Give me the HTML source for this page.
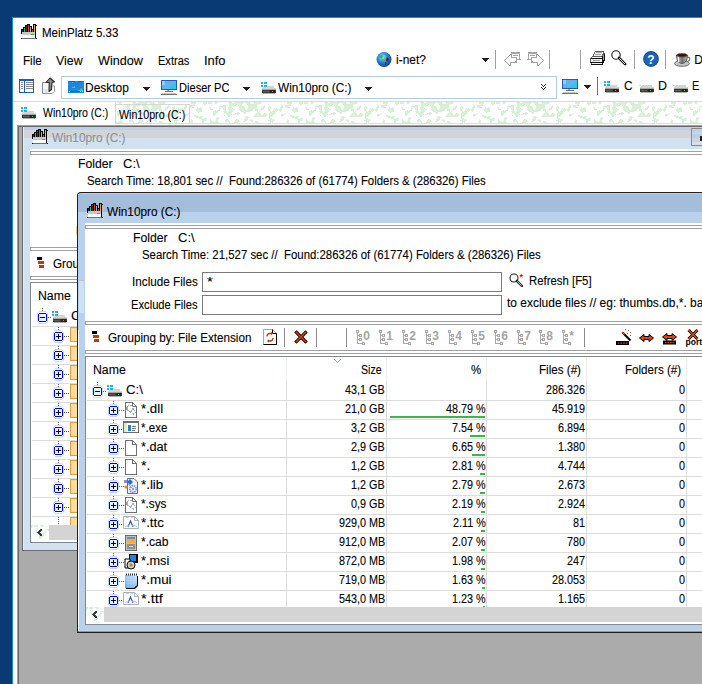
<!DOCTYPE html>
<html><head><meta charset="utf-8"><style>
html,body{margin:0;padding:0;}
body{width:702px;height:684px;overflow:hidden;position:relative;background:#0a3a74;font-family:"Liberation Sans",sans-serif;}
body div{position:absolute;box-sizing:border-box;}
.t{white-space:pre;line-height:1;-webkit-text-stroke:0.1px currentColor;}
svg{position:absolute;overflow:visible;}
</style></head><body>
<svg width="0" height="0" style="position:absolute"><defs><pattern id="nz" width="96" height="24" patternUnits="userSpaceOnUse"><rect width="96" height="24" fill="#fff"/><path d="M0 0h1v1h-1zM1 0h1v1h-1zM3 0h1v1h-1zM4 0h1v1h-1zM5 0h1v1h-1zM6 0h1v1h-1zM9 0h1v1h-1zM10 0h1v1h-1zM11 0h1v1h-1zM12 0h1v1h-1zM23 0h1v1h-1zM24 0h1v1h-1zM25 0h1v1h-1zM26 0h1v1h-1zM29 0h1v1h-1zM30 0h1v1h-1zM31 0h1v1h-1zM32 0h1v1h-1zM33 0h1v1h-1zM34 0h1v1h-1zM35 0h1v1h-1zM36 0h1v1h-1zM37 0h1v1h-1zM38 0h1v1h-1zM39 0h1v1h-1zM40 0h1v1h-1zM41 0h1v1h-1zM42 0h1v1h-1zM43 0h1v1h-1zM44 0h1v1h-1zM49 0h1v1h-1zM50 0h1v1h-1zM51 0h1v1h-1zM52 0h1v1h-1zM53 0h1v1h-1zM54 0h1v1h-1zM55 0h1v1h-1zM56 0h1v1h-1zM82 0h1v1h-1zM83 0h1v1h-1zM84 0h1v1h-1zM85 0h1v1h-1zM86 0h1v1h-1zM94 0h1v1h-1zM95 0h1v1h-1zM0 1h1v1h-1zM1 1h1v1h-1zM3 1h1v1h-1zM4 1h1v1h-1zM5 1h1v1h-1zM6 1h1v1h-1zM10 1h1v1h-1zM11 1h1v1h-1zM24 1h1v1h-1zM25 1h1v1h-1zM26 1h1v1h-1zM27 1h1v1h-1zM28 1h1v1h-1zM29 1h1v1h-1zM30 1h1v1h-1zM31 1h1v1h-1zM32 1h1v1h-1zM33 1h1v1h-1zM34 1h1v1h-1zM35 1h1v1h-1zM36 1h1v1h-1zM37 1h1v1h-1zM41 1h1v1h-1zM42 1h1v1h-1zM43 1h1v1h-1zM44 1h1v1h-1zM45 1h1v1h-1zM49 1h1v1h-1zM50 1h1v1h-1zM51 1h1v1h-1zM52 1h1v1h-1zM53 1h1v1h-1zM54 1h1v1h-1zM55 1h1v1h-1zM82 1h1v1h-1zM83 1h1v1h-1zM84 1h1v1h-1zM85 1h1v1h-1zM86 1h1v1h-1zM94 1h1v1h-1zM95 1h1v1h-1zM0 2h1v1h-1zM24 2h1v1h-1zM25 2h1v1h-1zM26 2h1v1h-1zM27 2h1v1h-1zM28 2h1v1h-1zM29 2h1v1h-1zM30 2h1v1h-1zM31 2h1v1h-1zM32 2h1v1h-1zM33 2h1v1h-1zM34 2h1v1h-1zM35 2h1v1h-1zM36 2h1v1h-1zM42 2h1v1h-1zM43 2h1v1h-1zM44 2h1v1h-1zM45 2h1v1h-1zM46 2h1v1h-1zM47 2h1v1h-1zM48 2h1v1h-1zM49 2h1v1h-1zM50 2h1v1h-1zM51 2h1v1h-1zM52 2h1v1h-1zM84 2h1v1h-1zM85 2h1v1h-1zM95 2h1v1h-1zM4 3h1v1h-1zM6 3h1v1h-1zM18 3h1v1h-1zM19 3h1v1h-1zM20 3h1v1h-1zM24 3h1v1h-1zM25 3h1v1h-1zM26 3h1v1h-1zM27 3h1v1h-1zM28 3h1v1h-1zM29 3h1v1h-1zM30 3h1v1h-1zM33 3h1v1h-1zM34 3h1v1h-1zM35 3h1v1h-1zM36 3h1v1h-1zM43 3h1v1h-1zM44 3h1v1h-1zM45 3h1v1h-1zM46 3h1v1h-1zM47 3h1v1h-1zM48 3h1v1h-1zM49 3h1v1h-1zM50 3h1v1h-1zM51 3h1v1h-1zM59 3h1v1h-1zM76 3h1v1h-1zM77 3h1v1h-1zM80 3h1v1h-1zM81 3h1v1h-1zM82 3h1v1h-1zM83 3h1v1h-1zM84 3h1v1h-1zM85 3h1v1h-1zM14 4h1v1h-1zM15 4h1v1h-1zM16 4h1v1h-1zM17 4h1v1h-1zM18 4h1v1h-1zM19 4h1v1h-1zM20 4h1v1h-1zM24 4h1v1h-1zM25 4h1v1h-1zM26 4h1v1h-1zM28 4h1v1h-1zM34 4h1v1h-1zM35 4h1v1h-1zM36 4h1v1h-1zM37 4h1v1h-1zM38 4h1v1h-1zM43 4h1v1h-1zM44 4h1v1h-1zM45 4h1v1h-1zM46 4h1v1h-1zM47 4h1v1h-1zM48 4h1v1h-1zM49 4h1v1h-1zM50 4h1v1h-1zM51 4h1v1h-1zM58 4h1v1h-1zM59 4h1v1h-1zM64 4h1v1h-1zM65 4h1v1h-1zM76 4h1v1h-1zM77 4h1v1h-1zM80 4h1v1h-1zM81 4h1v1h-1zM82 4h1v1h-1zM83 4h1v1h-1zM4 5h1v1h-1zM5 5h1v1h-1zM17 5h1v1h-1zM18 5h1v1h-1zM19 5h1v1h-1zM20 5h1v1h-1zM23 5h1v1h-1zM24 5h1v1h-1zM25 5h1v1h-1zM26 5h1v1h-1zM34 5h1v1h-1zM35 5h1v1h-1zM36 5h1v1h-1zM37 5h1v1h-1zM38 5h1v1h-1zM39 5h1v1h-1zM43 5h1v1h-1zM44 5h1v1h-1zM45 5h1v1h-1zM46 5h1v1h-1zM47 5h1v1h-1zM48 5h1v1h-1zM49 5h1v1h-1zM50 5h1v1h-1zM51 5h1v1h-1zM57 5h1v1h-1zM58 5h1v1h-1zM59 5h1v1h-1zM63 5h1v1h-1zM64 5h1v1h-1zM65 5h1v1h-1zM75 5h1v1h-1zM76 5h1v1h-1zM77 5h1v1h-1zM81 5h1v1h-1zM82 5h1v1h-1zM83 5h1v1h-1zM84 5h1v1h-1zM88 5h1v1h-1zM91 5h1v1h-1zM5 6h1v1h-1zM14 6h1v1h-1zM15 6h1v1h-1zM18 6h1v1h-1zM19 6h1v1h-1zM20 6h1v1h-1zM23 6h1v1h-1zM24 6h1v1h-1zM25 6h1v1h-1zM26 6h1v1h-1zM27 6h1v1h-1zM34 6h1v1h-1zM35 6h1v1h-1zM36 6h1v1h-1zM37 6h1v1h-1zM38 6h1v1h-1zM39 6h1v1h-1zM43 6h1v1h-1zM44 6h1v1h-1zM45 6h1v1h-1zM46 6h1v1h-1zM47 6h1v1h-1zM48 6h1v1h-1zM49 6h1v1h-1zM50 6h1v1h-1zM51 6h1v1h-1zM56 6h1v1h-1zM57 6h1v1h-1zM58 6h1v1h-1zM63 6h1v1h-1zM64 6h1v1h-1zM65 6h1v1h-1zM69 6h1v1h-1zM70 6h1v1h-1zM71 6h1v1h-1zM75 6h1v1h-1zM76 6h1v1h-1zM88 6h1v1h-1zM89 6h1v1h-1zM90 6h1v1h-1zM91 6h1v1h-1zM92 6h1v1h-1zM5 7h1v1h-1zM6 7h1v1h-1zM7 7h1v1h-1zM14 7h1v1h-1zM18 7h1v1h-1zM19 7h1v1h-1zM20 7h1v1h-1zM23 7h1v1h-1zM24 7h1v1h-1zM25 7h1v1h-1zM26 7h1v1h-1zM27 7h1v1h-1zM28 7h1v1h-1zM29 7h1v1h-1zM34 7h1v1h-1zM35 7h1v1h-1zM36 7h1v1h-1zM37 7h1v1h-1zM38 7h1v1h-1zM39 7h1v1h-1zM40 7h1v1h-1zM42 7h1v1h-1zM43 7h1v1h-1zM44 7h1v1h-1zM45 7h1v1h-1zM46 7h1v1h-1zM47 7h1v1h-1zM50 7h1v1h-1zM51 7h1v1h-1zM52 7h1v1h-1zM55 7h1v1h-1zM56 7h1v1h-1zM57 7h1v1h-1zM63 7h1v1h-1zM64 7h1v1h-1zM69 7h1v1h-1zM70 7h1v1h-1zM71 7h1v1h-1zM72 7h1v1h-1zM73 7h1v1h-1zM74 7h1v1h-1zM75 7h1v1h-1zM76 7h1v1h-1zM87 7h1v1h-1zM88 7h1v1h-1zM89 7h1v1h-1zM90 7h1v1h-1zM91 7h1v1h-1zM92 7h1v1h-1zM10 8h1v1h-1zM12 8h1v1h-1zM13 8h1v1h-1zM14 8h1v1h-1zM19 8h1v1h-1zM20 8h1v1h-1zM24 8h1v1h-1zM25 8h1v1h-1zM26 8h1v1h-1zM27 8h1v1h-1zM28 8h1v1h-1zM35 8h1v1h-1zM36 8h1v1h-1zM37 8h1v1h-1zM38 8h1v1h-1zM39 8h1v1h-1zM40 8h1v1h-1zM41 8h1v1h-1zM42 8h1v1h-1zM43 8h1v1h-1zM44 8h1v1h-1zM45 8h1v1h-1zM46 8h1v1h-1zM50 8h1v1h-1zM51 8h1v1h-1zM52 8h1v1h-1zM56 8h1v1h-1zM63 8h1v1h-1zM64 8h1v1h-1zM68 8h1v1h-1zM69 8h1v1h-1zM70 8h1v1h-1zM71 8h1v1h-1zM72 8h1v1h-1zM74 8h1v1h-1zM75 8h1v1h-1zM76 8h1v1h-1zM87 8h1v1h-1zM88 8h1v1h-1zM89 8h1v1h-1zM90 8h1v1h-1zM91 8h1v1h-1zM92 8h1v1h-1zM8 9h1v1h-1zM9 9h1v1h-1zM10 9h1v1h-1zM11 9h1v1h-1zM12 9h1v1h-1zM18 9h1v1h-1zM19 9h1v1h-1zM20 9h1v1h-1zM21 9h1v1h-1zM23 9h1v1h-1zM24 9h1v1h-1zM25 9h1v1h-1zM26 9h1v1h-1zM27 9h1v1h-1zM36 9h1v1h-1zM37 9h1v1h-1zM38 9h1v1h-1zM39 9h1v1h-1zM40 9h1v1h-1zM41 9h1v1h-1zM42 9h1v1h-1zM43 9h1v1h-1zM44 9h1v1h-1zM52 9h1v1h-1zM54 9h1v1h-1zM65 9h1v1h-1zM67 9h1v1h-1zM68 9h1v1h-1zM69 9h1v1h-1zM70 9h1v1h-1zM71 9h1v1h-1zM75 9h1v1h-1zM88 9h1v1h-1zM89 9h1v1h-1zM90 9h1v1h-1zM91 9h1v1h-1zM92 9h1v1h-1zM8 10h1v1h-1zM9 10h1v1h-1zM10 10h1v1h-1zM11 10h1v1h-1zM12 10h1v1h-1zM19 10h1v1h-1zM20 10h1v1h-1zM21 10h1v1h-1zM22 10h1v1h-1zM23 10h1v1h-1zM24 10h1v1h-1zM25 10h1v1h-1zM26 10h1v1h-1zM32 10h1v1h-1zM33 10h1v1h-1zM38 10h1v1h-1zM39 10h1v1h-1zM40 10h1v1h-1zM52 10h1v1h-1zM53 10h1v1h-1zM54 10h1v1h-1zM65 10h1v1h-1zM66 10h1v1h-1zM67 10h1v1h-1zM68 10h1v1h-1zM69 10h1v1h-1zM70 10h1v1h-1zM89 10h1v1h-1zM8 11h1v1h-1zM9 11h1v1h-1zM10 11h1v1h-1zM11 11h1v1h-1zM19 11h1v1h-1zM21 11h1v1h-1zM22 11h1v1h-1zM23 11h1v1h-1zM24 11h1v1h-1zM25 11h1v1h-1zM26 11h1v1h-1zM30 11h1v1h-1zM31 11h1v1h-1zM32 11h1v1h-1zM33 11h1v1h-1zM34 11h1v1h-1zM39 11h1v1h-1zM40 11h1v1h-1zM51 11h1v1h-1zM52 11h1v1h-1zM53 11h1v1h-1zM54 11h1v1h-1zM55 11h1v1h-1zM59 11h1v1h-1zM60 11h1v1h-1zM64 11h1v1h-1zM65 11h1v1h-1zM66 11h1v1h-1zM67 11h1v1h-1zM68 11h1v1h-1zM69 11h1v1h-1zM79 11h1v1h-1zM8 12h1v1h-1zM9 12h1v1h-1zM10 12h1v1h-1zM22 12h1v1h-1zM23 12h1v1h-1zM24 12h1v1h-1zM25 12h1v1h-1zM26 12h1v1h-1zM28 12h1v1h-1zM30 12h1v1h-1zM32 12h1v1h-1zM33 12h1v1h-1zM50 12h1v1h-1zM51 12h1v1h-1zM52 12h1v1h-1zM53 12h1v1h-1zM54 12h1v1h-1zM55 12h1v1h-1zM58 12h1v1h-1zM59 12h1v1h-1zM60 12h1v1h-1zM61 12h1v1h-1zM64 12h1v1h-1zM65 12h1v1h-1zM66 12h1v1h-1zM67 12h1v1h-1zM68 12h1v1h-1zM76 12h1v1h-1zM77 12h1v1h-1zM78 12h1v1h-1zM8 13h1v1h-1zM9 13h1v1h-1zM19 13h1v1h-1zM22 13h1v1h-1zM23 13h1v1h-1zM24 13h1v1h-1zM25 13h1v1h-1zM49 13h1v1h-1zM50 13h1v1h-1zM51 13h1v1h-1zM52 13h1v1h-1zM53 13h1v1h-1zM54 13h1v1h-1zM55 13h1v1h-1zM56 13h1v1h-1zM57 13h1v1h-1zM58 13h1v1h-1zM59 13h1v1h-1zM60 13h1v1h-1zM61 13h1v1h-1zM64 13h1v1h-1zM65 13h1v1h-1zM66 13h1v1h-1zM67 13h1v1h-1zM76 13h1v1h-1zM77 13h1v1h-1zM78 13h1v1h-1zM85 13h1v1h-1zM86 13h1v1h-1zM87 13h1v1h-1zM88 13h1v1h-1zM23 14h1v1h-1zM24 14h1v1h-1zM41 14h1v1h-1zM42 14h1v1h-1zM48 14h1v1h-1zM49 14h1v1h-1zM50 14h1v1h-1zM51 14h1v1h-1zM52 14h1v1h-1zM53 14h1v1h-1zM54 14h1v1h-1zM55 14h1v1h-1zM56 14h1v1h-1zM57 14h1v1h-1zM58 14h1v1h-1zM59 14h1v1h-1zM60 14h1v1h-1zM64 14h1v1h-1zM65 14h1v1h-1zM66 14h1v1h-1zM76 14h1v1h-1zM85 14h1v1h-1zM86 14h1v1h-1zM87 14h1v1h-1zM88 14h1v1h-1zM89 14h1v1h-1zM91 14h1v1h-1zM92 14h1v1h-1zM93 14h1v1h-1zM12 15h1v1h-1zM13 15h1v1h-1zM40 15h1v1h-1zM41 15h1v1h-1zM42 15h1v1h-1zM43 15h1v1h-1zM64 15h1v1h-1zM87 15h1v1h-1zM88 15h1v1h-1zM89 15h1v1h-1zM90 15h1v1h-1zM91 15h1v1h-1zM92 15h1v1h-1zM0 16h1v1h-1zM1 16h1v1h-1zM11 16h1v1h-1zM12 16h1v1h-1zM13 16h1v1h-1zM40 16h1v1h-1zM41 16h1v1h-1zM42 16h1v1h-1zM64 16h1v1h-1zM65 16h1v1h-1zM66 16h1v1h-1zM90 16h1v1h-1zM91 16h1v1h-1zM92 16h1v1h-1zM93 16h1v1h-1zM95 16h1v1h-1zM0 17h1v1h-1zM1 17h1v1h-1zM5 17h1v1h-1zM11 17h1v1h-1zM12 17h1v1h-1zM21 17h1v1h-1zM22 17h1v1h-1zM31 17h1v1h-1zM32 17h1v1h-1zM39 17h1v1h-1zM40 17h1v1h-1zM41 17h1v1h-1zM42 17h1v1h-1zM46 17h1v1h-1zM65 17h1v1h-1zM66 17h1v1h-1zM67 17h1v1h-1zM68 17h1v1h-1zM82 17h1v1h-1zM92 17h1v1h-1zM93 17h1v1h-1zM94 17h1v1h-1zM95 17h1v1h-1zM0 18h1v1h-1zM5 18h1v1h-1zM6 18h1v1h-1zM11 18h1v1h-1zM12 18h1v1h-1zM20 18h1v1h-1zM21 18h1v1h-1zM22 18h1v1h-1zM23 18h1v1h-1zM30 18h1v1h-1zM31 18h1v1h-1zM32 18h1v1h-1zM33 18h1v1h-1zM39 18h1v1h-1zM40 18h1v1h-1zM41 18h1v1h-1zM45 18h1v1h-1zM46 18h1v1h-1zM47 18h1v1h-1zM63 18h1v1h-1zM64 18h1v1h-1zM65 18h1v1h-1zM66 18h1v1h-1zM67 18h1v1h-1zM68 18h1v1h-1zM69 18h1v1h-1zM82 18h1v1h-1zM83 18h1v1h-1zM93 18h1v1h-1zM94 18h1v1h-1zM95 18h1v1h-1zM5 19h1v1h-1zM6 19h1v1h-1zM7 19h1v1h-1zM10 19h1v1h-1zM11 19h1v1h-1zM12 19h1v1h-1zM20 19h1v1h-1zM21 19h1v1h-1zM22 19h1v1h-1zM23 19h1v1h-1zM24 19h1v1h-1zM30 19h1v1h-1zM31 19h1v1h-1zM32 19h1v1h-1zM33 19h1v1h-1zM38 19h1v1h-1zM39 19h1v1h-1zM46 19h1v1h-1zM47 19h1v1h-1zM50 19h1v1h-1zM51 19h1v1h-1zM52 19h1v1h-1zM65 19h1v1h-1zM66 19h1v1h-1zM67 19h1v1h-1zM81 19h1v1h-1zM82 19h1v1h-1zM83 19h1v1h-1zM93 19h1v1h-1zM94 19h1v1h-1zM5 20h1v1h-1zM6 20h1v1h-1zM7 20h1v1h-1zM8 20h1v1h-1zM9 20h1v1h-1zM10 20h1v1h-1zM11 20h1v1h-1zM12 20h1v1h-1zM13 20h1v1h-1zM24 20h1v1h-1zM29 20h1v1h-1zM30 20h1v1h-1zM31 20h1v1h-1zM32 20h1v1h-1zM50 20h1v1h-1zM51 20h1v1h-1zM52 20h1v1h-1zM53 20h1v1h-1zM65 20h1v1h-1zM67 20h1v1h-1zM82 20h1v1h-1zM83 20h1v1h-1zM93 20h1v1h-1zM94 20h1v1h-1zM5 21h1v1h-1zM6 21h1v1h-1zM7 21h1v1h-1zM8 21h1v1h-1zM9 21h1v1h-1zM10 21h1v1h-1zM11 21h1v1h-1zM12 21h1v1h-1zM24 21h1v1h-1zM26 21h1v1h-1zM28 21h1v1h-1zM29 21h1v1h-1zM30 21h1v1h-1zM31 21h1v1h-1zM32 21h1v1h-1zM49 21h1v1h-1zM52 21h1v1h-1zM53 21h1v1h-1zM54 21h1v1h-1zM83 21h1v1h-1zM84 21h1v1h-1zM85 21h1v1h-1zM86 21h1v1h-1zM87 21h1v1h-1zM93 21h1v1h-1zM94 21h1v1h-1zM5 22h1v1h-1zM6 22h1v1h-1zM7 22h1v1h-1zM8 22h1v1h-1zM9 22h1v1h-1zM10 22h1v1h-1zM11 22h1v1h-1zM12 22h1v1h-1zM24 22h1v1h-1zM29 22h1v1h-1zM30 22h1v1h-1zM31 22h1v1h-1zM39 22h1v1h-1zM40 22h1v1h-1zM41 22h1v1h-1zM42 22h1v1h-1zM43 22h1v1h-1zM52 22h1v1h-1zM53 22h1v1h-1zM54 22h1v1h-1zM55 22h1v1h-1zM69 22h1v1h-1zM70 22h1v1h-1zM83 22h1v1h-1zM84 22h1v1h-1zM85 22h1v1h-1zM86 22h1v1h-1zM87 22h1v1h-1zM88 22h1v1h-1zM93 22h1v1h-1zM94 22h1v1h-1zM95 22h1v1h-1zM1 23h1v1h-1zM3 23h1v1h-1zM4 23h1v1h-1zM5 23h1v1h-1zM6 23h1v1h-1zM7 23h1v1h-1zM8 23h1v1h-1zM9 23h1v1h-1zM10 23h1v1h-1zM11 23h1v1h-1zM12 23h1v1h-1zM24 23h1v1h-1zM25 23h1v1h-1zM29 23h1v1h-1zM30 23h1v1h-1zM31 23h1v1h-1zM38 23h1v1h-1zM39 23h1v1h-1zM40 23h1v1h-1zM41 23h1v1h-1zM42 23h1v1h-1zM43 23h1v1h-1zM49 23h1v1h-1zM51 23h1v1h-1zM52 23h1v1h-1zM53 23h1v1h-1zM54 23h1v1h-1zM55 23h1v1h-1zM56 23h1v1h-1zM70 23h1v1h-1zM82 23h1v1h-1zM83 23h1v1h-1zM84 23h1v1h-1zM85 23h1v1h-1zM86 23h1v1h-1zM87 23h1v1h-1zM93 23h1v1h-1zM94 23h1v1h-1zM95 23h1v1h-1z" fill="#d8f0d8"/></pattern></defs></svg>
<div style="left:12px;top:17px;width:690px;height:667px;background:#ffffff;"></div>
<div style="left:12px;top:17px;width:691px;height:1px;background:#1e88e5;"></div>
<div style="left:12px;top:17px;width:1px;height:668px;background:#1e88e5;"></div>
<svg style="left:21px;top:24px;" width="16" height="16" viewBox="0 0 16 16" shape-rendering="crispEdges"><rect x="6" y="0" width="3" height="1" fill="#000"/><rect x="12" y="0" width="3" height="1" fill="#000"/><rect x="4" y="1" width="3" height="1" fill="#000"/><rect x="7" y="1" width="1" height="1" fill="#c84818"/><rect x="8" y="1" width="1" height="1" fill="#000"/><rect x="12" y="1" width="1" height="1" fill="#000"/><rect x="13" y="1" width="1" height="1" fill="#f0a848"/><rect x="14" y="1" width="2" height="1" fill="#000"/><rect x="4" y="2" width="1" height="1" fill="#000"/><rect x="5" y="2" width="1" height="1" fill="#503030"/><rect x="6" y="2" width="1" height="1" fill="#000"/><rect x="7" y="2" width="1" height="1" fill="#c84818"/><rect x="8" y="2" width="3" height="1" fill="#000"/><rect x="12" y="2" width="1" height="1" fill="#000"/><rect x="13" y="2" width="1" height="1" fill="#f0a848"/><rect x="14" y="2" width="1" height="1" fill="#000"/><rect x="2" y="3" width="3" height="1" fill="#000"/><rect x="5" y="3" width="1" height="1" fill="#503030"/><rect x="6" y="3" width="1" height="1" fill="#000"/><rect x="7" y="3" width="1" height="1" fill="#c84818"/><rect x="8" y="3" width="1" height="1" fill="#000"/><rect x="9" y="3" width="1" height="1" fill="#a0a8f0"/><rect x="10" y="3" width="1" height="1" fill="#000"/><rect x="12" y="3" width="1" height="1" fill="#000"/><rect x="13" y="3" width="1" height="1" fill="#f0a848"/><rect x="14" y="3" width="1" height="1" fill="#000"/><rect x="2" y="4" width="1" height="1" fill="#000"/><rect x="3" y="4" width="1" height="1" fill="#30c040"/><rect x="4" y="4" width="1" height="1" fill="#000"/><rect x="5" y="4" width="1" height="1" fill="#503030"/><rect x="6" y="4" width="1" height="1" fill="#000"/><rect x="7" y="4" width="1" height="1" fill="#c84818"/><rect x="8" y="4" width="1" height="1" fill="#000"/><rect x="9" y="4" width="1" height="1" fill="#a0a8f0"/><rect x="10" y="4" width="1" height="1" fill="#000"/><rect x="12" y="4" width="1" height="1" fill="#000"/><rect x="13" y="4" width="1" height="1" fill="#f0a848"/><rect x="14" y="4" width="1" height="1" fill="#000"/><rect x="0" y="5" width="3" height="1" fill="#000"/><rect x="3" y="5" width="1" height="1" fill="#30c040"/><rect x="4" y="5" width="1" height="1" fill="#000"/><rect x="5" y="5" width="1" height="1" fill="#503030"/><rect x="6" y="5" width="1" height="1" fill="#000"/><rect x="7" y="5" width="1" height="1" fill="#c84818"/><rect x="8" y="5" width="1" height="1" fill="#000"/><rect x="9" y="5" width="1" height="1" fill="#a0a8f0"/><rect x="10" y="5" width="3" height="1" fill="#000"/><rect x="13" y="5" width="1" height="1" fill="#f0a848"/><rect x="14" y="5" width="1" height="1" fill="#000"/><rect x="0" y="6" width="1" height="1" fill="#000"/><rect x="1" y="6" width="1" height="1" fill="#1010ff"/><rect x="2" y="6" width="1" height="1" fill="#000"/><rect x="3" y="6" width="1" height="1" fill="#30c040"/><rect x="4" y="6" width="1" height="1" fill="#000"/><rect x="5" y="6" width="1" height="1" fill="#503030"/><rect x="6" y="6" width="1" height="1" fill="#000"/><rect x="7" y="6" width="1" height="1" fill="#c84818"/><rect x="8" y="6" width="1" height="1" fill="#000"/><rect x="9" y="6" width="1" height="1" fill="#a0a8f0"/><rect x="10" y="6" width="1" height="1" fill="#000"/><rect x="11" y="6" width="1" height="1" fill="#c84818"/><rect x="12" y="6" width="1" height="1" fill="#000"/><rect x="13" y="6" width="1" height="1" fill="#f0a848"/><rect x="14" y="6" width="1" height="1" fill="#000"/><rect x="0" y="7" width="1" height="1" fill="#000"/><rect x="1" y="7" width="1" height="1" fill="#1010ff"/><rect x="2" y="7" width="1" height="1" fill="#000"/><rect x="3" y="7" width="1" height="1" fill="#30c040"/><rect x="4" y="7" width="1" height="1" fill="#000"/><rect x="5" y="7" width="1" height="1" fill="#503030"/><rect x="6" y="7" width="1" height="1" fill="#000"/><rect x="7" y="7" width="1" height="1" fill="#c84818"/><rect x="8" y="7" width="1" height="1" fill="#000"/><rect x="9" y="7" width="1" height="1" fill="#a0a8f0"/><rect x="10" y="7" width="1" height="1" fill="#000"/><rect x="11" y="7" width="1" height="1" fill="#c84818"/><rect x="12" y="7" width="1" height="1" fill="#000"/><rect x="13" y="7" width="1" height="1" fill="#f0a848"/><rect x="14" y="7" width="1" height="1" fill="#000"/><rect x="0" y="8" width="1" height="1" fill="#000"/><rect x="1" y="8" width="13" height="1" fill="#c8ccc0"/><rect x="14" y="8" width="1" height="1" fill="#000"/><rect x="0" y="9" width="1" height="1" fill="#000"/><rect x="1" y="9" width="13" height="1" fill="#c8ccc0"/><rect x="14" y="9" width="1" height="1" fill="#000"/><rect x="1" y="10" width="9" height="1" fill="#c8ccc0"/><rect x="10" y="10" width="3" height="1" fill="#30c040"/><rect x="13" y="10" width="1" height="1" fill="#c8ccc0"/><rect x="14" y="10" width="1" height="1" fill="#000"/><rect x="1" y="11" width="13" height="1" fill="#ffffff"/><rect x="14" y="11" width="1" height="1" fill="#000"/><rect x="1" y="12" width="13" height="1" fill="#ffffff"/><rect x="14" y="12" width="1" height="1" fill="#000"/><rect x="1" y="13" width="13" height="1" fill="#ffffff"/><rect x="14" y="13" width="1" height="1" fill="#000"/><rect x="0" y="14" width="1" height="1" fill="#000"/><rect x="1" y="14" width="14" height="1" fill="#707070"/><rect x="15" y="14" width="1" height="1" fill="#000"/></svg>
<div class="t" style="left:41.71px;top:27.00px;font-size:12px;color:#000;font-weight:normal;transform:scaleX(0.9621);transform-origin:0 0;">MeinPlatz 5.33</div>
<div class="t" style="left:22.90px;top:55.00px;font-size:12px;color:#000;font-weight:normal;transform:scaleX(0.9719);transform-origin:0 0;">File</div>
<div class="t" style="left:56.06px;top:55.00px;font-size:12px;color:#000;font-weight:normal;transform:scaleX(1.0346);transform-origin:0 0;">View</div>
<div class="t" style="left:97.54px;top:55.00px;font-size:12px;color:#000;font-weight:normal;transform:scaleX(1.0498);transform-origin:0 0;">Window</div>
<div class="t" style="left:157.54px;top:55.00px;font-size:12px;color:#000;font-weight:normal;transform:scaleX(0.9209);transform-origin:0 0;">Extras</div>
<div class="t" style="left:203.62px;top:55.00px;font-size:12px;color:#000;font-weight:normal;transform:scaleX(1.0767);transform-origin:0 0;">Info</div>
<div class="t" style="left:396.08px;top:54.00px;font-size:12px;color:#000;font-weight:normal;transform:scaleX(0.9968);transform-origin:0 0;">i-net?</div>
<div class="t" style="left:694.28px;top:54.00px;font-size:12px;color:#000;font-weight:normal;transform:scaleX(1.0000);transform-origin:0 0;">D</div>
<svg style="left:376px;top:51px;shape-rendering:auto" width="16" height="16" viewBox="0 0 16 16" shape-rendering="crispEdges"><defs><radialGradient id="gl" cx="0.4" cy="0.35" r="0.7"><stop offset="0" stop-color="#9fe0ff"/><stop offset="0.5" stop-color="#2a7fd8"/><stop offset="1" stop-color="#103a8a"/></radialGradient></defs>
<circle cx="8" cy="8.5" r="7.5" fill="url(#gl)"/>
<path d="M3 5 l3 -1 l1 2 l-2 2z M5 9 l2 -1 l1 2z M10 5 l2 1 l0 3 l-2 -1z M8 10 l2 0 l-1 3z" fill="#28c040"/>
<path d="M11 6 l2 2 l-2 3 l-1 -2z M9 11 l1 0 l0 3 l-1 0z" fill="#5a1c1c"/></svg>
<svg style="left:482px;top:58px;" width="7" height="4" viewBox="0 0 7 4" shape-rendering="crispEdges"><rect x="0" y="0" width="7" height="1" fill="#2a1a1a"/><rect x="1" y="1" width="5" height="1" fill="#2a1a1a"/><rect x="2" y="2" width="3" height="1" fill="#2a1a1a"/><rect x="3" y="3" width="1" height="1" fill="#2a1a1a"/></svg>
<div style="left:495px;top:50px;width:1px;height:19px;background:#a0a0a0;"></div>
<div style="left:549px;top:50px;width:1px;height:19px;background:#a0a0a0;"></div>
<div style="left:580px;top:50px;width:1px;height:19px;background:#a0a0a0;"></div>
<div style="left:634px;top:50px;width:1px;height:19px;background:#a0a0a0;"></div>
<div style="left:665px;top:50px;width:1px;height:19px;background:#a0a0a0;"></div>
<svg style="left:503px;top:52px;" width="18" height="14" viewBox="0 0 18 14" shape-rendering="crispEdges"><rect x="8" y="0" width="9" height="1" fill="#a4a4a4"/><rect x="8" y="1" width="9" height="1" fill="#a4a4a4"/><rect x="7" y="2" width="2" height="1" fill="#a4a4a4"/><rect x="16" y="2" width="1" height="1" fill="#a4a4a4"/><rect x="6" y="3" width="1" height="1" fill="#a4a4a4"/><rect x="8" y="3" width="1" height="1" fill="#a4a4a4"/><rect x="10" y="3" width="5" height="1" fill="#a4a4a4"/><rect x="16" y="3" width="1" height="1" fill="#a4a4a4"/><rect x="5" y="4" width="1" height="1" fill="#a4a4a4"/><rect x="8" y="4" width="1" height="1" fill="#a4a4a4"/><rect x="16" y="4" width="1" height="1" fill="#a4a4a4"/><rect x="4" y="5" width="1" height="1" fill="#a4a4a4"/><rect x="8" y="5" width="6" height="1" fill="#a4a4a4"/><rect x="16" y="5" width="1" height="1" fill="#a4a4a4"/><rect x="3" y="6" width="1" height="1" fill="#a4a4a4"/><rect x="13" y="6" width="1" height="1" fill="#a4a4a4"/><rect x="16" y="6" width="1" height="1" fill="#a4a4a4"/><rect x="2" y="7" width="1" height="1" fill="#a4a4a4"/><rect x="13" y="7" width="5" height="1" fill="#a4a4a4"/><rect x="1" y="8" width="1" height="1" fill="#a4a4a4"/><rect x="13" y="8" width="1" height="1" fill="#a4a4a4"/><rect x="2" y="9" width="1" height="1" fill="#a4a4a4"/><rect x="12" y="9" width="2" height="1" fill="#a4a4a4"/><rect x="3" y="10" width="1" height="1" fill="#a4a4a4"/><rect x="7" y="10" width="7" height="1" fill="#a4a4a4"/><rect x="4" y="11" width="1" height="1" fill="#a4a4a4"/><rect x="7" y="11" width="1" height="1" fill="#a4a4a4"/><rect x="5" y="12" width="1" height="1" fill="#a4a4a4"/><rect x="7" y="12" width="1" height="1" fill="#a4a4a4"/><rect x="6" y="13" width="2" height="1" fill="#a4a4a4"/></svg>
<svg style="left:527px;top:52px;" width="18" height="14" viewBox="0 0 18 14" shape-rendering="crispEdges"><rect x="1" y="0" width="9" height="1" fill="#a4a4a4"/><rect x="1" y="1" width="9" height="1" fill="#a4a4a4"/><rect x="1" y="2" width="1" height="1" fill="#a4a4a4"/><rect x="9" y="2" width="2" height="1" fill="#a4a4a4"/><rect x="1" y="3" width="1" height="1" fill="#a4a4a4"/><rect x="3" y="3" width="5" height="1" fill="#a4a4a4"/><rect x="9" y="3" width="1" height="1" fill="#a4a4a4"/><rect x="11" y="3" width="1" height="1" fill="#a4a4a4"/><rect x="1" y="4" width="1" height="1" fill="#a4a4a4"/><rect x="9" y="4" width="1" height="1" fill="#a4a4a4"/><rect x="12" y="4" width="1" height="1" fill="#a4a4a4"/><rect x="1" y="5" width="1" height="1" fill="#a4a4a4"/><rect x="4" y="5" width="6" height="1" fill="#a4a4a4"/><rect x="13" y="5" width="1" height="1" fill="#a4a4a4"/><rect x="1" y="6" width="1" height="1" fill="#a4a4a4"/><rect x="4" y="6" width="1" height="1" fill="#a4a4a4"/><rect x="14" y="6" width="1" height="1" fill="#a4a4a4"/><rect x="0" y="7" width="5" height="1" fill="#a4a4a4"/><rect x="15" y="7" width="1" height="1" fill="#a4a4a4"/><rect x="4" y="8" width="1" height="1" fill="#a4a4a4"/><rect x="16" y="8" width="1" height="1" fill="#a4a4a4"/><rect x="4" y="9" width="2" height="1" fill="#a4a4a4"/><rect x="15" y="9" width="1" height="1" fill="#a4a4a4"/><rect x="4" y="10" width="7" height="1" fill="#a4a4a4"/><rect x="14" y="10" width="1" height="1" fill="#a4a4a4"/><rect x="10" y="11" width="1" height="1" fill="#a4a4a4"/><rect x="13" y="11" width="1" height="1" fill="#a4a4a4"/><rect x="10" y="12" width="1" height="1" fill="#a4a4a4"/><rect x="12" y="12" width="1" height="1" fill="#a4a4a4"/><rect x="10" y="13" width="2" height="1" fill="#a4a4a4"/></svg>
<svg style="left:589px;top:51px;" width="16" height="14" viewBox="0 0 16 14" shape-rendering="crispEdges"><rect x="6" y="0" width="9" height="1" fill="#606060"/><rect x="5" y="1" width="1" height="1" fill="#606060"/><rect x="6" y="1" width="1" height="1" fill="#f0f0f0"/><rect x="7" y="1" width="6" height="1" fill="#a0a0a0"/><rect x="13" y="1" width="1" height="1" fill="#f0f0f0"/><rect x="14" y="1" width="1" height="1" fill="#606060"/><rect x="5" y="2" width="1" height="1" fill="#606060"/><rect x="6" y="2" width="8" height="1" fill="#f0f0f0"/><rect x="14" y="2" width="2" height="1" fill="#606060"/><rect x="4" y="3" width="1" height="1" fill="#606060"/><rect x="5" y="3" width="1" height="1" fill="#f0f0f0"/><rect x="6" y="3" width="6" height="1" fill="#a0a0a0"/><rect x="12" y="3" width="1" height="1" fill="#f0f0f0"/><rect x="13" y="3" width="2" height="1" fill="#606060"/><rect x="15" y="3" width="1" height="1" fill="#101010"/><rect x="4" y="4" width="1" height="1" fill="#606060"/><rect x="5" y="4" width="8" height="1" fill="#f0f0f0"/><rect x="13" y="4" width="1" height="1" fill="#606060"/><rect x="14" y="4" width="1" height="1" fill="#a0a0a0"/><rect x="15" y="4" width="1" height="1" fill="#101010"/><rect x="3" y="5" width="10" height="1" fill="#606060"/><rect x="13" y="5" width="1" height="1" fill="#101010"/><rect x="14" y="5" width="1" height="1" fill="#a0a0a0"/><rect x="15" y="5" width="1" height="1" fill="#101010"/><rect x="2" y="6" width="1" height="1" fill="#606060"/><rect x="3" y="6" width="10" height="1" fill="#f0f0f0"/><rect x="13" y="6" width="1" height="1" fill="#101010"/><rect x="14" y="6" width="1" height="1" fill="#a0a0a0"/><rect x="15" y="6" width="1" height="1" fill="#101010"/><rect x="1" y="7" width="1" height="1" fill="#606060"/><rect x="2" y="7" width="12" height="1" fill="#101010"/><rect x="14" y="7" width="1" height="1" fill="#a0a0a0"/><rect x="15" y="7" width="1" height="1" fill="#101010"/><rect x="1" y="8" width="1" height="1" fill="#606060"/><rect x="2" y="8" width="11" height="1" fill="#f0f0f0"/><rect x="13" y="8" width="1" height="1" fill="#101010"/><rect x="14" y="8" width="1" height="1" fill="#a0a0a0"/><rect x="15" y="8" width="1" height="1" fill="#101010"/><rect x="1" y="9" width="1" height="1" fill="#606060"/><rect x="2" y="9" width="2" height="1" fill="#f0f0f0"/><rect x="4" y="9" width="7" height="1" fill="#a0a0a0"/><rect x="11" y="9" width="2" height="1" fill="#f0f0f0"/><rect x="13" y="9" width="3" height="1" fill="#101010"/><rect x="1" y="10" width="1" height="1" fill="#606060"/><rect x="2" y="10" width="11" height="1" fill="#f0f0f0"/><rect x="13" y="10" width="2" height="1" fill="#101010"/><rect x="1" y="11" width="14" height="1" fill="#101010"/><rect x="2" y="12" width="1" height="1" fill="#606060"/><rect x="3" y="12" width="10" height="1" fill="#f0f0f0"/><rect x="13" y="12" width="1" height="1" fill="#101010"/><rect x="2" y="13" width="12" height="1" fill="#101010"/></svg>
<svg style="left:611px;top:50px;shape-rendering:auto" width="16" height="16" viewBox="0 0 16 16" shape-rendering="crispEdges"><circle cx="5" cy="5" r="4.2" fill="#fff" stroke="#111" stroke-width="1.1"/><path d="M8 8 L14.2 14.2" stroke="#111" stroke-width="2.6" stroke-linecap="round"/><path d="M8.5 8.5 L13.8 13.8" stroke="#e8e8e8" stroke-width="1" stroke-linecap="round"/></svg>
<svg style="left:643px;top:51px;shape-rendering:auto" width="16" height="16" viewBox="0 0 16 16" shape-rendering="crispEdges"><circle cx="8" cy="8" r="7.9" fill="#164e98"/><circle cx="8" cy="8" r="6.8" fill="#1c62b8"/><text x="8" y="12.6" text-anchor="middle" font-family="Liberation Sans" font-weight="bold" font-size="12" fill="#fff">?</text></svg>
<svg style="left:674px;top:51px;shape-rendering:auto" width="17" height="16" viewBox="0 0 17 16" shape-rendering="crispEdges"><defs><linearGradient id="cup" x1="0" x2="1"><stop offset="0" stop-color="#e8e8e8"/><stop offset="0.5" stop-color="#707070"/><stop offset="1" stop-color="#c0c0c0"/></linearGradient></defs><ellipse cx="8" cy="12.5" rx="7.5" ry="2.8" fill="#c8c8c8" stroke="#5a5a5a" stroke-width="0.9"/><path d="M2.5 4 Q2.5 12 8 12.5 Q13.5 12 13.5 4 Z" fill="url(#cup)" stroke="#4a4a4a" stroke-width="0.9"/><path d="M13 6 q3.5 0 2.5 3 q-1 1.5 -3 1.5" fill="none" stroke="#6a6a6a" stroke-width="1.2"/><ellipse cx="8" cy="4.2" rx="5.3" ry="2" fill="#3a140c" stroke="#888" stroke-width="0.6"/><path d="M4.5 6 v5" stroke="#fff" stroke-width="1"/></svg>
<svg style="left:19px;top:79px;" width="15" height="14" viewBox="0 0 15 14" shape-rendering="crispEdges"><rect x="0" y="0" width="15" height="1" fill="#1c5cc4"/><rect x="0" y="1" width="15" height="1" fill="#1c5cc4"/><rect x="0" y="2" width="1" height="1" fill="#1c5cc4"/><rect x="1" y="2" width="4" height="1" fill="#ffffff"/><rect x="5" y="2" width="1" height="1" fill="#1c5cc4"/><rect x="6" y="2" width="8" height="1" fill="#ffffff"/><rect x="14" y="2" width="1" height="1" fill="#1c5cc4"/><rect x="0" y="3" width="1" height="1" fill="#1c5cc4"/><rect x="1" y="3" width="1" height="1" fill="#ffffff"/><rect x="2" y="3" width="2" height="1" fill="#8a8a8a"/><rect x="4" y="3" width="1" height="1" fill="#ffffff"/><rect x="5" y="3" width="1" height="1" fill="#1c5cc4"/><rect x="6" y="3" width="1" height="1" fill="#ffffff"/><rect x="7" y="3" width="7" height="1" fill="#8a8a8a"/><rect x="14" y="3" width="1" height="1" fill="#1c5cc4"/><rect x="0" y="4" width="1" height="1" fill="#1c5cc4"/><rect x="1" y="4" width="4" height="1" fill="#ffffff"/><rect x="5" y="4" width="1" height="1" fill="#1c5cc4"/><rect x="6" y="4" width="8" height="1" fill="#ffffff"/><rect x="14" y="4" width="1" height="1" fill="#1c5cc4"/><rect x="0" y="5" width="1" height="1" fill="#1c5cc4"/><rect x="1" y="5" width="1" height="1" fill="#ffffff"/><rect x="2" y="5" width="2" height="1" fill="#8a8a8a"/><rect x="4" y="5" width="1" height="1" fill="#ffffff"/><rect x="5" y="5" width="1" height="1" fill="#1c5cc4"/><rect x="6" y="5" width="1" height="1" fill="#ffffff"/><rect x="7" y="5" width="7" height="1" fill="#8a8a8a"/><rect x="14" y="5" width="1" height="1" fill="#1c5cc4"/><rect x="0" y="6" width="1" height="1" fill="#1c5cc4"/><rect x="1" y="6" width="4" height="1" fill="#ffffff"/><rect x="5" y="6" width="1" height="1" fill="#1c5cc4"/><rect x="6" y="6" width="8" height="1" fill="#ffffff"/><rect x="14" y="6" width="1" height="1" fill="#1c5cc4"/><rect x="0" y="7" width="1" height="1" fill="#1c5cc4"/><rect x="1" y="7" width="1" height="1" fill="#ffffff"/><rect x="2" y="7" width="2" height="1" fill="#8a8a8a"/><rect x="4" y="7" width="1" height="1" fill="#ffffff"/><rect x="5" y="7" width="1" height="1" fill="#1c5cc4"/><rect x="6" y="7" width="1" height="1" fill="#ffffff"/><rect x="7" y="7" width="7" height="1" fill="#8a8a8a"/><rect x="14" y="7" width="1" height="1" fill="#1c5cc4"/><rect x="0" y="8" width="1" height="1" fill="#1c5cc4"/><rect x="1" y="8" width="4" height="1" fill="#ffffff"/><rect x="5" y="8" width="1" height="1" fill="#1c5cc4"/><rect x="6" y="8" width="8" height="1" fill="#ffffff"/><rect x="14" y="8" width="1" height="1" fill="#1c5cc4"/><rect x="0" y="9" width="1" height="1" fill="#1c5cc4"/><rect x="1" y="9" width="1" height="1" fill="#ffffff"/><rect x="2" y="9" width="2" height="1" fill="#8a8a8a"/><rect x="4" y="9" width="1" height="1" fill="#ffffff"/><rect x="5" y="9" width="1" height="1" fill="#1c5cc4"/><rect x="6" y="9" width="1" height="1" fill="#ffffff"/><rect x="7" y="9" width="7" height="1" fill="#8a8a8a"/><rect x="14" y="9" width="1" height="1" fill="#1c5cc4"/><rect x="0" y="10" width="1" height="1" fill="#1c5cc4"/><rect x="1" y="10" width="4" height="1" fill="#ffffff"/><rect x="5" y="10" width="1" height="1" fill="#1c5cc4"/><rect x="6" y="10" width="8" height="1" fill="#ffffff"/><rect x="14" y="10" width="1" height="1" fill="#1c5cc4"/><rect x="0" y="11" width="1" height="1" fill="#1c5cc4"/><rect x="1" y="11" width="4" height="1" fill="#ffffff"/><rect x="5" y="11" width="1" height="1" fill="#1c5cc4"/><rect x="6" y="11" width="8" height="1" fill="#ffffff"/><rect x="14" y="11" width="1" height="1" fill="#1c5cc4"/><rect x="0" y="12" width="1" height="1" fill="#1c5cc4"/><rect x="1" y="12" width="4" height="1" fill="#ffffff"/><rect x="5" y="12" width="1" height="1" fill="#1c5cc4"/><rect x="6" y="12" width="8" height="1" fill="#ffffff"/><rect x="14" y="12" width="1" height="1" fill="#1c5cc4"/><rect x="0" y="13" width="15" height="1" fill="#1c5cc4"/></svg>
<svg style="left:42px;top:77px;shape-rendering:auto" width="14" height="18" viewBox="0 0 14 18" shape-rendering="crispEdges"><path d="M0.5 5.5 H5 M0.5 5.5 V16.5 H3" fill="none" stroke="#8a8a8a"/><path d="M1 6 H6 V16 H1Z" fill="#f4f8fc"/><path d="M1.5 12 H6 V16 H1.5Z" fill="#d8e8f4"/><path d="M10.5 9 H12.5 V14.5 L10 16.5 H3" fill="none" stroke="#9a9a9a"/><path d="M4 5.5 L8 1 L12.5 5 L10 5.5 L9.5 12.5 L7 14.5 L7.2 5.5 Z" fill="#8a8a8a" stroke="#2a2a2a" stroke-width="1.1" stroke-linejoin="round"/></svg>
<div style="left:61px;top:76px;width:496px;height:23px;background:#ffffff;border:1px solid #b4cbe6;"></div>
<div class="t" style="left:85.28px;top:82.00px;font-size:12px;color:#000;font-weight:normal;transform:scaleX(0.9955);transform-origin:0 0;">Desktop</div>
<svg style="left:68px;top:81px;" width="16" height="12" viewBox="0 0 16 12" shape-rendering="crispEdges"><rect x="0" y="0" width="1" height="1" fill="#1f86de"/><rect x="1" y="0" width="6" height="1" fill="#1560c0"/><rect x="7" y="0" width="3" height="1" fill="#1f86de"/><rect x="10" y="0" width="4" height="1" fill="#1560c0"/><rect x="14" y="0" width="2" height="1" fill="#1f86de"/><rect x="0" y="1" width="4" height="1" fill="#1f86de"/><rect x="4" y="1" width="1" height="1" fill="#31c8e0"/><rect x="5" y="1" width="11" height="1" fill="#1f86de"/><rect x="0" y="2" width="16" height="1" fill="#1f86de"/><rect x="0" y="3" width="16" height="1" fill="#1f86de"/><rect x="0" y="4" width="16" height="1" fill="#1f86de"/><rect x="0" y="5" width="6" height="1" fill="#1f86de"/><rect x="6" y="5" width="1" height="1" fill="#31c8e0"/><rect x="7" y="5" width="9" height="1" fill="#1f86de"/><rect x="0" y="6" width="4" height="1" fill="#1f86de"/><rect x="4" y="6" width="3" height="1" fill="#31c8e0"/><rect x="7" y="6" width="9" height="1" fill="#1f86de"/><rect x="0" y="7" width="13" height="1" fill="#1f86de"/><rect x="13" y="7" width="1" height="1" fill="#31c8e0"/><rect x="14" y="7" width="2" height="1" fill="#1f86de"/><rect x="0" y="8" width="12" height="1" fill="#1f86de"/><rect x="12" y="8" width="2" height="1" fill="#31c8e0"/><rect x="14" y="8" width="2" height="1" fill="#1f86de"/><rect x="0" y="9" width="10" height="1" fill="#1f86de"/><rect x="10" y="9" width="5" height="1" fill="#31c8e0"/><rect x="15" y="9" width="1" height="1" fill="#1f86de"/><rect x="0" y="10" width="1" height="1" fill="#1f86de"/><rect x="1" y="10" width="1" height="1" fill="#e8f4ff"/><rect x="2" y="10" width="10" height="1" fill="#1560c0"/><rect x="12" y="10" width="1" height="1" fill="#e8f4ff"/><rect x="13" y="10" width="1" height="1" fill="#1f86de"/><rect x="14" y="10" width="1" height="1" fill="#e8f4ff"/><rect x="15" y="10" width="1" height="1" fill="#1f86de"/><rect x="0" y="11" width="16" height="1" fill="#1f86de"/></svg>
<svg style="left:143px;top:87px;" width="7" height="4" viewBox="0 0 7 4" shape-rendering="crispEdges"><rect x="0" y="0" width="7" height="1" fill="#2a1a1a"/><rect x="1" y="1" width="5" height="1" fill="#2a1a1a"/><rect x="2" y="2" width="3" height="1" fill="#2a1a1a"/><rect x="3" y="3" width="1" height="1" fill="#2a1a1a"/></svg>
<svg style="left:161px;top:80px;" width="16" height="15" viewBox="0 0 16 15" shape-rendering="crispEdges"><rect x="0" y="0" width="16" height="1" fill="#1a5cc0"/><rect x="0" y="1" width="1" height="1" fill="#1a5cc0"/><rect x="1" y="1" width="3" height="1" fill="#90d0f8"/><rect x="4" y="1" width="11" height="1" fill="#64b0f2"/><rect x="15" y="1" width="1" height="1" fill="#1a5cc0"/><rect x="0" y="2" width="1" height="1" fill="#1a5cc0"/><rect x="1" y="2" width="3" height="1" fill="#90d0f8"/><rect x="4" y="2" width="11" height="1" fill="#64b0f2"/><rect x="15" y="2" width="1" height="1" fill="#1a5cc0"/><rect x="0" y="3" width="1" height="1" fill="#1a5cc0"/><rect x="1" y="3" width="3" height="1" fill="#90d0f8"/><rect x="4" y="3" width="9" height="1" fill="#64b0f2"/><rect x="13" y="3" width="2" height="1" fill="#30c8e0"/><rect x="15" y="3" width="1" height="1" fill="#1a5cc0"/><rect x="0" y="4" width="1" height="1" fill="#1a5cc0"/><rect x="1" y="4" width="3" height="1" fill="#90d0f8"/><rect x="4" y="4" width="8" height="1" fill="#64b0f2"/><rect x="12" y="4" width="3" height="1" fill="#30c8e0"/><rect x="15" y="4" width="1" height="1" fill="#1a5cc0"/><rect x="0" y="5" width="1" height="1" fill="#1a5cc0"/><rect x="1" y="5" width="9" height="1" fill="#64b0f2"/><rect x="10" y="5" width="5" height="1" fill="#30c8e0"/><rect x="15" y="5" width="1" height="1" fill="#1a5cc0"/><rect x="0" y="6" width="1" height="1" fill="#1a5cc0"/><rect x="1" y="6" width="8" height="1" fill="#64b0f2"/><rect x="9" y="6" width="6" height="1" fill="#30c8e0"/><rect x="15" y="6" width="1" height="1" fill="#1a5cc0"/><rect x="0" y="7" width="1" height="1" fill="#1a5cc0"/><rect x="1" y="7" width="6" height="1" fill="#64b0f2"/><rect x="7" y="7" width="8" height="1" fill="#30c8e0"/><rect x="15" y="7" width="1" height="1" fill="#1a5cc0"/><rect x="0" y="8" width="1" height="1" fill="#1a5cc0"/><rect x="1" y="8" width="5" height="1" fill="#64b0f2"/><rect x="6" y="8" width="9" height="1" fill="#30c8e0"/><rect x="15" y="8" width="1" height="1" fill="#1a5cc0"/><rect x="0" y="9" width="16" height="1" fill="#1a5cc0"/><rect x="6" y="10" width="2" height="1" fill="#a0a0a0"/><rect x="4" y="11" width="8" height="1" fill="#707070"/><rect x="1" y="13" width="14" height="1" fill="#c8c8c8"/><rect x="0" y="14" width="16" height="1" fill="#707070"/></svg>
<svg style="left:243px;top:87px;" width="7" height="4" viewBox="0 0 7 4" shape-rendering="crispEdges"><rect x="0" y="0" width="7" height="1" fill="#2a1a1a"/><rect x="1" y="1" width="5" height="1" fill="#2a1a1a"/><rect x="2" y="2" width="3" height="1" fill="#2a1a1a"/><rect x="3" y="3" width="1" height="1" fill="#2a1a1a"/></svg>
<svg style="left:261px;top:81px;" width="15" height="13" viewBox="0 0 15 13" shape-rendering="crispEdges"><rect x="0" y="1" width="2" height="1" fill="#22b4dc"/><rect x="3" y="1" width="3" height="1" fill="#22b4dc"/><rect x="0" y="2" width="2" height="1" fill="#22b4dc"/><rect x="3" y="2" width="3" height="1" fill="#22b4dc"/><rect x="0" y="4" width="2" height="1" fill="#22b4dc"/><rect x="3" y="4" width="3" height="1" fill="#22b4dc"/><rect x="0" y="5" width="2" height="1" fill="#22b4dc"/><rect x="3" y="5" width="3" height="1" fill="#22b4dc"/><rect x="6" y="5" width="7" height="1" fill="#d4d4d4"/><rect x="2" y="6" width="11" height="1" fill="#d4d4d4"/><rect x="1" y="7" width="14" height="1" fill="#d4d4d4"/><rect x="1" y="8" width="14" height="1" fill="#a8a8a8"/><rect x="1" y="9" width="8" height="1" fill="#3c3c3c"/><rect x="9" y="9" width="5" height="1" fill="#3a1c1c"/><rect x="14" y="9" width="1" height="1" fill="#3c3c3c"/><rect x="1" y="10" width="1" height="1" fill="#3c3c3c"/><rect x="2" y="10" width="6" height="1" fill="#5a5a5a"/><rect x="8" y="10" width="1" height="1" fill="#3c3c3c"/><rect x="9" y="10" width="2" height="1" fill="#3a1c1c"/><rect x="11" y="10" width="1" height="1" fill="#30d040"/><rect x="12" y="10" width="2" height="1" fill="#3a1c1c"/><rect x="14" y="10" width="1" height="1" fill="#3c3c3c"/><rect x="1" y="11" width="8" height="1" fill="#3c3c3c"/><rect x="9" y="11" width="5" height="1" fill="#3a1c1c"/><rect x="14" y="11" width="1" height="1" fill="#3c3c3c"/><rect x="2" y="12" width="12" height="1" fill="#b0b0b0"/></svg>
<svg style="left:365px;top:87px;" width="7" height="4" viewBox="0 0 7 4" shape-rendering="crispEdges"><rect x="0" y="0" width="7" height="1" fill="#2a1a1a"/><rect x="1" y="1" width="5" height="1" fill="#2a1a1a"/><rect x="2" y="2" width="3" height="1" fill="#2a1a1a"/><rect x="3" y="3" width="1" height="1" fill="#2a1a1a"/></svg>
<svg style="left:541px;top:84px;" width="5" height="6" viewBox="0 0 5 6" shape-rendering="crispEdges"><rect x="0" y="0" width="1" height="1" fill="#222"/><rect x="4" y="0" width="1" height="1" fill="#222"/><rect x="1" y="1" width="1" height="1" fill="#222"/><rect x="3" y="1" width="1" height="1" fill="#222"/><rect x="2" y="2" width="1" height="1" fill="#222"/><rect x="0" y="3" width="1" height="1" fill="#222"/><rect x="4" y="3" width="1" height="1" fill="#222"/><rect x="1" y="4" width="1" height="1" fill="#222"/><rect x="3" y="4" width="1" height="1" fill="#222"/><rect x="2" y="5" width="1" height="1" fill="#222"/></svg>
<svg style="left:562px;top:79px;" width="16" height="15" viewBox="0 0 16 15" shape-rendering="crispEdges"><rect x="0" y="0" width="16" height="1" fill="#1a5cc0"/><rect x="0" y="1" width="1" height="1" fill="#1a5cc0"/><rect x="1" y="1" width="3" height="1" fill="#90d0f8"/><rect x="4" y="1" width="11" height="1" fill="#64b0f2"/><rect x="15" y="1" width="1" height="1" fill="#1a5cc0"/><rect x="0" y="2" width="1" height="1" fill="#1a5cc0"/><rect x="1" y="2" width="3" height="1" fill="#90d0f8"/><rect x="4" y="2" width="11" height="1" fill="#64b0f2"/><rect x="15" y="2" width="1" height="1" fill="#1a5cc0"/><rect x="0" y="3" width="1" height="1" fill="#1a5cc0"/><rect x="1" y="3" width="3" height="1" fill="#90d0f8"/><rect x="4" y="3" width="9" height="1" fill="#64b0f2"/><rect x="13" y="3" width="2" height="1" fill="#30c8e0"/><rect x="15" y="3" width="1" height="1" fill="#1a5cc0"/><rect x="0" y="4" width="1" height="1" fill="#1a5cc0"/><rect x="1" y="4" width="3" height="1" fill="#90d0f8"/><rect x="4" y="4" width="8" height="1" fill="#64b0f2"/><rect x="12" y="4" width="3" height="1" fill="#30c8e0"/><rect x="15" y="4" width="1" height="1" fill="#1a5cc0"/><rect x="0" y="5" width="1" height="1" fill="#1a5cc0"/><rect x="1" y="5" width="9" height="1" fill="#64b0f2"/><rect x="10" y="5" width="5" height="1" fill="#30c8e0"/><rect x="15" y="5" width="1" height="1" fill="#1a5cc0"/><rect x="0" y="6" width="1" height="1" fill="#1a5cc0"/><rect x="1" y="6" width="8" height="1" fill="#64b0f2"/><rect x="9" y="6" width="6" height="1" fill="#30c8e0"/><rect x="15" y="6" width="1" height="1" fill="#1a5cc0"/><rect x="0" y="7" width="1" height="1" fill="#1a5cc0"/><rect x="1" y="7" width="6" height="1" fill="#64b0f2"/><rect x="7" y="7" width="8" height="1" fill="#30c8e0"/><rect x="15" y="7" width="1" height="1" fill="#1a5cc0"/><rect x="0" y="8" width="1" height="1" fill="#1a5cc0"/><rect x="1" y="8" width="5" height="1" fill="#64b0f2"/><rect x="6" y="8" width="9" height="1" fill="#30c8e0"/><rect x="15" y="8" width="1" height="1" fill="#1a5cc0"/><rect x="0" y="9" width="16" height="1" fill="#1a5cc0"/><rect x="6" y="10" width="2" height="1" fill="#a0a0a0"/><rect x="4" y="11" width="8" height="1" fill="#707070"/><rect x="1" y="13" width="14" height="1" fill="#c8c8c8"/><rect x="0" y="14" width="16" height="1" fill="#707070"/></svg>
<svg style="left:584px;top:85px;" width="7" height="4" viewBox="0 0 7 4" shape-rendering="crispEdges"><rect x="0" y="0" width="7" height="1" fill="#2a1a1a"/><rect x="1" y="1" width="5" height="1" fill="#2a1a1a"/><rect x="2" y="2" width="3" height="1" fill="#2a1a1a"/><rect x="3" y="3" width="1" height="1" fill="#2a1a1a"/></svg>
<div style="left:597px;top:77px;width:1px;height:18px;background:#707070;"></div>
<svg style="left:604px;top:80px;" width="15" height="13" viewBox="0 0 15 13" shape-rendering="crispEdges"><rect x="0" y="1" width="2" height="1" fill="#22b4dc"/><rect x="3" y="1" width="3" height="1" fill="#22b4dc"/><rect x="0" y="2" width="2" height="1" fill="#22b4dc"/><rect x="3" y="2" width="3" height="1" fill="#22b4dc"/><rect x="0" y="4" width="2" height="1" fill="#22b4dc"/><rect x="3" y="4" width="3" height="1" fill="#22b4dc"/><rect x="0" y="5" width="2" height="1" fill="#22b4dc"/><rect x="3" y="5" width="3" height="1" fill="#22b4dc"/><rect x="6" y="5" width="7" height="1" fill="#d4d4d4"/><rect x="2" y="6" width="11" height="1" fill="#d4d4d4"/><rect x="1" y="7" width="14" height="1" fill="#d4d4d4"/><rect x="1" y="8" width="14" height="1" fill="#a8a8a8"/><rect x="1" y="9" width="8" height="1" fill="#3c3c3c"/><rect x="9" y="9" width="5" height="1" fill="#3a1c1c"/><rect x="14" y="9" width="1" height="1" fill="#3c3c3c"/><rect x="1" y="10" width="1" height="1" fill="#3c3c3c"/><rect x="2" y="10" width="6" height="1" fill="#5a5a5a"/><rect x="8" y="10" width="1" height="1" fill="#3c3c3c"/><rect x="9" y="10" width="2" height="1" fill="#3a1c1c"/><rect x="11" y="10" width="1" height="1" fill="#30d040"/><rect x="12" y="10" width="2" height="1" fill="#3a1c1c"/><rect x="14" y="10" width="1" height="1" fill="#3c3c3c"/><rect x="1" y="11" width="8" height="1" fill="#3c3c3c"/><rect x="9" y="11" width="5" height="1" fill="#3a1c1c"/><rect x="14" y="11" width="1" height="1" fill="#3c3c3c"/><rect x="2" y="12" width="12" height="1" fill="#b0b0b0"/></svg>
<svg style="left:639px;top:80px;" width="15" height="13" viewBox="0 0 15 13" shape-rendering="crispEdges"><rect x="0" y="5" width="2" height="1" fill="#d4d4d4"/><rect x="3" y="5" width="10" height="1" fill="#d4d4d4"/><rect x="2" y="6" width="11" height="1" fill="#d4d4d4"/><rect x="1" y="7" width="14" height="1" fill="#d4d4d4"/><rect x="1" y="8" width="14" height="1" fill="#a8a8a8"/><rect x="1" y="9" width="8" height="1" fill="#3c3c3c"/><rect x="9" y="9" width="5" height="1" fill="#3a1c1c"/><rect x="14" y="9" width="1" height="1" fill="#3c3c3c"/><rect x="1" y="10" width="1" height="1" fill="#3c3c3c"/><rect x="2" y="10" width="6" height="1" fill="#5a5a5a"/><rect x="8" y="10" width="1" height="1" fill="#3c3c3c"/><rect x="9" y="10" width="2" height="1" fill="#3a1c1c"/><rect x="11" y="10" width="1" height="1" fill="#30d040"/><rect x="12" y="10" width="2" height="1" fill="#3a1c1c"/><rect x="14" y="10" width="1" height="1" fill="#3c3c3c"/><rect x="1" y="11" width="8" height="1" fill="#3c3c3c"/><rect x="9" y="11" width="5" height="1" fill="#3a1c1c"/><rect x="14" y="11" width="1" height="1" fill="#3c3c3c"/><rect x="2" y="12" width="12" height="1" fill="#b0b0b0"/></svg>
<svg style="left:673px;top:80px;" width="15" height="13" viewBox="0 0 15 13" shape-rendering="crispEdges"><rect x="0" y="5" width="2" height="1" fill="#d4d4d4"/><rect x="3" y="5" width="10" height="1" fill="#d4d4d4"/><rect x="2" y="6" width="11" height="1" fill="#d4d4d4"/><rect x="1" y="7" width="14" height="1" fill="#d4d4d4"/><rect x="1" y="8" width="14" height="1" fill="#a8a8a8"/><rect x="1" y="9" width="8" height="1" fill="#3c3c3c"/><rect x="9" y="9" width="5" height="1" fill="#3a1c1c"/><rect x="14" y="9" width="1" height="1" fill="#3c3c3c"/><rect x="1" y="10" width="1" height="1" fill="#3c3c3c"/><rect x="2" y="10" width="6" height="1" fill="#5a5a5a"/><rect x="8" y="10" width="1" height="1" fill="#3c3c3c"/><rect x="9" y="10" width="2" height="1" fill="#3a1c1c"/><rect x="11" y="10" width="1" height="1" fill="#30d040"/><rect x="12" y="10" width="2" height="1" fill="#3a1c1c"/><rect x="14" y="10" width="1" height="1" fill="#3c3c3c"/><rect x="1" y="11" width="8" height="1" fill="#3c3c3c"/><rect x="9" y="11" width="5" height="1" fill="#3a1c1c"/><rect x="14" y="11" width="1" height="1" fill="#3c3c3c"/><rect x="2" y="12" width="12" height="1" fill="#b0b0b0"/></svg>
<div class="t" style="left:178.93px;top:82.00px;font-size:12px;color:#000;font-weight:normal;transform:scaleX(0.9240);transform-origin:0 0;">Dieser PC</div>
<div class="t" style="left:278.29px;top:82.00px;font-size:12px;color:#000;font-weight:normal;transform:scaleX(0.9830);transform-origin:0 0;">Win10pro (C:)</div>
<div class="t" style="left:624.08px;top:80.00px;font-size:12px;color:#000;font-weight:normal;transform:scaleX(0.9956);transform-origin:0 0;">C</div>
<div class="t" style="left:658.25px;top:80.00px;font-size:12px;color:#000;font-weight:normal;transform:scaleX(1.0371);transform-origin:0 0;">D</div>
<div class="t" style="left:692.34px;top:80.00px;font-size:12px;color:#000;font-weight:normal;transform:scaleX(0.9125);transform-origin:0 0;">E</div>
<div style="left:13px;top:101px;width:690px;height:1px;background:#dadada;"></div>
<svg style="left:13px;top:102px;" width="689" height="21" viewBox="0 0 689 21" shape-rendering="crispEdges"><rect width="689" height="21" fill="url(#nz)"/></svg>
<div style="left:13px;top:102px;width:102px;height:23px;background:#ffffff;"></div>
<div style="left:115px;top:104px;width:75px;height:20px;border:1px solid #d6d6d6;border-bottom:none;"></div>
<div style="left:115px;top:123px;width:588px;height:1px;background:#dcdcdc;"></div>
<div class="t" style="left:42.67px;top:107.00px;font-size:12px;color:#000;font-weight:normal;transform:scaleX(0.8751);transform-origin:0 0;">Win10pro (C:)</div>
<svg style="left:21px;top:106px;" width="15" height="13" viewBox="0 0 15 13" shape-rendering="crispEdges"><rect x="0" y="1" width="2" height="1" fill="#22b4dc"/><rect x="3" y="1" width="3" height="1" fill="#22b4dc"/><rect x="0" y="2" width="2" height="1" fill="#22b4dc"/><rect x="3" y="2" width="3" height="1" fill="#22b4dc"/><rect x="0" y="4" width="2" height="1" fill="#22b4dc"/><rect x="3" y="4" width="3" height="1" fill="#22b4dc"/><rect x="0" y="5" width="2" height="1" fill="#22b4dc"/><rect x="3" y="5" width="3" height="1" fill="#22b4dc"/><rect x="6" y="5" width="7" height="1" fill="#d4d4d4"/><rect x="2" y="6" width="11" height="1" fill="#d4d4d4"/><rect x="1" y="7" width="14" height="1" fill="#d4d4d4"/><rect x="1" y="8" width="14" height="1" fill="#a8a8a8"/><rect x="1" y="9" width="8" height="1" fill="#3c3c3c"/><rect x="9" y="9" width="5" height="1" fill="#3a1c1c"/><rect x="14" y="9" width="1" height="1" fill="#3c3c3c"/><rect x="1" y="10" width="1" height="1" fill="#3c3c3c"/><rect x="2" y="10" width="6" height="1" fill="#5a5a5a"/><rect x="8" y="10" width="1" height="1" fill="#3c3c3c"/><rect x="9" y="10" width="2" height="1" fill="#3a1c1c"/><rect x="11" y="10" width="1" height="1" fill="#30d040"/><rect x="12" y="10" width="2" height="1" fill="#3a1c1c"/><rect x="14" y="10" width="1" height="1" fill="#3c3c3c"/><rect x="1" y="11" width="8" height="1" fill="#3c3c3c"/><rect x="9" y="11" width="5" height="1" fill="#3a1c1c"/><rect x="14" y="11" width="1" height="1" fill="#3c3c3c"/><rect x="2" y="12" width="12" height="1" fill="#b0b0b0"/></svg>
<div class="t" style="left:119.36px;top:109.00px;font-size:12px;color:#000;font-weight:normal;transform:scaleX(0.8874);transform-origin:0 0;">Win10pro (C:)</div>
<div style="left:13px;top:124px;width:690px;height:1px;background:#ffffff;"></div>
<div style="left:19px;top:127px;width:683px;height:557px;background:#ababab;"></div>
<div style="left:17px;top:125px;width:686px;height:1px;background:#a0a0a0;"></div>
<div style="left:18px;top:126px;width:685px;height:1px;background:#696969;"></div>
<div style="left:17px;top:125px;width:1px;height:560px;background:#a0a0a0;"></div>
<div style="left:18px;top:126px;width:1px;height:559px;background:#696969;"></div>
<div style="left:22px;top:127px;width:680px;height:424px;background:#d1e1f0;"></div>
<div style="left:22px;top:127px;width:1px;height:424px;background:#6d6d6d;"></div>
<div style="left:22px;top:550px;width:681px;height:1px;background:#6d6d6d;"></div>
<div style="left:23px;top:127px;width:679px;height:3px;background:#b9d1ea;"></div>
<div style="left:24px;top:130px;width:678px;height:8px;background:#d3d4d6;"></div>
<div style="left:23px;top:127px;width:1px;height:423px;background:#e6eef8;"></div>
<div style="left:30px;top:149px;width:672px;height:394px;background:#ffffff;"></div>
<div class="t" style="left:51.59px;top:132.00px;font-size:12px;color:#8c9096;font-weight:normal;transform:scaleX(0.9830);transform-origin:0 0;">Win10pro (C:)</div>
<svg style="left:32px;top:129px;" width="16" height="16" viewBox="0 0 16 16" shape-rendering="crispEdges"><rect x="6" y="0" width="3" height="1" fill="#000"/><rect x="12" y="0" width="3" height="1" fill="#000"/><rect x="4" y="1" width="3" height="1" fill="#000"/><rect x="7" y="1" width="1" height="1" fill="#c84818"/><rect x="8" y="1" width="1" height="1" fill="#000"/><rect x="12" y="1" width="1" height="1" fill="#000"/><rect x="13" y="1" width="1" height="1" fill="#f0a848"/><rect x="14" y="1" width="2" height="1" fill="#000"/><rect x="4" y="2" width="1" height="1" fill="#000"/><rect x="5" y="2" width="1" height="1" fill="#503030"/><rect x="6" y="2" width="1" height="1" fill="#000"/><rect x="7" y="2" width="1" height="1" fill="#c84818"/><rect x="8" y="2" width="3" height="1" fill="#000"/><rect x="12" y="2" width="1" height="1" fill="#000"/><rect x="13" y="2" width="1" height="1" fill="#f0a848"/><rect x="14" y="2" width="1" height="1" fill="#000"/><rect x="2" y="3" width="3" height="1" fill="#000"/><rect x="5" y="3" width="1" height="1" fill="#503030"/><rect x="6" y="3" width="1" height="1" fill="#000"/><rect x="7" y="3" width="1" height="1" fill="#c84818"/><rect x="8" y="3" width="1" height="1" fill="#000"/><rect x="9" y="3" width="1" height="1" fill="#a0a8f0"/><rect x="10" y="3" width="1" height="1" fill="#000"/><rect x="12" y="3" width="1" height="1" fill="#000"/><rect x="13" y="3" width="1" height="1" fill="#f0a848"/><rect x="14" y="3" width="1" height="1" fill="#000"/><rect x="2" y="4" width="1" height="1" fill="#000"/><rect x="3" y="4" width="1" height="1" fill="#30c040"/><rect x="4" y="4" width="1" height="1" fill="#000"/><rect x="5" y="4" width="1" height="1" fill="#503030"/><rect x="6" y="4" width="1" height="1" fill="#000"/><rect x="7" y="4" width="1" height="1" fill="#c84818"/><rect x="8" y="4" width="1" height="1" fill="#000"/><rect x="9" y="4" width="1" height="1" fill="#a0a8f0"/><rect x="10" y="4" width="1" height="1" fill="#000"/><rect x="12" y="4" width="1" height="1" fill="#000"/><rect x="13" y="4" width="1" height="1" fill="#f0a848"/><rect x="14" y="4" width="1" height="1" fill="#000"/><rect x="0" y="5" width="3" height="1" fill="#000"/><rect x="3" y="5" width="1" height="1" fill="#30c040"/><rect x="4" y="5" width="1" height="1" fill="#000"/><rect x="5" y="5" width="1" height="1" fill="#503030"/><rect x="6" y="5" width="1" height="1" fill="#000"/><rect x="7" y="5" width="1" height="1" fill="#c84818"/><rect x="8" y="5" width="1" height="1" fill="#000"/><rect x="9" y="5" width="1" height="1" fill="#a0a8f0"/><rect x="10" y="5" width="3" height="1" fill="#000"/><rect x="13" y="5" width="1" height="1" fill="#f0a848"/><rect x="14" y="5" width="1" height="1" fill="#000"/><rect x="0" y="6" width="1" height="1" fill="#000"/><rect x="1" y="6" width="1" height="1" fill="#1010ff"/><rect x="2" y="6" width="1" height="1" fill="#000"/><rect x="3" y="6" width="1" height="1" fill="#30c040"/><rect x="4" y="6" width="1" height="1" fill="#000"/><rect x="5" y="6" width="1" height="1" fill="#503030"/><rect x="6" y="6" width="1" height="1" fill="#000"/><rect x="7" y="6" width="1" height="1" fill="#c84818"/><rect x="8" y="6" width="1" height="1" fill="#000"/><rect x="9" y="6" width="1" height="1" fill="#a0a8f0"/><rect x="10" y="6" width="1" height="1" fill="#000"/><rect x="11" y="6" width="1" height="1" fill="#c84818"/><rect x="12" y="6" width="1" height="1" fill="#000"/><rect x="13" y="6" width="1" height="1" fill="#f0a848"/><rect x="14" y="6" width="1" height="1" fill="#000"/><rect x="0" y="7" width="1" height="1" fill="#000"/><rect x="1" y="7" width="1" height="1" fill="#1010ff"/><rect x="2" y="7" width="1" height="1" fill="#000"/><rect x="3" y="7" width="1" height="1" fill="#30c040"/><rect x="4" y="7" width="1" height="1" fill="#000"/><rect x="5" y="7" width="1" height="1" fill="#503030"/><rect x="6" y="7" width="1" height="1" fill="#000"/><rect x="7" y="7" width="1" height="1" fill="#c84818"/><rect x="8" y="7" width="1" height="1" fill="#000"/><rect x="9" y="7" width="1" height="1" fill="#a0a8f0"/><rect x="10" y="7" width="1" height="1" fill="#000"/><rect x="11" y="7" width="1" height="1" fill="#c84818"/><rect x="12" y="7" width="1" height="1" fill="#000"/><rect x="13" y="7" width="1" height="1" fill="#f0a848"/><rect x="14" y="7" width="1" height="1" fill="#000"/><rect x="0" y="8" width="1" height="1" fill="#000"/><rect x="1" y="8" width="13" height="1" fill="#c8ccc0"/><rect x="14" y="8" width="1" height="1" fill="#000"/><rect x="0" y="9" width="1" height="1" fill="#000"/><rect x="1" y="9" width="13" height="1" fill="#c8ccc0"/><rect x="14" y="9" width="1" height="1" fill="#000"/><rect x="1" y="10" width="9" height="1" fill="#c8ccc0"/><rect x="10" y="10" width="3" height="1" fill="#30c040"/><rect x="13" y="10" width="1" height="1" fill="#c8ccc0"/><rect x="14" y="10" width="1" height="1" fill="#000"/><rect x="1" y="11" width="13" height="1" fill="#ffffff"/><rect x="14" y="11" width="1" height="1" fill="#000"/><rect x="1" y="12" width="13" height="1" fill="#ffffff"/><rect x="14" y="12" width="1" height="1" fill="#000"/><rect x="1" y="13" width="13" height="1" fill="#ffffff"/><rect x="14" y="13" width="1" height="1" fill="#000"/><rect x="0" y="14" width="1" height="1" fill="#000"/><rect x="1" y="14" width="14" height="1" fill="#707070"/><rect x="15" y="14" width="1" height="1" fill="#000"/></svg>
<div style="left:691px;top:128px;width:11px;height:18px;background:#d3d4d6;border:1px solid #8a8a8a;border-right:none;"></div>
<div style="left:692px;top:129px;width:10px;height:3px;background:#b9d1ea;"></div>
<div style="left:692px;top:134px;width:10px;height:4px;background:#b9d1ea;"></div>
<div style="left:692px;top:142px;width:10px;height:3px;background:#d1e1f0;"></div>
<div style="left:700px;top:136px;width:2px;height:5px;background:#222;"></div>
<div style="left:30px;top:149px;width:672px;height:394px;overflow:hidden;">
<div style="left:0px;top:2px;width:672px;height:4px;background:#ffffff;border:1px solid #a0a0a0;border-right:none;"></div>
<div class="t" style="left:47.97px;top:9.00px;font-size:12px;color:#000;font-weight:normal;transform:scaleX(1.0192);transform-origin:0 0;">Folder</div>
<div class="t" style="left:92.92px;top:9.00px;font-size:12px;color:#000;font-weight:normal;transform:scaleX(1.0860);transform-origin:0 0;">C:\</div>
<div class="t" style="left:56.92px;top:26.00px;font-size:12px;color:#000;font-weight:normal;transform:scaleX(0.9504);transform-origin:0 0;">Search Time: 18,801 sec //  Found:286326 of (61774) Folders &amp; (286326) Files</div>
<div class="t" style="left:46.60px;top:53.00px;font-size:12px;color:#000;font-weight:normal;transform:scaleX(0.9767);transform-origin:0 0;">Include Files</div>
<div class="t" style="left:45.83px;top:76.00px;font-size:12px;color:#000;font-weight:normal;transform:scaleX(0.9323);transform-origin:0 0;">Exclude Files</div>
<div style="left:117px;top:49px;width:300px;height:20px;background:#fff;border:1px solid #7a7a7a;"></div>
<div style="left:117px;top:72px;width:300px;height:20px;background:#fff;border:1px solid #7a7a7a;"></div>
<div class="t" style="left:122.11px;top:53.00px;font-size:12px;color:#000;font-weight:normal;transform:scaleX(1.2377);transform-origin:0 0;">*</div>
<div class="t" style="left:443.72px;top:52.00px;font-size:12px;color:#000;font-weight:normal;transform:scaleX(0.9475);transform-origin:0 0;">Refresh [F5]</div>
<div class="t" style="left:422.28px;top:74.00px;font-size:12px;color:#000;font-weight:normal;transform:scaleX(0.9983);transform-origin:0 0;">to exclude files // eg: thumbs.db,*. ba</div>
<div style="left:0px;top:98px;width:672px;height:4px;background:#ffffff;border:1px solid #a0a0a0;border-right:none;"></div>
<div class="t" style="left:22.60px;top:109.00px;font-size:12px;color:#000;font-weight:normal;transform:scaleX(0.9727);transform-origin:0 0;">Grouping by: File Extension</div>
<svg style="left:7px;top:108px;" width="7" height="11" viewBox="0 0 7 11" shape-rendering="crispEdges"><rect x="0" y="0" width="5" height="1" fill="#000"/><rect x="0" y="1" width="5" height="1" fill="#000"/><rect x="0" y="2" width="5" height="1" fill="#000"/><rect x="1" y="4" width="6" height="1" fill="#b83c12"/><rect x="1" y="5" width="6" height="1" fill="#b83c12"/><rect x="1" y="6" width="6" height="1" fill="#b83c12"/><rect x="2" y="8" width="5" height="1" fill="#b83c12"/><rect x="2" y="9" width="5" height="1" fill="#b83c12"/><rect x="2" y="10" width="5" height="1" fill="#b83c12"/></svg>
<svg style="left:178px;top:106px;shape-rendering:auto" width="14" height="16" viewBox="0 0 14 16" shape-rendering="crispEdges"><path d="M0.5 15.5 V0.5 H9.5 L13.5 4.5 V15.5" fill="#fff" stroke="#a8a8a8"/><path d="M13.5 4.5 V15.5 H0.5" fill="none" stroke="#000"/><path d="M9.5 0.5 V4.5 H13.5" fill="none" stroke="#000"/><path d="M4 7.5 Q4 4.5 7 4.5 L8.5 4.5" fill="none" stroke="#b83c12" stroke-width="1.3"/><path d="M8 2.8 L10 4.5 L8 6.2z" fill="#b83c12"/><path d="M10 9 Q10 12 7 12 L5.5 12" fill="none" stroke="#b83c12" stroke-width="1.3"/><path d="M6 10.3 L4 12 L6 13.7z" fill="#b83c12"/></svg>
<div style="left:199px;top:105px;width:1px;height:19px;background:#8a8a8a;"></div>
<svg style="left:210px;top:108px;shape-rendering:auto" width="12" height="12" viewBox="0 0 12 12" shape-rendering="crispEdges"><path d="M1.5 1.5 L10.5 10.5 M10.5 1.5 L1.5 10.5" stroke="#000" stroke-width="3.2" stroke-linecap="square"/><path d="M1.5 1.5 L10.5 10.5 M10.5 1.5 L1.5 10.5" stroke="#c8440e" stroke-width="1.6" stroke-linecap="square"/></svg>
<div style="left:231px;top:105px;width:1px;height:19px;background:#8a8a8a;"></div>
<div style="left:261px;top:105px;width:1px;height:19px;background:#8a8a8a;"></div>
<svg style="left:271px;top:107px;" width="9" height="15" viewBox="0 0 9 15" shape-rendering="crispEdges"><rect x="0" y="0" width="3" height="1" fill="#a8a8a8"/><rect x="0" y="1" width="1" height="1" fill="#a8a8a8"/><rect x="1" y="1" width="1" height="1" fill="#ffffff"/><rect x="2" y="1" width="1" height="1" fill="#a8a8a8"/><rect x="0" y="2" width="3" height="1" fill="#a8a8a8"/><rect x="1" y="3" width="1" height="1" fill="#a8a8a8"/><rect x="1" y="4" width="1" height="1" fill="#a8a8a8"/><rect x="3" y="4" width="3" height="1" fill="#a8a8a8"/><rect x="1" y="5" width="3" height="1" fill="#a8a8a8"/><rect x="4" y="5" width="1" height="1" fill="#ffffff"/><rect x="5" y="5" width="1" height="1" fill="#a8a8a8"/><rect x="1" y="6" width="1" height="1" fill="#a8a8a8"/><rect x="3" y="6" width="3" height="1" fill="#a8a8a8"/><rect x="1" y="7" width="1" height="1" fill="#a8a8a8"/><rect x="1" y="8" width="1" height="1" fill="#a8a8a8"/><rect x="3" y="8" width="3" height="1" fill="#a8a8a8"/><rect x="1" y="9" width="3" height="1" fill="#a8a8a8"/><rect x="4" y="9" width="1" height="1" fill="#ffffff"/><rect x="5" y="9" width="1" height="1" fill="#a8a8a8"/><rect x="1" y="10" width="1" height="1" fill="#a8a8a8"/><rect x="3" y="10" width="3" height="1" fill="#a8a8a8"/><rect x="1" y="11" width="1" height="1" fill="#a8a8a8"/><rect x="1" y="12" width="1" height="1" fill="#a8a8a8"/><rect x="6" y="12" width="3" height="1" fill="#a8a8a8"/><rect x="1" y="13" width="6" height="1" fill="#a8a8a8"/><rect x="7" y="13" width="1" height="1" fill="#ffffff"/><rect x="8" y="13" width="1" height="1" fill="#a8a8a8"/><rect x="6" y="14" width="3" height="1" fill="#a8a8a8"/></svg>
<svg style="left:278px;top:107px;shape-rendering:auto" width="9" height="12" viewBox="0 0 9 12" shape-rendering="crispEdges"><text x="0.3" y="10" font-family="Liberation Sans" font-weight="bold" font-size="12" fill="#a4a4a4">0</text></svg>
<svg style="left:294px;top:107px;" width="9" height="15" viewBox="0 0 9 15" shape-rendering="crispEdges"><rect x="0" y="0" width="3" height="1" fill="#a8a8a8"/><rect x="0" y="1" width="1" height="1" fill="#a8a8a8"/><rect x="1" y="1" width="1" height="1" fill="#ffffff"/><rect x="2" y="1" width="1" height="1" fill="#a8a8a8"/><rect x="0" y="2" width="3" height="1" fill="#a8a8a8"/><rect x="1" y="3" width="1" height="1" fill="#a8a8a8"/><rect x="1" y="4" width="1" height="1" fill="#a8a8a8"/><rect x="3" y="4" width="3" height="1" fill="#a8a8a8"/><rect x="1" y="5" width="3" height="1" fill="#a8a8a8"/><rect x="4" y="5" width="1" height="1" fill="#ffffff"/><rect x="5" y="5" width="1" height="1" fill="#a8a8a8"/><rect x="1" y="6" width="1" height="1" fill="#a8a8a8"/><rect x="3" y="6" width="3" height="1" fill="#a8a8a8"/><rect x="1" y="7" width="1" height="1" fill="#a8a8a8"/><rect x="1" y="8" width="1" height="1" fill="#a8a8a8"/><rect x="3" y="8" width="3" height="1" fill="#a8a8a8"/><rect x="1" y="9" width="3" height="1" fill="#a8a8a8"/><rect x="4" y="9" width="1" height="1" fill="#ffffff"/><rect x="5" y="9" width="1" height="1" fill="#a8a8a8"/><rect x="1" y="10" width="1" height="1" fill="#a8a8a8"/><rect x="3" y="10" width="3" height="1" fill="#a8a8a8"/><rect x="1" y="11" width="1" height="1" fill="#a8a8a8"/><rect x="1" y="12" width="1" height="1" fill="#a8a8a8"/><rect x="6" y="12" width="3" height="1" fill="#a8a8a8"/><rect x="1" y="13" width="6" height="1" fill="#a8a8a8"/><rect x="7" y="13" width="1" height="1" fill="#ffffff"/><rect x="8" y="13" width="1" height="1" fill="#a8a8a8"/><rect x="6" y="14" width="3" height="1" fill="#a8a8a8"/></svg>
<svg style="left:301px;top:107px;shape-rendering:auto" width="9" height="12" viewBox="0 0 9 12" shape-rendering="crispEdges"><text x="0.3" y="10" font-family="Liberation Sans" font-weight="bold" font-size="12" fill="#a4a4a4">1</text></svg>
<svg style="left:317px;top:107px;" width="9" height="15" viewBox="0 0 9 15" shape-rendering="crispEdges"><rect x="0" y="0" width="3" height="1" fill="#a8a8a8"/><rect x="0" y="1" width="1" height="1" fill="#a8a8a8"/><rect x="1" y="1" width="1" height="1" fill="#ffffff"/><rect x="2" y="1" width="1" height="1" fill="#a8a8a8"/><rect x="0" y="2" width="3" height="1" fill="#a8a8a8"/><rect x="1" y="3" width="1" height="1" fill="#a8a8a8"/><rect x="1" y="4" width="1" height="1" fill="#a8a8a8"/><rect x="3" y="4" width="3" height="1" fill="#a8a8a8"/><rect x="1" y="5" width="3" height="1" fill="#a8a8a8"/><rect x="4" y="5" width="1" height="1" fill="#ffffff"/><rect x="5" y="5" width="1" height="1" fill="#a8a8a8"/><rect x="1" y="6" width="1" height="1" fill="#a8a8a8"/><rect x="3" y="6" width="3" height="1" fill="#a8a8a8"/><rect x="1" y="7" width="1" height="1" fill="#a8a8a8"/><rect x="1" y="8" width="1" height="1" fill="#a8a8a8"/><rect x="3" y="8" width="3" height="1" fill="#a8a8a8"/><rect x="1" y="9" width="3" height="1" fill="#a8a8a8"/><rect x="4" y="9" width="1" height="1" fill="#ffffff"/><rect x="5" y="9" width="1" height="1" fill="#a8a8a8"/><rect x="1" y="10" width="1" height="1" fill="#a8a8a8"/><rect x="3" y="10" width="3" height="1" fill="#a8a8a8"/><rect x="1" y="11" width="1" height="1" fill="#a8a8a8"/><rect x="1" y="12" width="1" height="1" fill="#a8a8a8"/><rect x="6" y="12" width="3" height="1" fill="#a8a8a8"/><rect x="1" y="13" width="6" height="1" fill="#a8a8a8"/><rect x="7" y="13" width="1" height="1" fill="#ffffff"/><rect x="8" y="13" width="1" height="1" fill="#a8a8a8"/><rect x="6" y="14" width="3" height="1" fill="#a8a8a8"/></svg>
<svg style="left:324px;top:107px;shape-rendering:auto" width="9" height="12" viewBox="0 0 9 12" shape-rendering="crispEdges"><text x="0.3" y="10" font-family="Liberation Sans" font-weight="bold" font-size="12" fill="#a4a4a4">2</text></svg>
<svg style="left:340px;top:107px;" width="9" height="15" viewBox="0 0 9 15" shape-rendering="crispEdges"><rect x="0" y="0" width="3" height="1" fill="#a8a8a8"/><rect x="0" y="1" width="1" height="1" fill="#a8a8a8"/><rect x="1" y="1" width="1" height="1" fill="#ffffff"/><rect x="2" y="1" width="1" height="1" fill="#a8a8a8"/><rect x="0" y="2" width="3" height="1" fill="#a8a8a8"/><rect x="1" y="3" width="1" height="1" fill="#a8a8a8"/><rect x="1" y="4" width="1" height="1" fill="#a8a8a8"/><rect x="3" y="4" width="3" height="1" fill="#a8a8a8"/><rect x="1" y="5" width="3" height="1" fill="#a8a8a8"/><rect x="4" y="5" width="1" height="1" fill="#ffffff"/><rect x="5" y="5" width="1" height="1" fill="#a8a8a8"/><rect x="1" y="6" width="1" height="1" fill="#a8a8a8"/><rect x="3" y="6" width="3" height="1" fill="#a8a8a8"/><rect x="1" y="7" width="1" height="1" fill="#a8a8a8"/><rect x="1" y="8" width="1" height="1" fill="#a8a8a8"/><rect x="3" y="8" width="3" height="1" fill="#a8a8a8"/><rect x="1" y="9" width="3" height="1" fill="#a8a8a8"/><rect x="4" y="9" width="1" height="1" fill="#ffffff"/><rect x="5" y="9" width="1" height="1" fill="#a8a8a8"/><rect x="1" y="10" width="1" height="1" fill="#a8a8a8"/><rect x="3" y="10" width="3" height="1" fill="#a8a8a8"/><rect x="1" y="11" width="1" height="1" fill="#a8a8a8"/><rect x="1" y="12" width="1" height="1" fill="#a8a8a8"/><rect x="6" y="12" width="3" height="1" fill="#a8a8a8"/><rect x="1" y="13" width="6" height="1" fill="#a8a8a8"/><rect x="7" y="13" width="1" height="1" fill="#ffffff"/><rect x="8" y="13" width="1" height="1" fill="#a8a8a8"/><rect x="6" y="14" width="3" height="1" fill="#a8a8a8"/></svg>
<svg style="left:347px;top:107px;shape-rendering:auto" width="9" height="12" viewBox="0 0 9 12" shape-rendering="crispEdges"><text x="0.3" y="10" font-family="Liberation Sans" font-weight="bold" font-size="12" fill="#a4a4a4">3</text></svg>
<svg style="left:363px;top:107px;" width="9" height="15" viewBox="0 0 9 15" shape-rendering="crispEdges"><rect x="0" y="0" width="3" height="1" fill="#a8a8a8"/><rect x="0" y="1" width="1" height="1" fill="#a8a8a8"/><rect x="1" y="1" width="1" height="1" fill="#ffffff"/><rect x="2" y="1" width="1" height="1" fill="#a8a8a8"/><rect x="0" y="2" width="3" height="1" fill="#a8a8a8"/><rect x="1" y="3" width="1" height="1" fill="#a8a8a8"/><rect x="1" y="4" width="1" height="1" fill="#a8a8a8"/><rect x="3" y="4" width="3" height="1" fill="#a8a8a8"/><rect x="1" y="5" width="3" height="1" fill="#a8a8a8"/><rect x="4" y="5" width="1" height="1" fill="#ffffff"/><rect x="5" y="5" width="1" height="1" fill="#a8a8a8"/><rect x="1" y="6" width="1" height="1" fill="#a8a8a8"/><rect x="3" y="6" width="3" height="1" fill="#a8a8a8"/><rect x="1" y="7" width="1" height="1" fill="#a8a8a8"/><rect x="1" y="8" width="1" height="1" fill="#a8a8a8"/><rect x="3" y="8" width="3" height="1" fill="#a8a8a8"/><rect x="1" y="9" width="3" height="1" fill="#a8a8a8"/><rect x="4" y="9" width="1" height="1" fill="#ffffff"/><rect x="5" y="9" width="1" height="1" fill="#a8a8a8"/><rect x="1" y="10" width="1" height="1" fill="#a8a8a8"/><rect x="3" y="10" width="3" height="1" fill="#a8a8a8"/><rect x="1" y="11" width="1" height="1" fill="#a8a8a8"/><rect x="1" y="12" width="1" height="1" fill="#a8a8a8"/><rect x="6" y="12" width="3" height="1" fill="#a8a8a8"/><rect x="1" y="13" width="6" height="1" fill="#a8a8a8"/><rect x="7" y="13" width="1" height="1" fill="#ffffff"/><rect x="8" y="13" width="1" height="1" fill="#a8a8a8"/><rect x="6" y="14" width="3" height="1" fill="#a8a8a8"/></svg>
<svg style="left:370px;top:107px;shape-rendering:auto" width="9" height="12" viewBox="0 0 9 12" shape-rendering="crispEdges"><text x="0.3" y="10" font-family="Liberation Sans" font-weight="bold" font-size="12" fill="#a4a4a4">4</text></svg>
<svg style="left:386px;top:107px;" width="9" height="15" viewBox="0 0 9 15" shape-rendering="crispEdges"><rect x="0" y="0" width="3" height="1" fill="#a8a8a8"/><rect x="0" y="1" width="1" height="1" fill="#a8a8a8"/><rect x="1" y="1" width="1" height="1" fill="#ffffff"/><rect x="2" y="1" width="1" height="1" fill="#a8a8a8"/><rect x="0" y="2" width="3" height="1" fill="#a8a8a8"/><rect x="1" y="3" width="1" height="1" fill="#a8a8a8"/><rect x="1" y="4" width="1" height="1" fill="#a8a8a8"/><rect x="3" y="4" width="3" height="1" fill="#a8a8a8"/><rect x="1" y="5" width="3" height="1" fill="#a8a8a8"/><rect x="4" y="5" width="1" height="1" fill="#ffffff"/><rect x="5" y="5" width="1" height="1" fill="#a8a8a8"/><rect x="1" y="6" width="1" height="1" fill="#a8a8a8"/><rect x="3" y="6" width="3" height="1" fill="#a8a8a8"/><rect x="1" y="7" width="1" height="1" fill="#a8a8a8"/><rect x="1" y="8" width="1" height="1" fill="#a8a8a8"/><rect x="3" y="8" width="3" height="1" fill="#a8a8a8"/><rect x="1" y="9" width="3" height="1" fill="#a8a8a8"/><rect x="4" y="9" width="1" height="1" fill="#ffffff"/><rect x="5" y="9" width="1" height="1" fill="#a8a8a8"/><rect x="1" y="10" width="1" height="1" fill="#a8a8a8"/><rect x="3" y="10" width="3" height="1" fill="#a8a8a8"/><rect x="1" y="11" width="1" height="1" fill="#a8a8a8"/><rect x="1" y="12" width="1" height="1" fill="#a8a8a8"/><rect x="6" y="12" width="3" height="1" fill="#a8a8a8"/><rect x="1" y="13" width="6" height="1" fill="#a8a8a8"/><rect x="7" y="13" width="1" height="1" fill="#ffffff"/><rect x="8" y="13" width="1" height="1" fill="#a8a8a8"/><rect x="6" y="14" width="3" height="1" fill="#a8a8a8"/></svg>
<svg style="left:393px;top:107px;shape-rendering:auto" width="9" height="12" viewBox="0 0 9 12" shape-rendering="crispEdges"><text x="0.3" y="10" font-family="Liberation Sans" font-weight="bold" font-size="12" fill="#a4a4a4">5</text></svg>
<svg style="left:409px;top:107px;" width="9" height="15" viewBox="0 0 9 15" shape-rendering="crispEdges"><rect x="0" y="0" width="3" height="1" fill="#a8a8a8"/><rect x="0" y="1" width="1" height="1" fill="#a8a8a8"/><rect x="1" y="1" width="1" height="1" fill="#ffffff"/><rect x="2" y="1" width="1" height="1" fill="#a8a8a8"/><rect x="0" y="2" width="3" height="1" fill="#a8a8a8"/><rect x="1" y="3" width="1" height="1" fill="#a8a8a8"/><rect x="1" y="4" width="1" height="1" fill="#a8a8a8"/><rect x="3" y="4" width="3" height="1" fill="#a8a8a8"/><rect x="1" y="5" width="3" height="1" fill="#a8a8a8"/><rect x="4" y="5" width="1" height="1" fill="#ffffff"/><rect x="5" y="5" width="1" height="1" fill="#a8a8a8"/><rect x="1" y="6" width="1" height="1" fill="#a8a8a8"/><rect x="3" y="6" width="3" height="1" fill="#a8a8a8"/><rect x="1" y="7" width="1" height="1" fill="#a8a8a8"/><rect x="1" y="8" width="1" height="1" fill="#a8a8a8"/><rect x="3" y="8" width="3" height="1" fill="#a8a8a8"/><rect x="1" y="9" width="3" height="1" fill="#a8a8a8"/><rect x="4" y="9" width="1" height="1" fill="#ffffff"/><rect x="5" y="9" width="1" height="1" fill="#a8a8a8"/><rect x="1" y="10" width="1" height="1" fill="#a8a8a8"/><rect x="3" y="10" width="3" height="1" fill="#a8a8a8"/><rect x="1" y="11" width="1" height="1" fill="#a8a8a8"/><rect x="1" y="12" width="1" height="1" fill="#a8a8a8"/><rect x="6" y="12" width="3" height="1" fill="#a8a8a8"/><rect x="1" y="13" width="6" height="1" fill="#a8a8a8"/><rect x="7" y="13" width="1" height="1" fill="#ffffff"/><rect x="8" y="13" width="1" height="1" fill="#a8a8a8"/><rect x="6" y="14" width="3" height="1" fill="#a8a8a8"/></svg>
<svg style="left:416px;top:107px;shape-rendering:auto" width="9" height="12" viewBox="0 0 9 12" shape-rendering="crispEdges"><text x="0.3" y="10" font-family="Liberation Sans" font-weight="bold" font-size="12" fill="#a4a4a4">6</text></svg>
<svg style="left:432px;top:107px;" width="9" height="15" viewBox="0 0 9 15" shape-rendering="crispEdges"><rect x="0" y="0" width="3" height="1" fill="#a8a8a8"/><rect x="0" y="1" width="1" height="1" fill="#a8a8a8"/><rect x="1" y="1" width="1" height="1" fill="#ffffff"/><rect x="2" y="1" width="1" height="1" fill="#a8a8a8"/><rect x="0" y="2" width="3" height="1" fill="#a8a8a8"/><rect x="1" y="3" width="1" height="1" fill="#a8a8a8"/><rect x="1" y="4" width="1" height="1" fill="#a8a8a8"/><rect x="3" y="4" width="3" height="1" fill="#a8a8a8"/><rect x="1" y="5" width="3" height="1" fill="#a8a8a8"/><rect x="4" y="5" width="1" height="1" fill="#ffffff"/><rect x="5" y="5" width="1" height="1" fill="#a8a8a8"/><rect x="1" y="6" width="1" height="1" fill="#a8a8a8"/><rect x="3" y="6" width="3" height="1" fill="#a8a8a8"/><rect x="1" y="7" width="1" height="1" fill="#a8a8a8"/><rect x="1" y="8" width="1" height="1" fill="#a8a8a8"/><rect x="3" y="8" width="3" height="1" fill="#a8a8a8"/><rect x="1" y="9" width="3" height="1" fill="#a8a8a8"/><rect x="4" y="9" width="1" height="1" fill="#ffffff"/><rect x="5" y="9" width="1" height="1" fill="#a8a8a8"/><rect x="1" y="10" width="1" height="1" fill="#a8a8a8"/><rect x="3" y="10" width="3" height="1" fill="#a8a8a8"/><rect x="1" y="11" width="1" height="1" fill="#a8a8a8"/><rect x="1" y="12" width="1" height="1" fill="#a8a8a8"/><rect x="6" y="12" width="3" height="1" fill="#a8a8a8"/><rect x="1" y="13" width="6" height="1" fill="#a8a8a8"/><rect x="7" y="13" width="1" height="1" fill="#ffffff"/><rect x="8" y="13" width="1" height="1" fill="#a8a8a8"/><rect x="6" y="14" width="3" height="1" fill="#a8a8a8"/></svg>
<svg style="left:439px;top:107px;shape-rendering:auto" width="9" height="12" viewBox="0 0 9 12" shape-rendering="crispEdges"><text x="0.3" y="10" font-family="Liberation Sans" font-weight="bold" font-size="12" fill="#a4a4a4">7</text></svg>
<svg style="left:454px;top:107px;" width="9" height="15" viewBox="0 0 9 15" shape-rendering="crispEdges"><rect x="0" y="0" width="3" height="1" fill="#a8a8a8"/><rect x="0" y="1" width="1" height="1" fill="#a8a8a8"/><rect x="1" y="1" width="1" height="1" fill="#ffffff"/><rect x="2" y="1" width="1" height="1" fill="#a8a8a8"/><rect x="0" y="2" width="3" height="1" fill="#a8a8a8"/><rect x="1" y="3" width="1" height="1" fill="#a8a8a8"/><rect x="1" y="4" width="1" height="1" fill="#a8a8a8"/><rect x="3" y="4" width="3" height="1" fill="#a8a8a8"/><rect x="1" y="5" width="3" height="1" fill="#a8a8a8"/><rect x="4" y="5" width="1" height="1" fill="#ffffff"/><rect x="5" y="5" width="1" height="1" fill="#a8a8a8"/><rect x="1" y="6" width="1" height="1" fill="#a8a8a8"/><rect x="3" y="6" width="3" height="1" fill="#a8a8a8"/><rect x="1" y="7" width="1" height="1" fill="#a8a8a8"/><rect x="1" y="8" width="1" height="1" fill="#a8a8a8"/><rect x="3" y="8" width="3" height="1" fill="#a8a8a8"/><rect x="1" y="9" width="3" height="1" fill="#a8a8a8"/><rect x="4" y="9" width="1" height="1" fill="#ffffff"/><rect x="5" y="9" width="1" height="1" fill="#a8a8a8"/><rect x="1" y="10" width="1" height="1" fill="#a8a8a8"/><rect x="3" y="10" width="3" height="1" fill="#a8a8a8"/><rect x="1" y="11" width="1" height="1" fill="#a8a8a8"/><rect x="1" y="12" width="1" height="1" fill="#a8a8a8"/><rect x="6" y="12" width="3" height="1" fill="#a8a8a8"/><rect x="1" y="13" width="6" height="1" fill="#a8a8a8"/><rect x="7" y="13" width="1" height="1" fill="#ffffff"/><rect x="8" y="13" width="1" height="1" fill="#a8a8a8"/><rect x="6" y="14" width="3" height="1" fill="#a8a8a8"/></svg>
<svg style="left:461px;top:107px;shape-rendering:auto" width="9" height="12" viewBox="0 0 9 12" shape-rendering="crispEdges"><text x="0.3" y="10" font-family="Liberation Sans" font-weight="bold" font-size="12" fill="#a4a4a4">8</text></svg>
<svg style="left:477px;top:107px;" width="9" height="15" viewBox="0 0 9 15" shape-rendering="crispEdges"><rect x="0" y="0" width="3" height="1" fill="#a8a8a8"/><rect x="0" y="1" width="1" height="1" fill="#a8a8a8"/><rect x="1" y="1" width="1" height="1" fill="#ffffff"/><rect x="2" y="1" width="1" height="1" fill="#a8a8a8"/><rect x="0" y="2" width="3" height="1" fill="#a8a8a8"/><rect x="1" y="3" width="1" height="1" fill="#a8a8a8"/><rect x="1" y="4" width="1" height="1" fill="#a8a8a8"/><rect x="3" y="4" width="3" height="1" fill="#a8a8a8"/><rect x="1" y="5" width="3" height="1" fill="#a8a8a8"/><rect x="4" y="5" width="1" height="1" fill="#ffffff"/><rect x="5" y="5" width="1" height="1" fill="#a8a8a8"/><rect x="1" y="6" width="1" height="1" fill="#a8a8a8"/><rect x="3" y="6" width="3" height="1" fill="#a8a8a8"/><rect x="1" y="7" width="1" height="1" fill="#a8a8a8"/><rect x="1" y="8" width="1" height="1" fill="#a8a8a8"/><rect x="3" y="8" width="3" height="1" fill="#a8a8a8"/><rect x="1" y="9" width="3" height="1" fill="#a8a8a8"/><rect x="4" y="9" width="1" height="1" fill="#ffffff"/><rect x="5" y="9" width="1" height="1" fill="#a8a8a8"/><rect x="1" y="10" width="1" height="1" fill="#a8a8a8"/><rect x="3" y="10" width="3" height="1" fill="#a8a8a8"/><rect x="1" y="11" width="1" height="1" fill="#a8a8a8"/><rect x="1" y="12" width="1" height="1" fill="#a8a8a8"/><rect x="6" y="12" width="3" height="1" fill="#a8a8a8"/><rect x="1" y="13" width="6" height="1" fill="#a8a8a8"/><rect x="7" y="13" width="1" height="1" fill="#ffffff"/><rect x="8" y="13" width="1" height="1" fill="#a8a8a8"/><rect x="6" y="14" width="3" height="1" fill="#a8a8a8"/></svg>
<svg style="left:484px;top:107px;shape-rendering:auto" width="9" height="12" viewBox="0 0 9 12" shape-rendering="crispEdges"><text x="0.3" y="10" font-family="Liberation Sans" font-weight="bold" font-size="12" fill="#a4a4a4">*</text></svg>
<div style="left:499px;top:105px;width:1px;height:19px;background:#8a8a8a;"></div>
<svg style="left:530px;top:106px;shape-rendering:auto" width="17" height="16" viewBox="0 0 17 16" shape-rendering="crispEdges"><rect x="1" y="12" width="13" height="4" fill="#000"/><rect x="3.0" y="13.5" width="1.5" height="1.2" fill="#e05010"/><rect x="5.6" y="13.5" width="1.5" height="1.2" fill="#e05010"/><rect x="8.2" y="13.5" width="1.5" height="1.2" fill="#e05010"/><rect x="10.8" y="13.5" width="1.5" height="1.2" fill="#e05010"/><path d="M7.5 3.5 L15.5 11.5" stroke="#000" stroke-width="2.2"/><path d="M7 3 L9.5 5.5" stroke="#e05010" stroke-width="1.6"/><rect x="10" y="0" width="1" height="1" fill="#a05040"/><rect x="13" y="1" width="1" height="1" fill="#a05040"/><rect x="12" y="4" width="1" height="1" fill="#a05040"/><rect x="15" y="3" width="1" height="1" fill="#a05040"/><rect x="15" y="6" width="1" height="1" fill="#a05040"/></svg>
<svg style="left:554px;top:111px;shape-rendering:auto" width="15" height="12" viewBox="0 0 15 12" shape-rendering="crispEdges"><path d="M0.5 4 L5 0.5 V2.5 H10 V0.5 L14.5 4 L10 7.5 V5.5 H5 V7.5 Z" fill="#d04a10" stroke="#000" stroke-width="1"/></svg>
<svg style="left:577px;top:110px;shape-rendering:auto" width="15" height="12" viewBox="0 0 15 12" shape-rendering="crispEdges"><path d="M0.5 4 L5 0.5 V2.5 H10 V0.5 L14.5 4 L10 7.5 V5.5 H5 V7.5 Z" fill="#d04a10" stroke="#000" stroke-width="1"/><rect x="1" y="7.5" width="13" height="4" fill="#000"/><rect x="3.0" y="9.0" width="1.5" height="1.2" fill="#e05010"/><rect x="5.6" y="9.0" width="1.5" height="1.2" fill="#e05010"/><rect x="8.2" y="9.0" width="1.5" height="1.2" fill="#e05010"/><rect x="10.8" y="9.0" width="1.5" height="1.2" fill="#e05010"/></svg>
<svg style="left:601px;top:106px;shape-rendering:auto" width="17" height="16" viewBox="0 0 17 16" shape-rendering="crispEdges"><path d="M2.5 1 L11.5 10 M11.5 1 L2.5 10" stroke="#000" stroke-width="3"/><path d="M2.5 1 L11.5 10 M11.5 1 L2.5 10" stroke="#d04a10" stroke-width="1.6"/><text x="-0.5" y="15.5" font-family="Liberation Sans" font-weight="bold" font-size="8.5" fill="#000">port</text></svg>
<svg style="left:424px;top:50px;shape-rendering:auto" width="16" height="15" viewBox="0 0 16 15" shape-rendering="crispEdges"><circle cx="5" cy="5" r="4" fill="#fff" stroke="#222" stroke-width="1.1"/><path d="M7.8 7.8 L13 13" stroke="#222" stroke-width="2.4" stroke-linecap="round"/><path d="M8.3 8.3 L12.6 12.6" stroke="#ddd" stroke-width="0.8"/><text x="10.5" y="7" font-family="Liberation Sans" font-weight="bold" font-size="9" fill="#d01818">*</text></svg>
<div style="left:0px;top:127px;width:672px;height:4px;background:#ffffff;border:1px solid #a0a0a0;border-right:none;"></div>
<div style="left:0px;top:133px;width:672px;height:261px;background:#fff;border:1px solid #828790;border-right:none;"></div>
<div class="t" style="left:7.96px;top:141.00px;font-size:12px;color:#000;font-weight:normal;transform:scaleX(1.0237);transform-origin:0 0;">Name</div>
<div class="t" style="left:275.96px;top:141.00px;font-size:12px;color:#000;font-weight:normal;transform:scaleX(0.8857);transform-origin:0 0;">Size</div>
<div class="t" style="left:386.11px;top:141.00px;font-size:12px;color:#000;font-weight:normal;transform:scaleX(0.9532);transform-origin:0 0;">%</div>
<div class="t" style="left:454.30px;top:141.00px;font-size:12px;color:#000;font-weight:normal;transform:scaleX(0.9689);transform-origin:0 0;">Files (#)</div>
<div class="t" style="left:539.80px;top:141.00px;font-size:12px;color:#000;font-weight:normal;transform:scaleX(0.9668);transform-origin:0 0;">Folders (#)</div>
<svg style="left:249px;top:136px;" width="7" height="4" viewBox="0 0 7 4" shape-rendering="crispEdges"><rect x="0" y="0" width="1" height="1" fill="#9aa0a8"/><rect x="6" y="0" width="1" height="1" fill="#9aa0a8"/><rect x="1" y="1" width="1" height="1" fill="#9aa0a8"/><rect x="5" y="1" width="1" height="1" fill="#9aa0a8"/><rect x="2" y="2" width="1" height="1" fill="#9aa0a8"/><rect x="4" y="2" width="1" height="1" fill="#9aa0a8"/><rect x="3" y="3" width="1" height="1" fill="#9aa0a8"/></svg>
<div style="left:201px;top:135px;width:1px;height:24px;background:#e6eef4;"></div>
<div style="left:201px;top:159px;width:1px;height:217px;background:#dcdcdc;"></div>
<div style="left:301px;top:135px;width:1px;height:24px;background:#e6eef4;"></div>
<div style="left:301px;top:159px;width:1px;height:217px;background:#dcdcdc;"></div>
<div style="left:401px;top:135px;width:1px;height:24px;background:#e6eef4;"></div>
<div style="left:401px;top:159px;width:1px;height:217px;background:#dcdcdc;"></div>
<div style="left:501px;top:135px;width:1px;height:24px;background:#e6eef4;"></div>
<div style="left:501px;top:159px;width:1px;height:217px;background:#dcdcdc;"></div>
<div style="left:601px;top:135px;width:1px;height:24px;background:#e6eef4;"></div>
<div style="left:601px;top:159px;width:1px;height:217px;background:#dcdcdc;"></div>
<div class="t" style="left:40.90px;top:161.00px;font-size:12px;color:#000;font-weight:normal;transform:scaleX(1.1076);transform-origin:0 0;">C:\</div>
<svg style="left:7px;top:162px;" width="11" height="13" viewBox="0 0 11 13" shape-rendering="crispEdges"><rect x="2" y="0" width="7" height="1" fill="#c4dcf4"/><rect x="1" y="1" width="1" height="1" fill="#c4dcf4"/><rect x="9" y="1" width="1" height="1" fill="#c4dcf4"/><rect x="0" y="2" width="1" height="1" fill="#c4dcf4"/><rect x="2" y="2" width="7" height="1" fill="#0000f0"/><rect x="10" y="2" width="1" height="1" fill="#c4dcf4"/><rect x="0" y="3" width="1" height="1" fill="#c4dcf4"/><rect x="1" y="3" width="1" height="1" fill="#0000f0"/><rect x="2" y="3" width="7" height="1" fill="#e6f2fc"/><rect x="9" y="3" width="1" height="1" fill="#0000f0"/><rect x="10" y="3" width="1" height="1" fill="#c4dcf4"/><rect x="0" y="4" width="1" height="1" fill="#c4dcf4"/><rect x="1" y="4" width="1" height="1" fill="#0000f0"/><rect x="2" y="4" width="7" height="1" fill="#e6f2fc"/><rect x="9" y="4" width="1" height="1" fill="#0000f0"/><rect x="10" y="4" width="1" height="1" fill="#c4dcf4"/><rect x="0" y="5" width="1" height="1" fill="#c4dcf4"/><rect x="1" y="5" width="1" height="1" fill="#0000f0"/><rect x="2" y="5" width="7" height="1" fill="#e6f2fc"/><rect x="9" y="5" width="1" height="1" fill="#0000f0"/><rect x="10" y="5" width="1" height="1" fill="#c4dcf4"/><rect x="0" y="6" width="1" height="1" fill="#c4dcf4"/><rect x="1" y="6" width="1" height="1" fill="#0000f0"/><rect x="2" y="6" width="1" height="1" fill="#e6f2fc"/><rect x="3" y="6" width="5" height="1" fill="#000000"/><rect x="8" y="6" width="1" height="1" fill="#e6f2fc"/><rect x="9" y="6" width="1" height="1" fill="#0000f0"/><rect x="10" y="6" width="1" height="1" fill="#c4dcf4"/><rect x="0" y="7" width="1" height="1" fill="#c4dcf4"/><rect x="1" y="7" width="1" height="1" fill="#0000f0"/><rect x="2" y="7" width="7" height="1" fill="#e6f2fc"/><rect x="9" y="7" width="1" height="1" fill="#0000f0"/><rect x="10" y="7" width="1" height="1" fill="#c4dcf4"/><rect x="0" y="8" width="1" height="1" fill="#c4dcf4"/><rect x="1" y="8" width="1" height="1" fill="#0000f0"/><rect x="2" y="8" width="7" height="1" fill="#e6f2fc"/><rect x="9" y="8" width="1" height="1" fill="#0000f0"/><rect x="10" y="8" width="1" height="1" fill="#c4dcf4"/><rect x="0" y="9" width="1" height="1" fill="#c4dcf4"/><rect x="1" y="9" width="1" height="1" fill="#0000f0"/><rect x="2" y="9" width="7" height="1" fill="#e6f2fc"/><rect x="9" y="9" width="1" height="1" fill="#0000f0"/><rect x="10" y="9" width="1" height="1" fill="#c4dcf4"/><rect x="0" y="10" width="1" height="1" fill="#c4dcf4"/><rect x="2" y="10" width="7" height="1" fill="#0000f0"/><rect x="10" y="10" width="1" height="1" fill="#c4dcf4"/><rect x="1" y="11" width="1" height="1" fill="#c4dcf4"/><rect x="9" y="11" width="1" height="1" fill="#c4dcf4"/><rect x="2" y="12" width="7" height="1" fill="#c4dcf4"/></svg>
<svg style="left:22px;top:161px;" width="15" height="13" viewBox="0 0 15 13" shape-rendering="crispEdges"><rect x="0" y="1" width="2" height="1" fill="#22b4dc"/><rect x="3" y="1" width="3" height="1" fill="#22b4dc"/><rect x="0" y="2" width="2" height="1" fill="#22b4dc"/><rect x="3" y="2" width="3" height="1" fill="#22b4dc"/><rect x="0" y="4" width="2" height="1" fill="#22b4dc"/><rect x="3" y="4" width="3" height="1" fill="#22b4dc"/><rect x="0" y="5" width="2" height="1" fill="#22b4dc"/><rect x="3" y="5" width="3" height="1" fill="#22b4dc"/><rect x="6" y="5" width="7" height="1" fill="#d4d4d4"/><rect x="2" y="6" width="11" height="1" fill="#d4d4d4"/><rect x="1" y="7" width="14" height="1" fill="#d4d4d4"/><rect x="1" y="8" width="14" height="1" fill="#a8a8a8"/><rect x="1" y="9" width="8" height="1" fill="#3c3c3c"/><rect x="9" y="9" width="5" height="1" fill="#3a1c1c"/><rect x="14" y="9" width="1" height="1" fill="#3c3c3c"/><rect x="1" y="10" width="1" height="1" fill="#3c3c3c"/><rect x="2" y="10" width="6" height="1" fill="#5a5a5a"/><rect x="8" y="10" width="1" height="1" fill="#3c3c3c"/><rect x="9" y="10" width="2" height="1" fill="#3a1c1c"/><rect x="11" y="10" width="1" height="1" fill="#30d040"/><rect x="12" y="10" width="2" height="1" fill="#3a1c1c"/><rect x="14" y="10" width="1" height="1" fill="#3c3c3c"/><rect x="1" y="11" width="8" height="1" fill="#3c3c3c"/><rect x="9" y="11" width="5" height="1" fill="#3a1c1c"/><rect x="14" y="11" width="1" height="1" fill="#3c3c3c"/><rect x="2" y="12" width="12" height="1" fill="#b0b0b0"/></svg>
<div style="left:12px;top:159px;width:1px;height:1px;background:#555;"></div>
<div style="left:12px;top:161px;width:1px;height:1px;background:#555;"></div>
<div style="left:18px;top:168px;width:1px;height:1px;background:#555;"></div>
<div style="left:20px;top:168px;width:1px;height:1px;background:#555;"></div>
<div class="t" style="left:260.42px;top:161.00px;font-size:12px;color:#000;font-weight:normal;transform:scaleX(0.9000);transform-origin:0 0;">43,1 GB</div>
<div class="t" style="left:461.00px;top:161.00px;font-size:12px;color:#000;font-weight:normal;transform:scaleX(0.9000);transform-origin:0 0;">286.326</div>
<div class="t" style="left:594.33px;top:161.00px;font-size:12px;color:#000;font-weight:normal;transform:scaleX(0.9000);transform-origin:0 0;">0</div>
<div style="left:2px;top:177px;width:671px;height:1px;background:#dcdcdc;"></div>
<div class="t" style="left:56.21px;top:180.00px;font-size:12px;color:#000;font-weight:normal;transform:scaleX(1.1036);transform-origin:0 0;">*.dll</div>
<svg style="left:23px;top:181px;" width="11" height="13" viewBox="0 0 11 13" shape-rendering="crispEdges"><rect x="2" y="0" width="7" height="1" fill="#c4dcf4"/><rect x="1" y="1" width="1" height="1" fill="#c4dcf4"/><rect x="9" y="1" width="1" height="1" fill="#c4dcf4"/><rect x="0" y="2" width="1" height="1" fill="#c4dcf4"/><rect x="2" y="2" width="7" height="1" fill="#0000f0"/><rect x="10" y="2" width="1" height="1" fill="#c4dcf4"/><rect x="0" y="3" width="1" height="1" fill="#c4dcf4"/><rect x="1" y="3" width="1" height="1" fill="#0000f0"/><rect x="2" y="3" width="7" height="1" fill="#e6f2fc"/><rect x="9" y="3" width="1" height="1" fill="#0000f0"/><rect x="10" y="3" width="1" height="1" fill="#c4dcf4"/><rect x="0" y="4" width="1" height="1" fill="#c4dcf4"/><rect x="1" y="4" width="1" height="1" fill="#0000f0"/><rect x="2" y="4" width="3" height="1" fill="#e6f2fc"/><rect x="5" y="4" width="1" height="1" fill="#000000"/><rect x="6" y="4" width="3" height="1" fill="#e6f2fc"/><rect x="9" y="4" width="1" height="1" fill="#0000f0"/><rect x="10" y="4" width="1" height="1" fill="#c4dcf4"/><rect x="0" y="5" width="1" height="1" fill="#c4dcf4"/><rect x="1" y="5" width="1" height="1" fill="#0000f0"/><rect x="2" y="5" width="3" height="1" fill="#e6f2fc"/><rect x="5" y="5" width="1" height="1" fill="#000000"/><rect x="6" y="5" width="3" height="1" fill="#e6f2fc"/><rect x="9" y="5" width="1" height="1" fill="#0000f0"/><rect x="10" y="5" width="1" height="1" fill="#c4dcf4"/><rect x="0" y="6" width="1" height="1" fill="#c4dcf4"/><rect x="1" y="6" width="1" height="1" fill="#0000f0"/><rect x="2" y="6" width="1" height="1" fill="#e6f2fc"/><rect x="3" y="6" width="5" height="1" fill="#000000"/><rect x="8" y="6" width="1" height="1" fill="#e6f2fc"/><rect x="9" y="6" width="1" height="1" fill="#0000f0"/><rect x="10" y="6" width="1" height="1" fill="#c4dcf4"/><rect x="0" y="7" width="1" height="1" fill="#c4dcf4"/><rect x="1" y="7" width="1" height="1" fill="#0000f0"/><rect x="2" y="7" width="3" height="1" fill="#e6f2fc"/><rect x="5" y="7" width="1" height="1" fill="#000000"/><rect x="6" y="7" width="3" height="1" fill="#e6f2fc"/><rect x="9" y="7" width="1" height="1" fill="#0000f0"/><rect x="10" y="7" width="1" height="1" fill="#c4dcf4"/><rect x="0" y="8" width="1" height="1" fill="#c4dcf4"/><rect x="1" y="8" width="1" height="1" fill="#0000f0"/><rect x="2" y="8" width="3" height="1" fill="#e6f2fc"/><rect x="5" y="8" width="1" height="1" fill="#000000"/><rect x="6" y="8" width="3" height="1" fill="#e6f2fc"/><rect x="9" y="8" width="1" height="1" fill="#0000f0"/><rect x="10" y="8" width="1" height="1" fill="#c4dcf4"/><rect x="0" y="9" width="1" height="1" fill="#c4dcf4"/><rect x="1" y="9" width="1" height="1" fill="#0000f0"/><rect x="2" y="9" width="7" height="1" fill="#e6f2fc"/><rect x="9" y="9" width="1" height="1" fill="#0000f0"/><rect x="10" y="9" width="1" height="1" fill="#c4dcf4"/><rect x="0" y="10" width="1" height="1" fill="#c4dcf4"/><rect x="2" y="10" width="7" height="1" fill="#0000f0"/><rect x="10" y="10" width="1" height="1" fill="#c4dcf4"/><rect x="1" y="11" width="1" height="1" fill="#c4dcf4"/><rect x="9" y="11" width="1" height="1" fill="#c4dcf4"/><rect x="2" y="12" width="7" height="1" fill="#c4dcf4"/></svg>
<div style="left:28px;top:178px;width:1px;height:1px;background:#555;"></div>
<div style="left:28px;top:180px;width:1px;height:1px;background:#555;"></div>
<div style="left:34px;top:187px;width:1px;height:1px;background:#555;"></div>
<div style="left:36px;top:187px;width:1px;height:1px;background:#555;"></div>
<div style="left:38px;top:187px;width:1px;height:1px;background:#555;"></div>
<svg style="left:40px;top:178px;shape-rendering:auto" width="16" height="15" viewBox="0 0 16 15" shape-rendering="crispEdges"><rect x="0.5" y="0.5" width="15" height="14" fill="#f8d890" stroke="#e0a040"/><rect x="2" y="2" width="12" height="11" fill="#f8dca0"/></svg>
<div class="t" style="left:260.42px;top:180.00px;font-size:12px;color:#000;font-weight:normal;transform:scaleX(0.9000);transform-origin:0 0;">21,0 GB</div>
<div class="t" style="left:360.71px;top:180.00px;font-size:12px;color:#000;font-weight:normal;transform:scaleX(0.9000);transform-origin:0 0;">48.79 %</div>
<div style="left:305px;top:193px;width:95px;height:2px;background:#3db54a;"></div>
<div class="t" style="left:467.02px;top:180.00px;font-size:12px;color:#000;font-weight:normal;transform:scaleX(0.9000);transform-origin:0 0;">45.919</div>
<div class="t" style="left:594.33px;top:180.00px;font-size:12px;color:#000;font-weight:normal;transform:scaleX(0.9000);transform-origin:0 0;">0</div>
<div style="left:2px;top:196px;width:671px;height:1px;background:#dcdcdc;"></div>
<div class="t" style="left:56.31px;top:199.00px;font-size:12px;color:#000;font-weight:normal;transform:scaleX(0.9645);transform-origin:0 0;">*.exe</div>
<svg style="left:23px;top:200px;" width="11" height="13" viewBox="0 0 11 13" shape-rendering="crispEdges"><rect x="2" y="0" width="7" height="1" fill="#c4dcf4"/><rect x="1" y="1" width="1" height="1" fill="#c4dcf4"/><rect x="9" y="1" width="1" height="1" fill="#c4dcf4"/><rect x="0" y="2" width="1" height="1" fill="#c4dcf4"/><rect x="2" y="2" width="7" height="1" fill="#0000f0"/><rect x="10" y="2" width="1" height="1" fill="#c4dcf4"/><rect x="0" y="3" width="1" height="1" fill="#c4dcf4"/><rect x="1" y="3" width="1" height="1" fill="#0000f0"/><rect x="2" y="3" width="7" height="1" fill="#e6f2fc"/><rect x="9" y="3" width="1" height="1" fill="#0000f0"/><rect x="10" y="3" width="1" height="1" fill="#c4dcf4"/><rect x="0" y="4" width="1" height="1" fill="#c4dcf4"/><rect x="1" y="4" width="1" height="1" fill="#0000f0"/><rect x="2" y="4" width="3" height="1" fill="#e6f2fc"/><rect x="5" y="4" width="1" height="1" fill="#000000"/><rect x="6" y="4" width="3" height="1" fill="#e6f2fc"/><rect x="9" y="4" width="1" height="1" fill="#0000f0"/><rect x="10" y="4" width="1" height="1" fill="#c4dcf4"/><rect x="0" y="5" width="1" height="1" fill="#c4dcf4"/><rect x="1" y="5" width="1" height="1" fill="#0000f0"/><rect x="2" y="5" width="3" height="1" fill="#e6f2fc"/><rect x="5" y="5" width="1" height="1" fill="#000000"/><rect x="6" y="5" width="3" height="1" fill="#e6f2fc"/><rect x="9" y="5" width="1" height="1" fill="#0000f0"/><rect x="10" y="5" width="1" height="1" fill="#c4dcf4"/><rect x="0" y="6" width="1" height="1" fill="#c4dcf4"/><rect x="1" y="6" width="1" height="1" fill="#0000f0"/><rect x="2" y="6" width="1" height="1" fill="#e6f2fc"/><rect x="3" y="6" width="5" height="1" fill="#000000"/><rect x="8" y="6" width="1" height="1" fill="#e6f2fc"/><rect x="9" y="6" width="1" height="1" fill="#0000f0"/><rect x="10" y="6" width="1" height="1" fill="#c4dcf4"/><rect x="0" y="7" width="1" height="1" fill="#c4dcf4"/><rect x="1" y="7" width="1" height="1" fill="#0000f0"/><rect x="2" y="7" width="3" height="1" fill="#e6f2fc"/><rect x="5" y="7" width="1" height="1" fill="#000000"/><rect x="6" y="7" width="3" height="1" fill="#e6f2fc"/><rect x="9" y="7" width="1" height="1" fill="#0000f0"/><rect x="10" y="7" width="1" height="1" fill="#c4dcf4"/><rect x="0" y="8" width="1" height="1" fill="#c4dcf4"/><rect x="1" y="8" width="1" height="1" fill="#0000f0"/><rect x="2" y="8" width="3" height="1" fill="#e6f2fc"/><rect x="5" y="8" width="1" height="1" fill="#000000"/><rect x="6" y="8" width="3" height="1" fill="#e6f2fc"/><rect x="9" y="8" width="1" height="1" fill="#0000f0"/><rect x="10" y="8" width="1" height="1" fill="#c4dcf4"/><rect x="0" y="9" width="1" height="1" fill="#c4dcf4"/><rect x="1" y="9" width="1" height="1" fill="#0000f0"/><rect x="2" y="9" width="7" height="1" fill="#e6f2fc"/><rect x="9" y="9" width="1" height="1" fill="#0000f0"/><rect x="10" y="9" width="1" height="1" fill="#c4dcf4"/><rect x="0" y="10" width="1" height="1" fill="#c4dcf4"/><rect x="2" y="10" width="7" height="1" fill="#0000f0"/><rect x="10" y="10" width="1" height="1" fill="#c4dcf4"/><rect x="1" y="11" width="1" height="1" fill="#c4dcf4"/><rect x="9" y="11" width="1" height="1" fill="#c4dcf4"/><rect x="2" y="12" width="7" height="1" fill="#c4dcf4"/></svg>
<div style="left:28px;top:197px;width:1px;height:1px;background:#555;"></div>
<div style="left:28px;top:199px;width:1px;height:1px;background:#555;"></div>
<div style="left:34px;top:206px;width:1px;height:1px;background:#555;"></div>
<div style="left:36px;top:206px;width:1px;height:1px;background:#555;"></div>
<div style="left:38px;top:206px;width:1px;height:1px;background:#555;"></div>
<svg style="left:40px;top:197px;shape-rendering:auto" width="16" height="15" viewBox="0 0 16 15" shape-rendering="crispEdges"><rect x="0.5" y="0.5" width="15" height="14" fill="#f8d890" stroke="#e0a040"/><rect x="2" y="2" width="12" height="11" fill="#f8dca0"/></svg>
<div class="t" style="left:266.42px;top:199.00px;font-size:12px;color:#000;font-weight:normal;transform:scaleX(0.9000);transform-origin:0 0;">3,2 GB</div>
<div class="t" style="left:366.72px;top:199.00px;font-size:12px;color:#000;font-weight:normal;transform:scaleX(0.9000);transform-origin:0 0;">7.54 %</div>
<div style="left:385px;top:212px;width:15px;height:2px;background:#3db54a;"></div>
<div class="t" style="left:473.02px;top:199.00px;font-size:12px;color:#000;font-weight:normal;transform:scaleX(0.9000);transform-origin:0 0;">6.894</div>
<div class="t" style="left:594.33px;top:199.00px;font-size:12px;color:#000;font-weight:normal;transform:scaleX(0.9000);transform-origin:0 0;">0</div>
<div style="left:2px;top:215px;width:671px;height:1px;background:#dcdcdc;"></div>
<div class="t" style="left:56.24px;top:218.00px;font-size:12px;color:#000;font-weight:normal;transform:scaleX(1.0582);transform-origin:0 0;">*.dat</div>
<svg style="left:23px;top:219px;" width="11" height="13" viewBox="0 0 11 13" shape-rendering="crispEdges"><rect x="2" y="0" width="7" height="1" fill="#c4dcf4"/><rect x="1" y="1" width="1" height="1" fill="#c4dcf4"/><rect x="9" y="1" width="1" height="1" fill="#c4dcf4"/><rect x="0" y="2" width="1" height="1" fill="#c4dcf4"/><rect x="2" y="2" width="7" height="1" fill="#0000f0"/><rect x="10" y="2" width="1" height="1" fill="#c4dcf4"/><rect x="0" y="3" width="1" height="1" fill="#c4dcf4"/><rect x="1" y="3" width="1" height="1" fill="#0000f0"/><rect x="2" y="3" width="7" height="1" fill="#e6f2fc"/><rect x="9" y="3" width="1" height="1" fill="#0000f0"/><rect x="10" y="3" width="1" height="1" fill="#c4dcf4"/><rect x="0" y="4" width="1" height="1" fill="#c4dcf4"/><rect x="1" y="4" width="1" height="1" fill="#0000f0"/><rect x="2" y="4" width="3" height="1" fill="#e6f2fc"/><rect x="5" y="4" width="1" height="1" fill="#000000"/><rect x="6" y="4" width="3" height="1" fill="#e6f2fc"/><rect x="9" y="4" width="1" height="1" fill="#0000f0"/><rect x="10" y="4" width="1" height="1" fill="#c4dcf4"/><rect x="0" y="5" width="1" height="1" fill="#c4dcf4"/><rect x="1" y="5" width="1" height="1" fill="#0000f0"/><rect x="2" y="5" width="3" height="1" fill="#e6f2fc"/><rect x="5" y="5" width="1" height="1" fill="#000000"/><rect x="6" y="5" width="3" height="1" fill="#e6f2fc"/><rect x="9" y="5" width="1" height="1" fill="#0000f0"/><rect x="10" y="5" width="1" height="1" fill="#c4dcf4"/><rect x="0" y="6" width="1" height="1" fill="#c4dcf4"/><rect x="1" y="6" width="1" height="1" fill="#0000f0"/><rect x="2" y="6" width="1" height="1" fill="#e6f2fc"/><rect x="3" y="6" width="5" height="1" fill="#000000"/><rect x="8" y="6" width="1" height="1" fill="#e6f2fc"/><rect x="9" y="6" width="1" height="1" fill="#0000f0"/><rect x="10" y="6" width="1" height="1" fill="#c4dcf4"/><rect x="0" y="7" width="1" height="1" fill="#c4dcf4"/><rect x="1" y="7" width="1" height="1" fill="#0000f0"/><rect x="2" y="7" width="3" height="1" fill="#e6f2fc"/><rect x="5" y="7" width="1" height="1" fill="#000000"/><rect x="6" y="7" width="3" height="1" fill="#e6f2fc"/><rect x="9" y="7" width="1" height="1" fill="#0000f0"/><rect x="10" y="7" width="1" height="1" fill="#c4dcf4"/><rect x="0" y="8" width="1" height="1" fill="#c4dcf4"/><rect x="1" y="8" width="1" height="1" fill="#0000f0"/><rect x="2" y="8" width="3" height="1" fill="#e6f2fc"/><rect x="5" y="8" width="1" height="1" fill="#000000"/><rect x="6" y="8" width="3" height="1" fill="#e6f2fc"/><rect x="9" y="8" width="1" height="1" fill="#0000f0"/><rect x="10" y="8" width="1" height="1" fill="#c4dcf4"/><rect x="0" y="9" width="1" height="1" fill="#c4dcf4"/><rect x="1" y="9" width="1" height="1" fill="#0000f0"/><rect x="2" y="9" width="7" height="1" fill="#e6f2fc"/><rect x="9" y="9" width="1" height="1" fill="#0000f0"/><rect x="10" y="9" width="1" height="1" fill="#c4dcf4"/><rect x="0" y="10" width="1" height="1" fill="#c4dcf4"/><rect x="2" y="10" width="7" height="1" fill="#0000f0"/><rect x="10" y="10" width="1" height="1" fill="#c4dcf4"/><rect x="1" y="11" width="1" height="1" fill="#c4dcf4"/><rect x="9" y="11" width="1" height="1" fill="#c4dcf4"/><rect x="2" y="12" width="7" height="1" fill="#c4dcf4"/></svg>
<div style="left:28px;top:216px;width:1px;height:1px;background:#555;"></div>
<div style="left:28px;top:218px;width:1px;height:1px;background:#555;"></div>
<div style="left:34px;top:225px;width:1px;height:1px;background:#555;"></div>
<div style="left:36px;top:225px;width:1px;height:1px;background:#555;"></div>
<div style="left:38px;top:225px;width:1px;height:1px;background:#555;"></div>
<svg style="left:40px;top:216px;shape-rendering:auto" width="16" height="15" viewBox="0 0 16 15" shape-rendering="crispEdges"><rect x="0.5" y="0.5" width="15" height="14" fill="#f8d890" stroke="#e0a040"/><rect x="2" y="2" width="12" height="11" fill="#f8dca0"/></svg>
<div class="t" style="left:266.42px;top:218.00px;font-size:12px;color:#000;font-weight:normal;transform:scaleX(0.9000);transform-origin:0 0;">2,9 GB</div>
<div class="t" style="left:366.72px;top:218.00px;font-size:12px;color:#000;font-weight:normal;transform:scaleX(0.9000);transform-origin:0 0;">6.65 %</div>
<div style="left:387px;top:231px;width:13px;height:2px;background:#3db54a;"></div>
<div class="t" style="left:473.02px;top:218.00px;font-size:12px;color:#000;font-weight:normal;transform:scaleX(0.9000);transform-origin:0 0;">1.380</div>
<div class="t" style="left:594.33px;top:218.00px;font-size:12px;color:#000;font-weight:normal;transform:scaleX(0.9000);transform-origin:0 0;">0</div>
<div style="left:2px;top:234px;width:671px;height:1px;background:#dcdcdc;"></div>
<div class="t" style="left:56.16px;top:237.00px;font-size:12px;color:#000;font-weight:normal;transform:scaleX(1.1710);transform-origin:0 0;">*.</div>
<svg style="left:23px;top:238px;" width="11" height="13" viewBox="0 0 11 13" shape-rendering="crispEdges"><rect x="2" y="0" width="7" height="1" fill="#c4dcf4"/><rect x="1" y="1" width="1" height="1" fill="#c4dcf4"/><rect x="9" y="1" width="1" height="1" fill="#c4dcf4"/><rect x="0" y="2" width="1" height="1" fill="#c4dcf4"/><rect x="2" y="2" width="7" height="1" fill="#0000f0"/><rect x="10" y="2" width="1" height="1" fill="#c4dcf4"/><rect x="0" y="3" width="1" height="1" fill="#c4dcf4"/><rect x="1" y="3" width="1" height="1" fill="#0000f0"/><rect x="2" y="3" width="7" height="1" fill="#e6f2fc"/><rect x="9" y="3" width="1" height="1" fill="#0000f0"/><rect x="10" y="3" width="1" height="1" fill="#c4dcf4"/><rect x="0" y="4" width="1" height="1" fill="#c4dcf4"/><rect x="1" y="4" width="1" height="1" fill="#0000f0"/><rect x="2" y="4" width="3" height="1" fill="#e6f2fc"/><rect x="5" y="4" width="1" height="1" fill="#000000"/><rect x="6" y="4" width="3" height="1" fill="#e6f2fc"/><rect x="9" y="4" width="1" height="1" fill="#0000f0"/><rect x="10" y="4" width="1" height="1" fill="#c4dcf4"/><rect x="0" y="5" width="1" height="1" fill="#c4dcf4"/><rect x="1" y="5" width="1" height="1" fill="#0000f0"/><rect x="2" y="5" width="3" height="1" fill="#e6f2fc"/><rect x="5" y="5" width="1" height="1" fill="#000000"/><rect x="6" y="5" width="3" height="1" fill="#e6f2fc"/><rect x="9" y="5" width="1" height="1" fill="#0000f0"/><rect x="10" y="5" width="1" height="1" fill="#c4dcf4"/><rect x="0" y="6" width="1" height="1" fill="#c4dcf4"/><rect x="1" y="6" width="1" height="1" fill="#0000f0"/><rect x="2" y="6" width="1" height="1" fill="#e6f2fc"/><rect x="3" y="6" width="5" height="1" fill="#000000"/><rect x="8" y="6" width="1" height="1" fill="#e6f2fc"/><rect x="9" y="6" width="1" height="1" fill="#0000f0"/><rect x="10" y="6" width="1" height="1" fill="#c4dcf4"/><rect x="0" y="7" width="1" height="1" fill="#c4dcf4"/><rect x="1" y="7" width="1" height="1" fill="#0000f0"/><rect x="2" y="7" width="3" height="1" fill="#e6f2fc"/><rect x="5" y="7" width="1" height="1" fill="#000000"/><rect x="6" y="7" width="3" height="1" fill="#e6f2fc"/><rect x="9" y="7" width="1" height="1" fill="#0000f0"/><rect x="10" y="7" width="1" height="1" fill="#c4dcf4"/><rect x="0" y="8" width="1" height="1" fill="#c4dcf4"/><rect x="1" y="8" width="1" height="1" fill="#0000f0"/><rect x="2" y="8" width="3" height="1" fill="#e6f2fc"/><rect x="5" y="8" width="1" height="1" fill="#000000"/><rect x="6" y="8" width="3" height="1" fill="#e6f2fc"/><rect x="9" y="8" width="1" height="1" fill="#0000f0"/><rect x="10" y="8" width="1" height="1" fill="#c4dcf4"/><rect x="0" y="9" width="1" height="1" fill="#c4dcf4"/><rect x="1" y="9" width="1" height="1" fill="#0000f0"/><rect x="2" y="9" width="7" height="1" fill="#e6f2fc"/><rect x="9" y="9" width="1" height="1" fill="#0000f0"/><rect x="10" y="9" width="1" height="1" fill="#c4dcf4"/><rect x="0" y="10" width="1" height="1" fill="#c4dcf4"/><rect x="2" y="10" width="7" height="1" fill="#0000f0"/><rect x="10" y="10" width="1" height="1" fill="#c4dcf4"/><rect x="1" y="11" width="1" height="1" fill="#c4dcf4"/><rect x="9" y="11" width="1" height="1" fill="#c4dcf4"/><rect x="2" y="12" width="7" height="1" fill="#c4dcf4"/></svg>
<div style="left:28px;top:235px;width:1px;height:1px;background:#555;"></div>
<div style="left:28px;top:237px;width:1px;height:1px;background:#555;"></div>
<div style="left:34px;top:244px;width:1px;height:1px;background:#555;"></div>
<div style="left:36px;top:244px;width:1px;height:1px;background:#555;"></div>
<div style="left:38px;top:244px;width:1px;height:1px;background:#555;"></div>
<svg style="left:40px;top:235px;shape-rendering:auto" width="16" height="15" viewBox="0 0 16 15" shape-rendering="crispEdges"><rect x="0.5" y="0.5" width="15" height="14" fill="#f8d890" stroke="#e0a040"/><rect x="2" y="2" width="12" height="11" fill="#f8dca0"/></svg>
<div class="t" style="left:266.42px;top:237.00px;font-size:12px;color:#000;font-weight:normal;transform:scaleX(0.9000);transform-origin:0 0;">1,2 GB</div>
<div class="t" style="left:366.72px;top:237.00px;font-size:12px;color:#000;font-weight:normal;transform:scaleX(0.9000);transform-origin:0 0;">2.81 %</div>
<div style="left:395px;top:250px;width:5px;height:2px;background:#3db54a;"></div>
<div class="t" style="left:473.02px;top:237.00px;font-size:12px;color:#000;font-weight:normal;transform:scaleX(0.9000);transform-origin:0 0;">4.744</div>
<div class="t" style="left:594.33px;top:237.00px;font-size:12px;color:#000;font-weight:normal;transform:scaleX(0.9000);transform-origin:0 0;">0</div>
<div style="left:2px;top:253px;width:671px;height:1px;background:#dcdcdc;"></div>
<div class="t" style="left:56.20px;top:256.00px;font-size:12px;color:#000;font-weight:normal;transform:scaleX(1.1090);transform-origin:0 0;">*.lib</div>
<svg style="left:23px;top:257px;" width="11" height="13" viewBox="0 0 11 13" shape-rendering="crispEdges"><rect x="2" y="0" width="7" height="1" fill="#c4dcf4"/><rect x="1" y="1" width="1" height="1" fill="#c4dcf4"/><rect x="9" y="1" width="1" height="1" fill="#c4dcf4"/><rect x="0" y="2" width="1" height="1" fill="#c4dcf4"/><rect x="2" y="2" width="7" height="1" fill="#0000f0"/><rect x="10" y="2" width="1" height="1" fill="#c4dcf4"/><rect x="0" y="3" width="1" height="1" fill="#c4dcf4"/><rect x="1" y="3" width="1" height="1" fill="#0000f0"/><rect x="2" y="3" width="7" height="1" fill="#e6f2fc"/><rect x="9" y="3" width="1" height="1" fill="#0000f0"/><rect x="10" y="3" width="1" height="1" fill="#c4dcf4"/><rect x="0" y="4" width="1" height="1" fill="#c4dcf4"/><rect x="1" y="4" width="1" height="1" fill="#0000f0"/><rect x="2" y="4" width="3" height="1" fill="#e6f2fc"/><rect x="5" y="4" width="1" height="1" fill="#000000"/><rect x="6" y="4" width="3" height="1" fill="#e6f2fc"/><rect x="9" y="4" width="1" height="1" fill="#0000f0"/><rect x="10" y="4" width="1" height="1" fill="#c4dcf4"/><rect x="0" y="5" width="1" height="1" fill="#c4dcf4"/><rect x="1" y="5" width="1" height="1" fill="#0000f0"/><rect x="2" y="5" width="3" height="1" fill="#e6f2fc"/><rect x="5" y="5" width="1" height="1" fill="#000000"/><rect x="6" y="5" width="3" height="1" fill="#e6f2fc"/><rect x="9" y="5" width="1" height="1" fill="#0000f0"/><rect x="10" y="5" width="1" height="1" fill="#c4dcf4"/><rect x="0" y="6" width="1" height="1" fill="#c4dcf4"/><rect x="1" y="6" width="1" height="1" fill="#0000f0"/><rect x="2" y="6" width="1" height="1" fill="#e6f2fc"/><rect x="3" y="6" width="5" height="1" fill="#000000"/><rect x="8" y="6" width="1" height="1" fill="#e6f2fc"/><rect x="9" y="6" width="1" height="1" fill="#0000f0"/><rect x="10" y="6" width="1" height="1" fill="#c4dcf4"/><rect x="0" y="7" width="1" height="1" fill="#c4dcf4"/><rect x="1" y="7" width="1" height="1" fill="#0000f0"/><rect x="2" y="7" width="3" height="1" fill="#e6f2fc"/><rect x="5" y="7" width="1" height="1" fill="#000000"/><rect x="6" y="7" width="3" height="1" fill="#e6f2fc"/><rect x="9" y="7" width="1" height="1" fill="#0000f0"/><rect x="10" y="7" width="1" height="1" fill="#c4dcf4"/><rect x="0" y="8" width="1" height="1" fill="#c4dcf4"/><rect x="1" y="8" width="1" height="1" fill="#0000f0"/><rect x="2" y="8" width="3" height="1" fill="#e6f2fc"/><rect x="5" y="8" width="1" height="1" fill="#000000"/><rect x="6" y="8" width="3" height="1" fill="#e6f2fc"/><rect x="9" y="8" width="1" height="1" fill="#0000f0"/><rect x="10" y="8" width="1" height="1" fill="#c4dcf4"/><rect x="0" y="9" width="1" height="1" fill="#c4dcf4"/><rect x="1" y="9" width="1" height="1" fill="#0000f0"/><rect x="2" y="9" width="7" height="1" fill="#e6f2fc"/><rect x="9" y="9" width="1" height="1" fill="#0000f0"/><rect x="10" y="9" width="1" height="1" fill="#c4dcf4"/><rect x="0" y="10" width="1" height="1" fill="#c4dcf4"/><rect x="2" y="10" width="7" height="1" fill="#0000f0"/><rect x="10" y="10" width="1" height="1" fill="#c4dcf4"/><rect x="1" y="11" width="1" height="1" fill="#c4dcf4"/><rect x="9" y="11" width="1" height="1" fill="#c4dcf4"/><rect x="2" y="12" width="7" height="1" fill="#c4dcf4"/></svg>
<div style="left:28px;top:254px;width:1px;height:1px;background:#555;"></div>
<div style="left:28px;top:256px;width:1px;height:1px;background:#555;"></div>
<div style="left:34px;top:263px;width:1px;height:1px;background:#555;"></div>
<div style="left:36px;top:263px;width:1px;height:1px;background:#555;"></div>
<div style="left:38px;top:263px;width:1px;height:1px;background:#555;"></div>
<svg style="left:40px;top:254px;shape-rendering:auto" width="16" height="15" viewBox="0 0 16 15" shape-rendering="crispEdges"><rect x="0.5" y="0.5" width="15" height="14" fill="#f8d890" stroke="#e0a040"/><rect x="2" y="2" width="12" height="11" fill="#f8dca0"/></svg>
<div class="t" style="left:266.42px;top:256.00px;font-size:12px;color:#000;font-weight:normal;transform:scaleX(0.9000);transform-origin:0 0;">1,2 GB</div>
<div class="t" style="left:366.72px;top:256.00px;font-size:12px;color:#000;font-weight:normal;transform:scaleX(0.9000);transform-origin:0 0;">2.79 %</div>
<div style="left:395px;top:269px;width:5px;height:2px;background:#3db54a;"></div>
<div class="t" style="left:473.02px;top:256.00px;font-size:12px;color:#000;font-weight:normal;transform:scaleX(0.9000);transform-origin:0 0;">2.673</div>
<div class="t" style="left:594.33px;top:256.00px;font-size:12px;color:#000;font-weight:normal;transform:scaleX(0.9000);transform-origin:0 0;">0</div>
<div style="left:2px;top:272px;width:671px;height:1px;background:#dcdcdc;"></div>
<div class="t" style="left:56.29px;top:275.00px;font-size:12px;color:#000;font-weight:normal;transform:scaleX(0.9806);transform-origin:0 0;">*.sys</div>
<svg style="left:23px;top:276px;" width="11" height="13" viewBox="0 0 11 13" shape-rendering="crispEdges"><rect x="2" y="0" width="7" height="1" fill="#c4dcf4"/><rect x="1" y="1" width="1" height="1" fill="#c4dcf4"/><rect x="9" y="1" width="1" height="1" fill="#c4dcf4"/><rect x="0" y="2" width="1" height="1" fill="#c4dcf4"/><rect x="2" y="2" width="7" height="1" fill="#0000f0"/><rect x="10" y="2" width="1" height="1" fill="#c4dcf4"/><rect x="0" y="3" width="1" height="1" fill="#c4dcf4"/><rect x="1" y="3" width="1" height="1" fill="#0000f0"/><rect x="2" y="3" width="7" height="1" fill="#e6f2fc"/><rect x="9" y="3" width="1" height="1" fill="#0000f0"/><rect x="10" y="3" width="1" height="1" fill="#c4dcf4"/><rect x="0" y="4" width="1" height="1" fill="#c4dcf4"/><rect x="1" y="4" width="1" height="1" fill="#0000f0"/><rect x="2" y="4" width="3" height="1" fill="#e6f2fc"/><rect x="5" y="4" width="1" height="1" fill="#000000"/><rect x="6" y="4" width="3" height="1" fill="#e6f2fc"/><rect x="9" y="4" width="1" height="1" fill="#0000f0"/><rect x="10" y="4" width="1" height="1" fill="#c4dcf4"/><rect x="0" y="5" width="1" height="1" fill="#c4dcf4"/><rect x="1" y="5" width="1" height="1" fill="#0000f0"/><rect x="2" y="5" width="3" height="1" fill="#e6f2fc"/><rect x="5" y="5" width="1" height="1" fill="#000000"/><rect x="6" y="5" width="3" height="1" fill="#e6f2fc"/><rect x="9" y="5" width="1" height="1" fill="#0000f0"/><rect x="10" y="5" width="1" height="1" fill="#c4dcf4"/><rect x="0" y="6" width="1" height="1" fill="#c4dcf4"/><rect x="1" y="6" width="1" height="1" fill="#0000f0"/><rect x="2" y="6" width="1" height="1" fill="#e6f2fc"/><rect x="3" y="6" width="5" height="1" fill="#000000"/><rect x="8" y="6" width="1" height="1" fill="#e6f2fc"/><rect x="9" y="6" width="1" height="1" fill="#0000f0"/><rect x="10" y="6" width="1" height="1" fill="#c4dcf4"/><rect x="0" y="7" width="1" height="1" fill="#c4dcf4"/><rect x="1" y="7" width="1" height="1" fill="#0000f0"/><rect x="2" y="7" width="3" height="1" fill="#e6f2fc"/><rect x="5" y="7" width="1" height="1" fill="#000000"/><rect x="6" y="7" width="3" height="1" fill="#e6f2fc"/><rect x="9" y="7" width="1" height="1" fill="#0000f0"/><rect x="10" y="7" width="1" height="1" fill="#c4dcf4"/><rect x="0" y="8" width="1" height="1" fill="#c4dcf4"/><rect x="1" y="8" width="1" height="1" fill="#0000f0"/><rect x="2" y="8" width="3" height="1" fill="#e6f2fc"/><rect x="5" y="8" width="1" height="1" fill="#000000"/><rect x="6" y="8" width="3" height="1" fill="#e6f2fc"/><rect x="9" y="8" width="1" height="1" fill="#0000f0"/><rect x="10" y="8" width="1" height="1" fill="#c4dcf4"/><rect x="0" y="9" width="1" height="1" fill="#c4dcf4"/><rect x="1" y="9" width="1" height="1" fill="#0000f0"/><rect x="2" y="9" width="7" height="1" fill="#e6f2fc"/><rect x="9" y="9" width="1" height="1" fill="#0000f0"/><rect x="10" y="9" width="1" height="1" fill="#c4dcf4"/><rect x="0" y="10" width="1" height="1" fill="#c4dcf4"/><rect x="2" y="10" width="7" height="1" fill="#0000f0"/><rect x="10" y="10" width="1" height="1" fill="#c4dcf4"/><rect x="1" y="11" width="1" height="1" fill="#c4dcf4"/><rect x="9" y="11" width="1" height="1" fill="#c4dcf4"/><rect x="2" y="12" width="7" height="1" fill="#c4dcf4"/></svg>
<div style="left:28px;top:273px;width:1px;height:1px;background:#555;"></div>
<div style="left:28px;top:275px;width:1px;height:1px;background:#555;"></div>
<div style="left:34px;top:282px;width:1px;height:1px;background:#555;"></div>
<div style="left:36px;top:282px;width:1px;height:1px;background:#555;"></div>
<div style="left:38px;top:282px;width:1px;height:1px;background:#555;"></div>
<svg style="left:40px;top:273px;shape-rendering:auto" width="16" height="15" viewBox="0 0 16 15" shape-rendering="crispEdges"><rect x="0.5" y="0.5" width="15" height="14" fill="#f8d890" stroke="#e0a040"/><rect x="2" y="2" width="12" height="11" fill="#f8dca0"/></svg>
<div class="t" style="left:266.42px;top:275.00px;font-size:12px;color:#000;font-weight:normal;transform:scaleX(0.9000);transform-origin:0 0;">0,9 GB</div>
<div class="t" style="left:366.72px;top:275.00px;font-size:12px;color:#000;font-weight:normal;transform:scaleX(0.9000);transform-origin:0 0;">2.19 %</div>
<div style="left:396px;top:288px;width:4px;height:2px;background:#3db54a;"></div>
<div class="t" style="left:473.02px;top:275.00px;font-size:12px;color:#000;font-weight:normal;transform:scaleX(0.9000);transform-origin:0 0;">2.924</div>
<div class="t" style="left:594.33px;top:275.00px;font-size:12px;color:#000;font-weight:normal;transform:scaleX(0.9000);transform-origin:0 0;">0</div>
<div style="left:2px;top:291px;width:671px;height:1px;background:#dcdcdc;"></div>
<div class="t" style="left:56.20px;top:294.00px;font-size:12px;color:#000;font-weight:normal;transform:scaleX(1.1075);transform-origin:0 0;">*.ttc</div>
<svg style="left:23px;top:295px;" width="11" height="13" viewBox="0 0 11 13" shape-rendering="crispEdges"><rect x="2" y="0" width="7" height="1" fill="#c4dcf4"/><rect x="1" y="1" width="1" height="1" fill="#c4dcf4"/><rect x="9" y="1" width="1" height="1" fill="#c4dcf4"/><rect x="0" y="2" width="1" height="1" fill="#c4dcf4"/><rect x="2" y="2" width="7" height="1" fill="#0000f0"/><rect x="10" y="2" width="1" height="1" fill="#c4dcf4"/><rect x="0" y="3" width="1" height="1" fill="#c4dcf4"/><rect x="1" y="3" width="1" height="1" fill="#0000f0"/><rect x="2" y="3" width="7" height="1" fill="#e6f2fc"/><rect x="9" y="3" width="1" height="1" fill="#0000f0"/><rect x="10" y="3" width="1" height="1" fill="#c4dcf4"/><rect x="0" y="4" width="1" height="1" fill="#c4dcf4"/><rect x="1" y="4" width="1" height="1" fill="#0000f0"/><rect x="2" y="4" width="3" height="1" fill="#e6f2fc"/><rect x="5" y="4" width="1" height="1" fill="#000000"/><rect x="6" y="4" width="3" height="1" fill="#e6f2fc"/><rect x="9" y="4" width="1" height="1" fill="#0000f0"/><rect x="10" y="4" width="1" height="1" fill="#c4dcf4"/><rect x="0" y="5" width="1" height="1" fill="#c4dcf4"/><rect x="1" y="5" width="1" height="1" fill="#0000f0"/><rect x="2" y="5" width="3" height="1" fill="#e6f2fc"/><rect x="5" y="5" width="1" height="1" fill="#000000"/><rect x="6" y="5" width="3" height="1" fill="#e6f2fc"/><rect x="9" y="5" width="1" height="1" fill="#0000f0"/><rect x="10" y="5" width="1" height="1" fill="#c4dcf4"/><rect x="0" y="6" width="1" height="1" fill="#c4dcf4"/><rect x="1" y="6" width="1" height="1" fill="#0000f0"/><rect x="2" y="6" width="1" height="1" fill="#e6f2fc"/><rect x="3" y="6" width="5" height="1" fill="#000000"/><rect x="8" y="6" width="1" height="1" fill="#e6f2fc"/><rect x="9" y="6" width="1" height="1" fill="#0000f0"/><rect x="10" y="6" width="1" height="1" fill="#c4dcf4"/><rect x="0" y="7" width="1" height="1" fill="#c4dcf4"/><rect x="1" y="7" width="1" height="1" fill="#0000f0"/><rect x="2" y="7" width="3" height="1" fill="#e6f2fc"/><rect x="5" y="7" width="1" height="1" fill="#000000"/><rect x="6" y="7" width="3" height="1" fill="#e6f2fc"/><rect x="9" y="7" width="1" height="1" fill="#0000f0"/><rect x="10" y="7" width="1" height="1" fill="#c4dcf4"/><rect x="0" y="8" width="1" height="1" fill="#c4dcf4"/><rect x="1" y="8" width="1" height="1" fill="#0000f0"/><rect x="2" y="8" width="3" height="1" fill="#e6f2fc"/><rect x="5" y="8" width="1" height="1" fill="#000000"/><rect x="6" y="8" width="3" height="1" fill="#e6f2fc"/><rect x="9" y="8" width="1" height="1" fill="#0000f0"/><rect x="10" y="8" width="1" height="1" fill="#c4dcf4"/><rect x="0" y="9" width="1" height="1" fill="#c4dcf4"/><rect x="1" y="9" width="1" height="1" fill="#0000f0"/><rect x="2" y="9" width="7" height="1" fill="#e6f2fc"/><rect x="9" y="9" width="1" height="1" fill="#0000f0"/><rect x="10" y="9" width="1" height="1" fill="#c4dcf4"/><rect x="0" y="10" width="1" height="1" fill="#c4dcf4"/><rect x="2" y="10" width="7" height="1" fill="#0000f0"/><rect x="10" y="10" width="1" height="1" fill="#c4dcf4"/><rect x="1" y="11" width="1" height="1" fill="#c4dcf4"/><rect x="9" y="11" width="1" height="1" fill="#c4dcf4"/><rect x="2" y="12" width="7" height="1" fill="#c4dcf4"/></svg>
<div style="left:28px;top:292px;width:1px;height:1px;background:#555;"></div>
<div style="left:28px;top:294px;width:1px;height:1px;background:#555;"></div>
<div style="left:34px;top:301px;width:1px;height:1px;background:#555;"></div>
<div style="left:36px;top:301px;width:1px;height:1px;background:#555;"></div>
<div style="left:38px;top:301px;width:1px;height:1px;background:#555;"></div>
<svg style="left:40px;top:292px;shape-rendering:auto" width="16" height="15" viewBox="0 0 16 15" shape-rendering="crispEdges"><rect x="0.5" y="0.5" width="15" height="14" fill="#f8d890" stroke="#e0a040"/><rect x="2" y="2" width="12" height="11" fill="#f8dca0"/></svg>
<div class="t" style="left:253.81px;top:294.00px;font-size:12px;color:#000;font-weight:normal;transform:scaleX(0.9000);transform-origin:0 0;">929,0 MB</div>
<div class="t" style="left:367.53px;top:294.00px;font-size:12px;color:#000;font-weight:normal;transform:scaleX(0.9000);transform-origin:0 0;">2.11 %</div>
<div style="left:396px;top:307px;width:4px;height:2px;background:#3db54a;"></div>
<div class="t" style="left:488.02px;top:294.00px;font-size:12px;color:#000;font-weight:normal;transform:scaleX(0.9000);transform-origin:0 0;">81</div>
<div class="t" style="left:594.33px;top:294.00px;font-size:12px;color:#000;font-weight:normal;transform:scaleX(0.9000);transform-origin:0 0;">0</div>
<div style="left:2px;top:310px;width:671px;height:1px;background:#dcdcdc;"></div>
<div class="t" style="left:56.27px;top:313.00px;font-size:12px;color:#000;font-weight:normal;transform:scaleX(1.0070);transform-origin:0 0;">*.cab</div>
<svg style="left:23px;top:314px;" width="11" height="13" viewBox="0 0 11 13" shape-rendering="crispEdges"><rect x="2" y="0" width="7" height="1" fill="#c4dcf4"/><rect x="1" y="1" width="1" height="1" fill="#c4dcf4"/><rect x="9" y="1" width="1" height="1" fill="#c4dcf4"/><rect x="0" y="2" width="1" height="1" fill="#c4dcf4"/><rect x="2" y="2" width="7" height="1" fill="#0000f0"/><rect x="10" y="2" width="1" height="1" fill="#c4dcf4"/><rect x="0" y="3" width="1" height="1" fill="#c4dcf4"/><rect x="1" y="3" width="1" height="1" fill="#0000f0"/><rect x="2" y="3" width="7" height="1" fill="#e6f2fc"/><rect x="9" y="3" width="1" height="1" fill="#0000f0"/><rect x="10" y="3" width="1" height="1" fill="#c4dcf4"/><rect x="0" y="4" width="1" height="1" fill="#c4dcf4"/><rect x="1" y="4" width="1" height="1" fill="#0000f0"/><rect x="2" y="4" width="3" height="1" fill="#e6f2fc"/><rect x="5" y="4" width="1" height="1" fill="#000000"/><rect x="6" y="4" width="3" height="1" fill="#e6f2fc"/><rect x="9" y="4" width="1" height="1" fill="#0000f0"/><rect x="10" y="4" width="1" height="1" fill="#c4dcf4"/><rect x="0" y="5" width="1" height="1" fill="#c4dcf4"/><rect x="1" y="5" width="1" height="1" fill="#0000f0"/><rect x="2" y="5" width="3" height="1" fill="#e6f2fc"/><rect x="5" y="5" width="1" height="1" fill="#000000"/><rect x="6" y="5" width="3" height="1" fill="#e6f2fc"/><rect x="9" y="5" width="1" height="1" fill="#0000f0"/><rect x="10" y="5" width="1" height="1" fill="#c4dcf4"/><rect x="0" y="6" width="1" height="1" fill="#c4dcf4"/><rect x="1" y="6" width="1" height="1" fill="#0000f0"/><rect x="2" y="6" width="1" height="1" fill="#e6f2fc"/><rect x="3" y="6" width="5" height="1" fill="#000000"/><rect x="8" y="6" width="1" height="1" fill="#e6f2fc"/><rect x="9" y="6" width="1" height="1" fill="#0000f0"/><rect x="10" y="6" width="1" height="1" fill="#c4dcf4"/><rect x="0" y="7" width="1" height="1" fill="#c4dcf4"/><rect x="1" y="7" width="1" height="1" fill="#0000f0"/><rect x="2" y="7" width="3" height="1" fill="#e6f2fc"/><rect x="5" y="7" width="1" height="1" fill="#000000"/><rect x="6" y="7" width="3" height="1" fill="#e6f2fc"/><rect x="9" y="7" width="1" height="1" fill="#0000f0"/><rect x="10" y="7" width="1" height="1" fill="#c4dcf4"/><rect x="0" y="8" width="1" height="1" fill="#c4dcf4"/><rect x="1" y="8" width="1" height="1" fill="#0000f0"/><rect x="2" y="8" width="3" height="1" fill="#e6f2fc"/><rect x="5" y="8" width="1" height="1" fill="#000000"/><rect x="6" y="8" width="3" height="1" fill="#e6f2fc"/><rect x="9" y="8" width="1" height="1" fill="#0000f0"/><rect x="10" y="8" width="1" height="1" fill="#c4dcf4"/><rect x="0" y="9" width="1" height="1" fill="#c4dcf4"/><rect x="1" y="9" width="1" height="1" fill="#0000f0"/><rect x="2" y="9" width="7" height="1" fill="#e6f2fc"/><rect x="9" y="9" width="1" height="1" fill="#0000f0"/><rect x="10" y="9" width="1" height="1" fill="#c4dcf4"/><rect x="0" y="10" width="1" height="1" fill="#c4dcf4"/><rect x="2" y="10" width="7" height="1" fill="#0000f0"/><rect x="10" y="10" width="1" height="1" fill="#c4dcf4"/><rect x="1" y="11" width="1" height="1" fill="#c4dcf4"/><rect x="9" y="11" width="1" height="1" fill="#c4dcf4"/><rect x="2" y="12" width="7" height="1" fill="#c4dcf4"/></svg>
<div style="left:28px;top:311px;width:1px;height:1px;background:#555;"></div>
<div style="left:28px;top:313px;width:1px;height:1px;background:#555;"></div>
<div style="left:34px;top:320px;width:1px;height:1px;background:#555;"></div>
<div style="left:36px;top:320px;width:1px;height:1px;background:#555;"></div>
<div style="left:38px;top:320px;width:1px;height:1px;background:#555;"></div>
<svg style="left:40px;top:311px;shape-rendering:auto" width="16" height="15" viewBox="0 0 16 15" shape-rendering="crispEdges"><rect x="0.5" y="0.5" width="15" height="14" fill="#f8d890" stroke="#e0a040"/><rect x="2" y="2" width="12" height="11" fill="#f8dca0"/></svg>
<div class="t" style="left:253.81px;top:313.00px;font-size:12px;color:#000;font-weight:normal;transform:scaleX(0.9000);transform-origin:0 0;">912,0 MB</div>
<div class="t" style="left:366.72px;top:313.00px;font-size:12px;color:#000;font-weight:normal;transform:scaleX(0.9000);transform-origin:0 0;">2.07 %</div>
<div style="left:396px;top:326px;width:4px;height:2px;background:#3db54a;"></div>
<div class="t" style="left:482.02px;top:313.00px;font-size:12px;color:#000;font-weight:normal;transform:scaleX(0.9000);transform-origin:0 0;">780</div>
<div class="t" style="left:594.33px;top:313.00px;font-size:12px;color:#000;font-weight:normal;transform:scaleX(0.9000);transform-origin:0 0;">0</div>
<div style="left:2px;top:329px;width:671px;height:1px;background:#dcdcdc;"></div>
<div class="t" style="left:56.24px;top:332.00px;font-size:12px;color:#000;font-weight:normal;transform:scaleX(1.0621);transform-origin:0 0;">*.msi</div>
<svg style="left:23px;top:333px;" width="11" height="13" viewBox="0 0 11 13" shape-rendering="crispEdges"><rect x="2" y="0" width="7" height="1" fill="#c4dcf4"/><rect x="1" y="1" width="1" height="1" fill="#c4dcf4"/><rect x="9" y="1" width="1" height="1" fill="#c4dcf4"/><rect x="0" y="2" width="1" height="1" fill="#c4dcf4"/><rect x="2" y="2" width="7" height="1" fill="#0000f0"/><rect x="10" y="2" width="1" height="1" fill="#c4dcf4"/><rect x="0" y="3" width="1" height="1" fill="#c4dcf4"/><rect x="1" y="3" width="1" height="1" fill="#0000f0"/><rect x="2" y="3" width="7" height="1" fill="#e6f2fc"/><rect x="9" y="3" width="1" height="1" fill="#0000f0"/><rect x="10" y="3" width="1" height="1" fill="#c4dcf4"/><rect x="0" y="4" width="1" height="1" fill="#c4dcf4"/><rect x="1" y="4" width="1" height="1" fill="#0000f0"/><rect x="2" y="4" width="3" height="1" fill="#e6f2fc"/><rect x="5" y="4" width="1" height="1" fill="#000000"/><rect x="6" y="4" width="3" height="1" fill="#e6f2fc"/><rect x="9" y="4" width="1" height="1" fill="#0000f0"/><rect x="10" y="4" width="1" height="1" fill="#c4dcf4"/><rect x="0" y="5" width="1" height="1" fill="#c4dcf4"/><rect x="1" y="5" width="1" height="1" fill="#0000f0"/><rect x="2" y="5" width="3" height="1" fill="#e6f2fc"/><rect x="5" y="5" width="1" height="1" fill="#000000"/><rect x="6" y="5" width="3" height="1" fill="#e6f2fc"/><rect x="9" y="5" width="1" height="1" fill="#0000f0"/><rect x="10" y="5" width="1" height="1" fill="#c4dcf4"/><rect x="0" y="6" width="1" height="1" fill="#c4dcf4"/><rect x="1" y="6" width="1" height="1" fill="#0000f0"/><rect x="2" y="6" width="1" height="1" fill="#e6f2fc"/><rect x="3" y="6" width="5" height="1" fill="#000000"/><rect x="8" y="6" width="1" height="1" fill="#e6f2fc"/><rect x="9" y="6" width="1" height="1" fill="#0000f0"/><rect x="10" y="6" width="1" height="1" fill="#c4dcf4"/><rect x="0" y="7" width="1" height="1" fill="#c4dcf4"/><rect x="1" y="7" width="1" height="1" fill="#0000f0"/><rect x="2" y="7" width="3" height="1" fill="#e6f2fc"/><rect x="5" y="7" width="1" height="1" fill="#000000"/><rect x="6" y="7" width="3" height="1" fill="#e6f2fc"/><rect x="9" y="7" width="1" height="1" fill="#0000f0"/><rect x="10" y="7" width="1" height="1" fill="#c4dcf4"/><rect x="0" y="8" width="1" height="1" fill="#c4dcf4"/><rect x="1" y="8" width="1" height="1" fill="#0000f0"/><rect x="2" y="8" width="3" height="1" fill="#e6f2fc"/><rect x="5" y="8" width="1" height="1" fill="#000000"/><rect x="6" y="8" width="3" height="1" fill="#e6f2fc"/><rect x="9" y="8" width="1" height="1" fill="#0000f0"/><rect x="10" y="8" width="1" height="1" fill="#c4dcf4"/><rect x="0" y="9" width="1" height="1" fill="#c4dcf4"/><rect x="1" y="9" width="1" height="1" fill="#0000f0"/><rect x="2" y="9" width="7" height="1" fill="#e6f2fc"/><rect x="9" y="9" width="1" height="1" fill="#0000f0"/><rect x="10" y="9" width="1" height="1" fill="#c4dcf4"/><rect x="0" y="10" width="1" height="1" fill="#c4dcf4"/><rect x="2" y="10" width="7" height="1" fill="#0000f0"/><rect x="10" y="10" width="1" height="1" fill="#c4dcf4"/><rect x="1" y="11" width="1" height="1" fill="#c4dcf4"/><rect x="9" y="11" width="1" height="1" fill="#c4dcf4"/><rect x="2" y="12" width="7" height="1" fill="#c4dcf4"/></svg>
<div style="left:28px;top:330px;width:1px;height:1px;background:#555;"></div>
<div style="left:28px;top:332px;width:1px;height:1px;background:#555;"></div>
<div style="left:34px;top:339px;width:1px;height:1px;background:#555;"></div>
<div style="left:36px;top:339px;width:1px;height:1px;background:#555;"></div>
<div style="left:38px;top:339px;width:1px;height:1px;background:#555;"></div>
<svg style="left:40px;top:330px;shape-rendering:auto" width="16" height="15" viewBox="0 0 16 15" shape-rendering="crispEdges"><rect x="0.5" y="0.5" width="15" height="14" fill="#f8d890" stroke="#e0a040"/><rect x="2" y="2" width="12" height="11" fill="#f8dca0"/></svg>
<div class="t" style="left:253.81px;top:332.00px;font-size:12px;color:#000;font-weight:normal;transform:scaleX(0.9000);transform-origin:0 0;">872,0 MB</div>
<div class="t" style="left:366.72px;top:332.00px;font-size:12px;color:#000;font-weight:normal;transform:scaleX(0.9000);transform-origin:0 0;">1.98 %</div>
<div style="left:396px;top:345px;width:4px;height:2px;background:#3db54a;"></div>
<div class="t" style="left:482.02px;top:332.00px;font-size:12px;color:#000;font-weight:normal;transform:scaleX(0.9000);transform-origin:0 0;">247</div>
<div class="t" style="left:594.33px;top:332.00px;font-size:12px;color:#000;font-weight:normal;transform:scaleX(0.9000);transform-origin:0 0;">0</div>
<div style="left:2px;top:348px;width:671px;height:1px;background:#dcdcdc;"></div>
<div class="t" style="left:56.19px;top:351.00px;font-size:12px;color:#000;font-weight:normal;transform:scaleX(1.1195);transform-origin:0 0;">*.mui</div>
<svg style="left:23px;top:352px;" width="11" height="13" viewBox="0 0 11 13" shape-rendering="crispEdges"><rect x="2" y="0" width="7" height="1" fill="#c4dcf4"/><rect x="1" y="1" width="1" height="1" fill="#c4dcf4"/><rect x="9" y="1" width="1" height="1" fill="#c4dcf4"/><rect x="0" y="2" width="1" height="1" fill="#c4dcf4"/><rect x="2" y="2" width="7" height="1" fill="#0000f0"/><rect x="10" y="2" width="1" height="1" fill="#c4dcf4"/><rect x="0" y="3" width="1" height="1" fill="#c4dcf4"/><rect x="1" y="3" width="1" height="1" fill="#0000f0"/><rect x="2" y="3" width="7" height="1" fill="#e6f2fc"/><rect x="9" y="3" width="1" height="1" fill="#0000f0"/><rect x="10" y="3" width="1" height="1" fill="#c4dcf4"/><rect x="0" y="4" width="1" height="1" fill="#c4dcf4"/><rect x="1" y="4" width="1" height="1" fill="#0000f0"/><rect x="2" y="4" width="3" height="1" fill="#e6f2fc"/><rect x="5" y="4" width="1" height="1" fill="#000000"/><rect x="6" y="4" width="3" height="1" fill="#e6f2fc"/><rect x="9" y="4" width="1" height="1" fill="#0000f0"/><rect x="10" y="4" width="1" height="1" fill="#c4dcf4"/><rect x="0" y="5" width="1" height="1" fill="#c4dcf4"/><rect x="1" y="5" width="1" height="1" fill="#0000f0"/><rect x="2" y="5" width="3" height="1" fill="#e6f2fc"/><rect x="5" y="5" width="1" height="1" fill="#000000"/><rect x="6" y="5" width="3" height="1" fill="#e6f2fc"/><rect x="9" y="5" width="1" height="1" fill="#0000f0"/><rect x="10" y="5" width="1" height="1" fill="#c4dcf4"/><rect x="0" y="6" width="1" height="1" fill="#c4dcf4"/><rect x="1" y="6" width="1" height="1" fill="#0000f0"/><rect x="2" y="6" width="1" height="1" fill="#e6f2fc"/><rect x="3" y="6" width="5" height="1" fill="#000000"/><rect x="8" y="6" width="1" height="1" fill="#e6f2fc"/><rect x="9" y="6" width="1" height="1" fill="#0000f0"/><rect x="10" y="6" width="1" height="1" fill="#c4dcf4"/><rect x="0" y="7" width="1" height="1" fill="#c4dcf4"/><rect x="1" y="7" width="1" height="1" fill="#0000f0"/><rect x="2" y="7" width="3" height="1" fill="#e6f2fc"/><rect x="5" y="7" width="1" height="1" fill="#000000"/><rect x="6" y="7" width="3" height="1" fill="#e6f2fc"/><rect x="9" y="7" width="1" height="1" fill="#0000f0"/><rect x="10" y="7" width="1" height="1" fill="#c4dcf4"/><rect x="0" y="8" width="1" height="1" fill="#c4dcf4"/><rect x="1" y="8" width="1" height="1" fill="#0000f0"/><rect x="2" y="8" width="3" height="1" fill="#e6f2fc"/><rect x="5" y="8" width="1" height="1" fill="#000000"/><rect x="6" y="8" width="3" height="1" fill="#e6f2fc"/><rect x="9" y="8" width="1" height="1" fill="#0000f0"/><rect x="10" y="8" width="1" height="1" fill="#c4dcf4"/><rect x="0" y="9" width="1" height="1" fill="#c4dcf4"/><rect x="1" y="9" width="1" height="1" fill="#0000f0"/><rect x="2" y="9" width="7" height="1" fill="#e6f2fc"/><rect x="9" y="9" width="1" height="1" fill="#0000f0"/><rect x="10" y="9" width="1" height="1" fill="#c4dcf4"/><rect x="0" y="10" width="1" height="1" fill="#c4dcf4"/><rect x="2" y="10" width="7" height="1" fill="#0000f0"/><rect x="10" y="10" width="1" height="1" fill="#c4dcf4"/><rect x="1" y="11" width="1" height="1" fill="#c4dcf4"/><rect x="9" y="11" width="1" height="1" fill="#c4dcf4"/><rect x="2" y="12" width="7" height="1" fill="#c4dcf4"/></svg>
<div style="left:28px;top:349px;width:1px;height:1px;background:#555;"></div>
<div style="left:28px;top:351px;width:1px;height:1px;background:#555;"></div>
<div style="left:34px;top:358px;width:1px;height:1px;background:#555;"></div>
<div style="left:36px;top:358px;width:1px;height:1px;background:#555;"></div>
<div style="left:38px;top:358px;width:1px;height:1px;background:#555;"></div>
<svg style="left:40px;top:349px;shape-rendering:auto" width="16" height="15" viewBox="0 0 16 15" shape-rendering="crispEdges"><rect x="0.5" y="0.5" width="15" height="14" fill="#f8d890" stroke="#e0a040"/><rect x="2" y="2" width="12" height="11" fill="#f8dca0"/></svg>
<div class="t" style="left:253.81px;top:351.00px;font-size:12px;color:#000;font-weight:normal;transform:scaleX(0.9000);transform-origin:0 0;">719,0 MB</div>
<div class="t" style="left:366.72px;top:351.00px;font-size:12px;color:#000;font-weight:normal;transform:scaleX(0.9000);transform-origin:0 0;">1.63 %</div>
<div style="left:397px;top:364px;width:3px;height:2px;background:#3db54a;"></div>
<div class="t" style="left:467.02px;top:351.00px;font-size:12px;color:#000;font-weight:normal;transform:scaleX(0.9000);transform-origin:0 0;">28.053</div>
<div class="t" style="left:594.33px;top:351.00px;font-size:12px;color:#000;font-weight:normal;transform:scaleX(0.9000);transform-origin:0 0;">0</div>
<div style="left:2px;top:367px;width:671px;height:1px;background:#dcdcdc;"></div>
<div class="t" style="left:56.13px;top:370.00px;font-size:12px;color:#000;font-weight:normal;transform:scaleX(1.2066);transform-origin:0 0;">*.ttf</div>
<div style="left:28px;top:372px;width:1px;height:1px;background:#555;"></div>
<div style="left:28px;top:374px;width:1px;height:1px;background:#555;"></div>
<div style="left:28px;top:368px;width:1px;height:1px;background:#555;"></div>
<div style="left:28px;top:370px;width:1px;height:1px;background:#555;"></div>
<div style="left:34px;top:377px;width:1px;height:1px;background:#555;"></div>
<div style="left:36px;top:377px;width:1px;height:1px;background:#555;"></div>
<div style="left:38px;top:377px;width:1px;height:1px;background:#555;"></div>
<svg style="left:40px;top:368px;shape-rendering:auto" width="16" height="15" viewBox="0 0 16 15" shape-rendering="crispEdges"><rect x="0.5" y="0.5" width="15" height="14" fill="#f8d890" stroke="#e0a040"/><rect x="2" y="2" width="12" height="11" fill="#f8dca0"/></svg>
<div class="t" style="left:253.81px;top:370.00px;font-size:12px;color:#000;font-weight:normal;transform:scaleX(0.9000);transform-origin:0 0;">543,0 MB</div>
<div class="t" style="left:366.72px;top:370.00px;font-size:12px;color:#000;font-weight:normal;transform:scaleX(0.9000);transform-origin:0 0;">1.23 %</div>
<div style="left:398px;top:383px;width:2px;height:2px;background:#3db54a;"></div>
<div class="t" style="left:473.02px;top:370.00px;font-size:12px;color:#000;font-weight:normal;transform:scaleX(0.9000);transform-origin:0 0;">1.165</div>
<div class="t" style="left:594.33px;top:370.00px;font-size:12px;color:#000;font-weight:normal;transform:scaleX(0.9000);transform-origin:0 0;">0</div>
<svg style="left:1px;top:376px;" width="18" height="15" viewBox="0 0 18 15" shape-rendering="crispEdges"><rect width="18" height="15" fill="url(#nz)"/></svg>
<svg style="left:7px;top:380px;" width="6" height="7" viewBox="0 0 6 7" shape-rendering="crispEdges"><rect x="3" y="0" width="2" height="1" fill="#3a3a3a"/><rect x="2" y="1" width="3" height="1" fill="#3a3a3a"/><rect x="1" y="2" width="3" height="1" fill="#3a3a3a"/><rect x="0" y="3" width="3" height="1" fill="#3a3a3a"/><rect x="1" y="4" width="3" height="1" fill="#3a3a3a"/><rect x="2" y="5" width="3" height="1" fill="#3a3a3a"/><rect x="3" y="6" width="2" height="1" fill="#3a3a3a"/></svg>
<div style="left:19px;top:376px;width:653px;height:15px;background:#d4d4d4;"></div>
</div>
<div style="left:77px;top:192px;width:625px;height:441px;background:#b9d1ea;border-top-left-radius:4px;"></div>
<div style="left:77px;top:192px;width:625px;height:441px;border-left:1px solid #2a1c1c;border-top:1px solid #2a1c1c;border-bottom:1px solid #1a1a1a;border-top-left-radius:4px;"></div>
<div style="left:78px;top:194px;width:624px;height:18px;background:#a3bddb;"></div>
<div style="left:78px;top:631px;width:625px;height:1px;background:#1fc0e0;"></div>
<div style="left:78px;top:630px;width:625px;height:1px;background:#c4d4ea;"></div>
<div style="left:78px;top:330px;width:1px;height:301px;background:#ffffff;"></div>
<div style="left:79px;top:281px;width:5px;height:32px;background:#cfe0f0;"></div>
<div style="left:79px;top:280px;width:5px;height:1px;background:#c8c0b0;"></div>
<div style="left:85px;top:223px;width:617px;height:402px;background:#ffffff;"></div>
<div class="t" style="left:106.59px;top:206.00px;font-size:12px;color:#000;font-weight:normal;transform:scaleX(0.9830);transform-origin:0 0;">Win10pro (C:)</div>
<svg style="left:87px;top:203px;" width="16" height="16" viewBox="0 0 16 16" shape-rendering="crispEdges"><rect x="6" y="0" width="3" height="1" fill="#000"/><rect x="12" y="0" width="3" height="1" fill="#000"/><rect x="4" y="1" width="3" height="1" fill="#000"/><rect x="7" y="1" width="1" height="1" fill="#c84818"/><rect x="8" y="1" width="1" height="1" fill="#000"/><rect x="12" y="1" width="1" height="1" fill="#000"/><rect x="13" y="1" width="1" height="1" fill="#f0a848"/><rect x="14" y="1" width="2" height="1" fill="#000"/><rect x="4" y="2" width="1" height="1" fill="#000"/><rect x="5" y="2" width="1" height="1" fill="#503030"/><rect x="6" y="2" width="1" height="1" fill="#000"/><rect x="7" y="2" width="1" height="1" fill="#c84818"/><rect x="8" y="2" width="3" height="1" fill="#000"/><rect x="12" y="2" width="1" height="1" fill="#000"/><rect x="13" y="2" width="1" height="1" fill="#f0a848"/><rect x="14" y="2" width="1" height="1" fill="#000"/><rect x="2" y="3" width="3" height="1" fill="#000"/><rect x="5" y="3" width="1" height="1" fill="#503030"/><rect x="6" y="3" width="1" height="1" fill="#000"/><rect x="7" y="3" width="1" height="1" fill="#c84818"/><rect x="8" y="3" width="1" height="1" fill="#000"/><rect x="9" y="3" width="1" height="1" fill="#a0a8f0"/><rect x="10" y="3" width="1" height="1" fill="#000"/><rect x="12" y="3" width="1" height="1" fill="#000"/><rect x="13" y="3" width="1" height="1" fill="#f0a848"/><rect x="14" y="3" width="1" height="1" fill="#000"/><rect x="2" y="4" width="1" height="1" fill="#000"/><rect x="3" y="4" width="1" height="1" fill="#30c040"/><rect x="4" y="4" width="1" height="1" fill="#000"/><rect x="5" y="4" width="1" height="1" fill="#503030"/><rect x="6" y="4" width="1" height="1" fill="#000"/><rect x="7" y="4" width="1" height="1" fill="#c84818"/><rect x="8" y="4" width="1" height="1" fill="#000"/><rect x="9" y="4" width="1" height="1" fill="#a0a8f0"/><rect x="10" y="4" width="1" height="1" fill="#000"/><rect x="12" y="4" width="1" height="1" fill="#000"/><rect x="13" y="4" width="1" height="1" fill="#f0a848"/><rect x="14" y="4" width="1" height="1" fill="#000"/><rect x="0" y="5" width="3" height="1" fill="#000"/><rect x="3" y="5" width="1" height="1" fill="#30c040"/><rect x="4" y="5" width="1" height="1" fill="#000"/><rect x="5" y="5" width="1" height="1" fill="#503030"/><rect x="6" y="5" width="1" height="1" fill="#000"/><rect x="7" y="5" width="1" height="1" fill="#c84818"/><rect x="8" y="5" width="1" height="1" fill="#000"/><rect x="9" y="5" width="1" height="1" fill="#a0a8f0"/><rect x="10" y="5" width="3" height="1" fill="#000"/><rect x="13" y="5" width="1" height="1" fill="#f0a848"/><rect x="14" y="5" width="1" height="1" fill="#000"/><rect x="0" y="6" width="1" height="1" fill="#000"/><rect x="1" y="6" width="1" height="1" fill="#1010ff"/><rect x="2" y="6" width="1" height="1" fill="#000"/><rect x="3" y="6" width="1" height="1" fill="#30c040"/><rect x="4" y="6" width="1" height="1" fill="#000"/><rect x="5" y="6" width="1" height="1" fill="#503030"/><rect x="6" y="6" width="1" height="1" fill="#000"/><rect x="7" y="6" width="1" height="1" fill="#c84818"/><rect x="8" y="6" width="1" height="1" fill="#000"/><rect x="9" y="6" width="1" height="1" fill="#a0a8f0"/><rect x="10" y="6" width="1" height="1" fill="#000"/><rect x="11" y="6" width="1" height="1" fill="#c84818"/><rect x="12" y="6" width="1" height="1" fill="#000"/><rect x="13" y="6" width="1" height="1" fill="#f0a848"/><rect x="14" y="6" width="1" height="1" fill="#000"/><rect x="0" y="7" width="1" height="1" fill="#000"/><rect x="1" y="7" width="1" height="1" fill="#1010ff"/><rect x="2" y="7" width="1" height="1" fill="#000"/><rect x="3" y="7" width="1" height="1" fill="#30c040"/><rect x="4" y="7" width="1" height="1" fill="#000"/><rect x="5" y="7" width="1" height="1" fill="#503030"/><rect x="6" y="7" width="1" height="1" fill="#000"/><rect x="7" y="7" width="1" height="1" fill="#c84818"/><rect x="8" y="7" width="1" height="1" fill="#000"/><rect x="9" y="7" width="1" height="1" fill="#a0a8f0"/><rect x="10" y="7" width="1" height="1" fill="#000"/><rect x="11" y="7" width="1" height="1" fill="#c84818"/><rect x="12" y="7" width="1" height="1" fill="#000"/><rect x="13" y="7" width="1" height="1" fill="#f0a848"/><rect x="14" y="7" width="1" height="1" fill="#000"/><rect x="0" y="8" width="1" height="1" fill="#000"/><rect x="1" y="8" width="13" height="1" fill="#c8ccc0"/><rect x="14" y="8" width="1" height="1" fill="#000"/><rect x="0" y="9" width="1" height="1" fill="#000"/><rect x="1" y="9" width="13" height="1" fill="#c8ccc0"/><rect x="14" y="9" width="1" height="1" fill="#000"/><rect x="1" y="10" width="9" height="1" fill="#c8ccc0"/><rect x="10" y="10" width="3" height="1" fill="#30c040"/><rect x="13" y="10" width="1" height="1" fill="#c8ccc0"/><rect x="14" y="10" width="1" height="1" fill="#000"/><rect x="1" y="11" width="13" height="1" fill="#ffffff"/><rect x="14" y="11" width="1" height="1" fill="#000"/><rect x="1" y="12" width="13" height="1" fill="#ffffff"/><rect x="14" y="12" width="1" height="1" fill="#000"/><rect x="1" y="13" width="13" height="1" fill="#ffffff"/><rect x="14" y="13" width="1" height="1" fill="#000"/><rect x="0" y="14" width="1" height="1" fill="#000"/><rect x="1" y="14" width="14" height="1" fill="#707070"/><rect x="15" y="14" width="1" height="1" fill="#000"/></svg>
<div style="left:85px;top:223px;width:617px;height:402px;overflow:hidden;">
<div style="left:0px;top:2px;width:617px;height:4px;background:#ffffff;border:1px solid #a0a0a0;border-right:none;"></div>
<div class="t" style="left:47.97px;top:9.00px;font-size:12px;color:#000;font-weight:normal;transform:scaleX(1.0192);transform-origin:0 0;">Folder</div>
<div class="t" style="left:92.92px;top:9.00px;font-size:12px;color:#000;font-weight:normal;transform:scaleX(1.0860);transform-origin:0 0;">C:\</div>
<div class="t" style="left:56.92px;top:26.00px;font-size:12px;color:#000;font-weight:normal;transform:scaleX(0.9504);transform-origin:0 0;">Search Time: 21,527 sec //  Found:286326 of (61774) Folders &amp; (286326) Files</div>
<div class="t" style="left:46.60px;top:53.00px;font-size:12px;color:#000;font-weight:normal;transform:scaleX(0.9767);transform-origin:0 0;">Include Files</div>
<div class="t" style="left:45.83px;top:76.00px;font-size:12px;color:#000;font-weight:normal;transform:scaleX(0.9323);transform-origin:0 0;">Exclude Files</div>
<div style="left:117px;top:49px;width:300px;height:20px;background:#fff;border:1px solid #7a7a7a;"></div>
<div style="left:117px;top:72px;width:300px;height:20px;background:#fff;border:1px solid #7a7a7a;"></div>
<div class="t" style="left:122.11px;top:53.00px;font-size:12px;color:#000;font-weight:normal;transform:scaleX(1.2377);transform-origin:0 0;">*</div>
<div class="t" style="left:443.72px;top:52.00px;font-size:12px;color:#000;font-weight:normal;transform:scaleX(0.9475);transform-origin:0 0;">Refresh [F5]</div>
<div class="t" style="left:422.28px;top:74.00px;font-size:12px;color:#000;font-weight:normal;transform:scaleX(0.9983);transform-origin:0 0;">to exclude files // eg: thumbs.db,*. ba</div>
<div style="left:0px;top:98px;width:617px;height:4px;background:#ffffff;border:1px solid #a0a0a0;border-right:none;"></div>
<div class="t" style="left:22.60px;top:109.00px;font-size:12px;color:#000;font-weight:normal;transform:scaleX(0.9727);transform-origin:0 0;">Grouping by: File Extension</div>
<svg style="left:7px;top:108px;" width="7" height="11" viewBox="0 0 7 11" shape-rendering="crispEdges"><rect x="0" y="0" width="5" height="1" fill="#000"/><rect x="0" y="1" width="5" height="1" fill="#000"/><rect x="0" y="2" width="5" height="1" fill="#000"/><rect x="1" y="4" width="6" height="1" fill="#b83c12"/><rect x="1" y="5" width="6" height="1" fill="#b83c12"/><rect x="1" y="6" width="6" height="1" fill="#b83c12"/><rect x="2" y="8" width="5" height="1" fill="#b83c12"/><rect x="2" y="9" width="5" height="1" fill="#b83c12"/><rect x="2" y="10" width="5" height="1" fill="#b83c12"/></svg>
<svg style="left:178px;top:106px;shape-rendering:auto" width="14" height="16" viewBox="0 0 14 16" shape-rendering="crispEdges"><path d="M0.5 15.5 V0.5 H9.5 L13.5 4.5 V15.5" fill="#fff" stroke="#a8a8a8"/><path d="M13.5 4.5 V15.5 H0.5" fill="none" stroke="#000"/><path d="M9.5 0.5 V4.5 H13.5" fill="none" stroke="#000"/><path d="M4 7.5 Q4 4.5 7 4.5 L8.5 4.5" fill="none" stroke="#b83c12" stroke-width="1.3"/><path d="M8 2.8 L10 4.5 L8 6.2z" fill="#b83c12"/><path d="M10 9 Q10 12 7 12 L5.5 12" fill="none" stroke="#b83c12" stroke-width="1.3"/><path d="M6 10.3 L4 12 L6 13.7z" fill="#b83c12"/></svg>
<div style="left:199px;top:105px;width:1px;height:19px;background:#8a8a8a;"></div>
<svg style="left:210px;top:108px;shape-rendering:auto" width="12" height="12" viewBox="0 0 12 12" shape-rendering="crispEdges"><path d="M1.5 1.5 L10.5 10.5 M10.5 1.5 L1.5 10.5" stroke="#000" stroke-width="3.2" stroke-linecap="square"/><path d="M1.5 1.5 L10.5 10.5 M10.5 1.5 L1.5 10.5" stroke="#c8440e" stroke-width="1.6" stroke-linecap="square"/></svg>
<div style="left:231px;top:105px;width:1px;height:19px;background:#8a8a8a;"></div>
<div style="left:261px;top:105px;width:1px;height:19px;background:#8a8a8a;"></div>
<svg style="left:271px;top:107px;" width="9" height="15" viewBox="0 0 9 15" shape-rendering="crispEdges"><rect x="0" y="0" width="3" height="1" fill="#a8a8a8"/><rect x="0" y="1" width="1" height="1" fill="#a8a8a8"/><rect x="1" y="1" width="1" height="1" fill="#ffffff"/><rect x="2" y="1" width="1" height="1" fill="#a8a8a8"/><rect x="0" y="2" width="3" height="1" fill="#a8a8a8"/><rect x="1" y="3" width="1" height="1" fill="#a8a8a8"/><rect x="1" y="4" width="1" height="1" fill="#a8a8a8"/><rect x="3" y="4" width="3" height="1" fill="#a8a8a8"/><rect x="1" y="5" width="3" height="1" fill="#a8a8a8"/><rect x="4" y="5" width="1" height="1" fill="#ffffff"/><rect x="5" y="5" width="1" height="1" fill="#a8a8a8"/><rect x="1" y="6" width="1" height="1" fill="#a8a8a8"/><rect x="3" y="6" width="3" height="1" fill="#a8a8a8"/><rect x="1" y="7" width="1" height="1" fill="#a8a8a8"/><rect x="1" y="8" width="1" height="1" fill="#a8a8a8"/><rect x="3" y="8" width="3" height="1" fill="#a8a8a8"/><rect x="1" y="9" width="3" height="1" fill="#a8a8a8"/><rect x="4" y="9" width="1" height="1" fill="#ffffff"/><rect x="5" y="9" width="1" height="1" fill="#a8a8a8"/><rect x="1" y="10" width="1" height="1" fill="#a8a8a8"/><rect x="3" y="10" width="3" height="1" fill="#a8a8a8"/><rect x="1" y="11" width="1" height="1" fill="#a8a8a8"/><rect x="1" y="12" width="1" height="1" fill="#a8a8a8"/><rect x="6" y="12" width="3" height="1" fill="#a8a8a8"/><rect x="1" y="13" width="6" height="1" fill="#a8a8a8"/><rect x="7" y="13" width="1" height="1" fill="#ffffff"/><rect x="8" y="13" width="1" height="1" fill="#a8a8a8"/><rect x="6" y="14" width="3" height="1" fill="#a8a8a8"/></svg>
<svg style="left:278px;top:107px;shape-rendering:auto" width="9" height="12" viewBox="0 0 9 12" shape-rendering="crispEdges"><text x="0.3" y="10" font-family="Liberation Sans" font-weight="bold" font-size="12" fill="#a4a4a4">0</text></svg>
<svg style="left:294px;top:107px;" width="9" height="15" viewBox="0 0 9 15" shape-rendering="crispEdges"><rect x="0" y="0" width="3" height="1" fill="#a8a8a8"/><rect x="0" y="1" width="1" height="1" fill="#a8a8a8"/><rect x="1" y="1" width="1" height="1" fill="#ffffff"/><rect x="2" y="1" width="1" height="1" fill="#a8a8a8"/><rect x="0" y="2" width="3" height="1" fill="#a8a8a8"/><rect x="1" y="3" width="1" height="1" fill="#a8a8a8"/><rect x="1" y="4" width="1" height="1" fill="#a8a8a8"/><rect x="3" y="4" width="3" height="1" fill="#a8a8a8"/><rect x="1" y="5" width="3" height="1" fill="#a8a8a8"/><rect x="4" y="5" width="1" height="1" fill="#ffffff"/><rect x="5" y="5" width="1" height="1" fill="#a8a8a8"/><rect x="1" y="6" width="1" height="1" fill="#a8a8a8"/><rect x="3" y="6" width="3" height="1" fill="#a8a8a8"/><rect x="1" y="7" width="1" height="1" fill="#a8a8a8"/><rect x="1" y="8" width="1" height="1" fill="#a8a8a8"/><rect x="3" y="8" width="3" height="1" fill="#a8a8a8"/><rect x="1" y="9" width="3" height="1" fill="#a8a8a8"/><rect x="4" y="9" width="1" height="1" fill="#ffffff"/><rect x="5" y="9" width="1" height="1" fill="#a8a8a8"/><rect x="1" y="10" width="1" height="1" fill="#a8a8a8"/><rect x="3" y="10" width="3" height="1" fill="#a8a8a8"/><rect x="1" y="11" width="1" height="1" fill="#a8a8a8"/><rect x="1" y="12" width="1" height="1" fill="#a8a8a8"/><rect x="6" y="12" width="3" height="1" fill="#a8a8a8"/><rect x="1" y="13" width="6" height="1" fill="#a8a8a8"/><rect x="7" y="13" width="1" height="1" fill="#ffffff"/><rect x="8" y="13" width="1" height="1" fill="#a8a8a8"/><rect x="6" y="14" width="3" height="1" fill="#a8a8a8"/></svg>
<svg style="left:301px;top:107px;shape-rendering:auto" width="9" height="12" viewBox="0 0 9 12" shape-rendering="crispEdges"><text x="0.3" y="10" font-family="Liberation Sans" font-weight="bold" font-size="12" fill="#a4a4a4">1</text></svg>
<svg style="left:317px;top:107px;" width="9" height="15" viewBox="0 0 9 15" shape-rendering="crispEdges"><rect x="0" y="0" width="3" height="1" fill="#a8a8a8"/><rect x="0" y="1" width="1" height="1" fill="#a8a8a8"/><rect x="1" y="1" width="1" height="1" fill="#ffffff"/><rect x="2" y="1" width="1" height="1" fill="#a8a8a8"/><rect x="0" y="2" width="3" height="1" fill="#a8a8a8"/><rect x="1" y="3" width="1" height="1" fill="#a8a8a8"/><rect x="1" y="4" width="1" height="1" fill="#a8a8a8"/><rect x="3" y="4" width="3" height="1" fill="#a8a8a8"/><rect x="1" y="5" width="3" height="1" fill="#a8a8a8"/><rect x="4" y="5" width="1" height="1" fill="#ffffff"/><rect x="5" y="5" width="1" height="1" fill="#a8a8a8"/><rect x="1" y="6" width="1" height="1" fill="#a8a8a8"/><rect x="3" y="6" width="3" height="1" fill="#a8a8a8"/><rect x="1" y="7" width="1" height="1" fill="#a8a8a8"/><rect x="1" y="8" width="1" height="1" fill="#a8a8a8"/><rect x="3" y="8" width="3" height="1" fill="#a8a8a8"/><rect x="1" y="9" width="3" height="1" fill="#a8a8a8"/><rect x="4" y="9" width="1" height="1" fill="#ffffff"/><rect x="5" y="9" width="1" height="1" fill="#a8a8a8"/><rect x="1" y="10" width="1" height="1" fill="#a8a8a8"/><rect x="3" y="10" width="3" height="1" fill="#a8a8a8"/><rect x="1" y="11" width="1" height="1" fill="#a8a8a8"/><rect x="1" y="12" width="1" height="1" fill="#a8a8a8"/><rect x="6" y="12" width="3" height="1" fill="#a8a8a8"/><rect x="1" y="13" width="6" height="1" fill="#a8a8a8"/><rect x="7" y="13" width="1" height="1" fill="#ffffff"/><rect x="8" y="13" width="1" height="1" fill="#a8a8a8"/><rect x="6" y="14" width="3" height="1" fill="#a8a8a8"/></svg>
<svg style="left:324px;top:107px;shape-rendering:auto" width="9" height="12" viewBox="0 0 9 12" shape-rendering="crispEdges"><text x="0.3" y="10" font-family="Liberation Sans" font-weight="bold" font-size="12" fill="#a4a4a4">2</text></svg>
<svg style="left:340px;top:107px;" width="9" height="15" viewBox="0 0 9 15" shape-rendering="crispEdges"><rect x="0" y="0" width="3" height="1" fill="#a8a8a8"/><rect x="0" y="1" width="1" height="1" fill="#a8a8a8"/><rect x="1" y="1" width="1" height="1" fill="#ffffff"/><rect x="2" y="1" width="1" height="1" fill="#a8a8a8"/><rect x="0" y="2" width="3" height="1" fill="#a8a8a8"/><rect x="1" y="3" width="1" height="1" fill="#a8a8a8"/><rect x="1" y="4" width="1" height="1" fill="#a8a8a8"/><rect x="3" y="4" width="3" height="1" fill="#a8a8a8"/><rect x="1" y="5" width="3" height="1" fill="#a8a8a8"/><rect x="4" y="5" width="1" height="1" fill="#ffffff"/><rect x="5" y="5" width="1" height="1" fill="#a8a8a8"/><rect x="1" y="6" width="1" height="1" fill="#a8a8a8"/><rect x="3" y="6" width="3" height="1" fill="#a8a8a8"/><rect x="1" y="7" width="1" height="1" fill="#a8a8a8"/><rect x="1" y="8" width="1" height="1" fill="#a8a8a8"/><rect x="3" y="8" width="3" height="1" fill="#a8a8a8"/><rect x="1" y="9" width="3" height="1" fill="#a8a8a8"/><rect x="4" y="9" width="1" height="1" fill="#ffffff"/><rect x="5" y="9" width="1" height="1" fill="#a8a8a8"/><rect x="1" y="10" width="1" height="1" fill="#a8a8a8"/><rect x="3" y="10" width="3" height="1" fill="#a8a8a8"/><rect x="1" y="11" width="1" height="1" fill="#a8a8a8"/><rect x="1" y="12" width="1" height="1" fill="#a8a8a8"/><rect x="6" y="12" width="3" height="1" fill="#a8a8a8"/><rect x="1" y="13" width="6" height="1" fill="#a8a8a8"/><rect x="7" y="13" width="1" height="1" fill="#ffffff"/><rect x="8" y="13" width="1" height="1" fill="#a8a8a8"/><rect x="6" y="14" width="3" height="1" fill="#a8a8a8"/></svg>
<svg style="left:347px;top:107px;shape-rendering:auto" width="9" height="12" viewBox="0 0 9 12" shape-rendering="crispEdges"><text x="0.3" y="10" font-family="Liberation Sans" font-weight="bold" font-size="12" fill="#a4a4a4">3</text></svg>
<svg style="left:363px;top:107px;" width="9" height="15" viewBox="0 0 9 15" shape-rendering="crispEdges"><rect x="0" y="0" width="3" height="1" fill="#a8a8a8"/><rect x="0" y="1" width="1" height="1" fill="#a8a8a8"/><rect x="1" y="1" width="1" height="1" fill="#ffffff"/><rect x="2" y="1" width="1" height="1" fill="#a8a8a8"/><rect x="0" y="2" width="3" height="1" fill="#a8a8a8"/><rect x="1" y="3" width="1" height="1" fill="#a8a8a8"/><rect x="1" y="4" width="1" height="1" fill="#a8a8a8"/><rect x="3" y="4" width="3" height="1" fill="#a8a8a8"/><rect x="1" y="5" width="3" height="1" fill="#a8a8a8"/><rect x="4" y="5" width="1" height="1" fill="#ffffff"/><rect x="5" y="5" width="1" height="1" fill="#a8a8a8"/><rect x="1" y="6" width="1" height="1" fill="#a8a8a8"/><rect x="3" y="6" width="3" height="1" fill="#a8a8a8"/><rect x="1" y="7" width="1" height="1" fill="#a8a8a8"/><rect x="1" y="8" width="1" height="1" fill="#a8a8a8"/><rect x="3" y="8" width="3" height="1" fill="#a8a8a8"/><rect x="1" y="9" width="3" height="1" fill="#a8a8a8"/><rect x="4" y="9" width="1" height="1" fill="#ffffff"/><rect x="5" y="9" width="1" height="1" fill="#a8a8a8"/><rect x="1" y="10" width="1" height="1" fill="#a8a8a8"/><rect x="3" y="10" width="3" height="1" fill="#a8a8a8"/><rect x="1" y="11" width="1" height="1" fill="#a8a8a8"/><rect x="1" y="12" width="1" height="1" fill="#a8a8a8"/><rect x="6" y="12" width="3" height="1" fill="#a8a8a8"/><rect x="1" y="13" width="6" height="1" fill="#a8a8a8"/><rect x="7" y="13" width="1" height="1" fill="#ffffff"/><rect x="8" y="13" width="1" height="1" fill="#a8a8a8"/><rect x="6" y="14" width="3" height="1" fill="#a8a8a8"/></svg>
<svg style="left:370px;top:107px;shape-rendering:auto" width="9" height="12" viewBox="0 0 9 12" shape-rendering="crispEdges"><text x="0.3" y="10" font-family="Liberation Sans" font-weight="bold" font-size="12" fill="#a4a4a4">4</text></svg>
<svg style="left:386px;top:107px;" width="9" height="15" viewBox="0 0 9 15" shape-rendering="crispEdges"><rect x="0" y="0" width="3" height="1" fill="#a8a8a8"/><rect x="0" y="1" width="1" height="1" fill="#a8a8a8"/><rect x="1" y="1" width="1" height="1" fill="#ffffff"/><rect x="2" y="1" width="1" height="1" fill="#a8a8a8"/><rect x="0" y="2" width="3" height="1" fill="#a8a8a8"/><rect x="1" y="3" width="1" height="1" fill="#a8a8a8"/><rect x="1" y="4" width="1" height="1" fill="#a8a8a8"/><rect x="3" y="4" width="3" height="1" fill="#a8a8a8"/><rect x="1" y="5" width="3" height="1" fill="#a8a8a8"/><rect x="4" y="5" width="1" height="1" fill="#ffffff"/><rect x="5" y="5" width="1" height="1" fill="#a8a8a8"/><rect x="1" y="6" width="1" height="1" fill="#a8a8a8"/><rect x="3" y="6" width="3" height="1" fill="#a8a8a8"/><rect x="1" y="7" width="1" height="1" fill="#a8a8a8"/><rect x="1" y="8" width="1" height="1" fill="#a8a8a8"/><rect x="3" y="8" width="3" height="1" fill="#a8a8a8"/><rect x="1" y="9" width="3" height="1" fill="#a8a8a8"/><rect x="4" y="9" width="1" height="1" fill="#ffffff"/><rect x="5" y="9" width="1" height="1" fill="#a8a8a8"/><rect x="1" y="10" width="1" height="1" fill="#a8a8a8"/><rect x="3" y="10" width="3" height="1" fill="#a8a8a8"/><rect x="1" y="11" width="1" height="1" fill="#a8a8a8"/><rect x="1" y="12" width="1" height="1" fill="#a8a8a8"/><rect x="6" y="12" width="3" height="1" fill="#a8a8a8"/><rect x="1" y="13" width="6" height="1" fill="#a8a8a8"/><rect x="7" y="13" width="1" height="1" fill="#ffffff"/><rect x="8" y="13" width="1" height="1" fill="#a8a8a8"/><rect x="6" y="14" width="3" height="1" fill="#a8a8a8"/></svg>
<svg style="left:393px;top:107px;shape-rendering:auto" width="9" height="12" viewBox="0 0 9 12" shape-rendering="crispEdges"><text x="0.3" y="10" font-family="Liberation Sans" font-weight="bold" font-size="12" fill="#a4a4a4">5</text></svg>
<svg style="left:409px;top:107px;" width="9" height="15" viewBox="0 0 9 15" shape-rendering="crispEdges"><rect x="0" y="0" width="3" height="1" fill="#a8a8a8"/><rect x="0" y="1" width="1" height="1" fill="#a8a8a8"/><rect x="1" y="1" width="1" height="1" fill="#ffffff"/><rect x="2" y="1" width="1" height="1" fill="#a8a8a8"/><rect x="0" y="2" width="3" height="1" fill="#a8a8a8"/><rect x="1" y="3" width="1" height="1" fill="#a8a8a8"/><rect x="1" y="4" width="1" height="1" fill="#a8a8a8"/><rect x="3" y="4" width="3" height="1" fill="#a8a8a8"/><rect x="1" y="5" width="3" height="1" fill="#a8a8a8"/><rect x="4" y="5" width="1" height="1" fill="#ffffff"/><rect x="5" y="5" width="1" height="1" fill="#a8a8a8"/><rect x="1" y="6" width="1" height="1" fill="#a8a8a8"/><rect x="3" y="6" width="3" height="1" fill="#a8a8a8"/><rect x="1" y="7" width="1" height="1" fill="#a8a8a8"/><rect x="1" y="8" width="1" height="1" fill="#a8a8a8"/><rect x="3" y="8" width="3" height="1" fill="#a8a8a8"/><rect x="1" y="9" width="3" height="1" fill="#a8a8a8"/><rect x="4" y="9" width="1" height="1" fill="#ffffff"/><rect x="5" y="9" width="1" height="1" fill="#a8a8a8"/><rect x="1" y="10" width="1" height="1" fill="#a8a8a8"/><rect x="3" y="10" width="3" height="1" fill="#a8a8a8"/><rect x="1" y="11" width="1" height="1" fill="#a8a8a8"/><rect x="1" y="12" width="1" height="1" fill="#a8a8a8"/><rect x="6" y="12" width="3" height="1" fill="#a8a8a8"/><rect x="1" y="13" width="6" height="1" fill="#a8a8a8"/><rect x="7" y="13" width="1" height="1" fill="#ffffff"/><rect x="8" y="13" width="1" height="1" fill="#a8a8a8"/><rect x="6" y="14" width="3" height="1" fill="#a8a8a8"/></svg>
<svg style="left:416px;top:107px;shape-rendering:auto" width="9" height="12" viewBox="0 0 9 12" shape-rendering="crispEdges"><text x="0.3" y="10" font-family="Liberation Sans" font-weight="bold" font-size="12" fill="#a4a4a4">6</text></svg>
<svg style="left:432px;top:107px;" width="9" height="15" viewBox="0 0 9 15" shape-rendering="crispEdges"><rect x="0" y="0" width="3" height="1" fill="#a8a8a8"/><rect x="0" y="1" width="1" height="1" fill="#a8a8a8"/><rect x="1" y="1" width="1" height="1" fill="#ffffff"/><rect x="2" y="1" width="1" height="1" fill="#a8a8a8"/><rect x="0" y="2" width="3" height="1" fill="#a8a8a8"/><rect x="1" y="3" width="1" height="1" fill="#a8a8a8"/><rect x="1" y="4" width="1" height="1" fill="#a8a8a8"/><rect x="3" y="4" width="3" height="1" fill="#a8a8a8"/><rect x="1" y="5" width="3" height="1" fill="#a8a8a8"/><rect x="4" y="5" width="1" height="1" fill="#ffffff"/><rect x="5" y="5" width="1" height="1" fill="#a8a8a8"/><rect x="1" y="6" width="1" height="1" fill="#a8a8a8"/><rect x="3" y="6" width="3" height="1" fill="#a8a8a8"/><rect x="1" y="7" width="1" height="1" fill="#a8a8a8"/><rect x="1" y="8" width="1" height="1" fill="#a8a8a8"/><rect x="3" y="8" width="3" height="1" fill="#a8a8a8"/><rect x="1" y="9" width="3" height="1" fill="#a8a8a8"/><rect x="4" y="9" width="1" height="1" fill="#ffffff"/><rect x="5" y="9" width="1" height="1" fill="#a8a8a8"/><rect x="1" y="10" width="1" height="1" fill="#a8a8a8"/><rect x="3" y="10" width="3" height="1" fill="#a8a8a8"/><rect x="1" y="11" width="1" height="1" fill="#a8a8a8"/><rect x="1" y="12" width="1" height="1" fill="#a8a8a8"/><rect x="6" y="12" width="3" height="1" fill="#a8a8a8"/><rect x="1" y="13" width="6" height="1" fill="#a8a8a8"/><rect x="7" y="13" width="1" height="1" fill="#ffffff"/><rect x="8" y="13" width="1" height="1" fill="#a8a8a8"/><rect x="6" y="14" width="3" height="1" fill="#a8a8a8"/></svg>
<svg style="left:439px;top:107px;shape-rendering:auto" width="9" height="12" viewBox="0 0 9 12" shape-rendering="crispEdges"><text x="0.3" y="10" font-family="Liberation Sans" font-weight="bold" font-size="12" fill="#a4a4a4">7</text></svg>
<svg style="left:454px;top:107px;" width="9" height="15" viewBox="0 0 9 15" shape-rendering="crispEdges"><rect x="0" y="0" width="3" height="1" fill="#a8a8a8"/><rect x="0" y="1" width="1" height="1" fill="#a8a8a8"/><rect x="1" y="1" width="1" height="1" fill="#ffffff"/><rect x="2" y="1" width="1" height="1" fill="#a8a8a8"/><rect x="0" y="2" width="3" height="1" fill="#a8a8a8"/><rect x="1" y="3" width="1" height="1" fill="#a8a8a8"/><rect x="1" y="4" width="1" height="1" fill="#a8a8a8"/><rect x="3" y="4" width="3" height="1" fill="#a8a8a8"/><rect x="1" y="5" width="3" height="1" fill="#a8a8a8"/><rect x="4" y="5" width="1" height="1" fill="#ffffff"/><rect x="5" y="5" width="1" height="1" fill="#a8a8a8"/><rect x="1" y="6" width="1" height="1" fill="#a8a8a8"/><rect x="3" y="6" width="3" height="1" fill="#a8a8a8"/><rect x="1" y="7" width="1" height="1" fill="#a8a8a8"/><rect x="1" y="8" width="1" height="1" fill="#a8a8a8"/><rect x="3" y="8" width="3" height="1" fill="#a8a8a8"/><rect x="1" y="9" width="3" height="1" fill="#a8a8a8"/><rect x="4" y="9" width="1" height="1" fill="#ffffff"/><rect x="5" y="9" width="1" height="1" fill="#a8a8a8"/><rect x="1" y="10" width="1" height="1" fill="#a8a8a8"/><rect x="3" y="10" width="3" height="1" fill="#a8a8a8"/><rect x="1" y="11" width="1" height="1" fill="#a8a8a8"/><rect x="1" y="12" width="1" height="1" fill="#a8a8a8"/><rect x="6" y="12" width="3" height="1" fill="#a8a8a8"/><rect x="1" y="13" width="6" height="1" fill="#a8a8a8"/><rect x="7" y="13" width="1" height="1" fill="#ffffff"/><rect x="8" y="13" width="1" height="1" fill="#a8a8a8"/><rect x="6" y="14" width="3" height="1" fill="#a8a8a8"/></svg>
<svg style="left:461px;top:107px;shape-rendering:auto" width="9" height="12" viewBox="0 0 9 12" shape-rendering="crispEdges"><text x="0.3" y="10" font-family="Liberation Sans" font-weight="bold" font-size="12" fill="#a4a4a4">8</text></svg>
<svg style="left:477px;top:107px;" width="9" height="15" viewBox="0 0 9 15" shape-rendering="crispEdges"><rect x="0" y="0" width="3" height="1" fill="#a8a8a8"/><rect x="0" y="1" width="1" height="1" fill="#a8a8a8"/><rect x="1" y="1" width="1" height="1" fill="#ffffff"/><rect x="2" y="1" width="1" height="1" fill="#a8a8a8"/><rect x="0" y="2" width="3" height="1" fill="#a8a8a8"/><rect x="1" y="3" width="1" height="1" fill="#a8a8a8"/><rect x="1" y="4" width="1" height="1" fill="#a8a8a8"/><rect x="3" y="4" width="3" height="1" fill="#a8a8a8"/><rect x="1" y="5" width="3" height="1" fill="#a8a8a8"/><rect x="4" y="5" width="1" height="1" fill="#ffffff"/><rect x="5" y="5" width="1" height="1" fill="#a8a8a8"/><rect x="1" y="6" width="1" height="1" fill="#a8a8a8"/><rect x="3" y="6" width="3" height="1" fill="#a8a8a8"/><rect x="1" y="7" width="1" height="1" fill="#a8a8a8"/><rect x="1" y="8" width="1" height="1" fill="#a8a8a8"/><rect x="3" y="8" width="3" height="1" fill="#a8a8a8"/><rect x="1" y="9" width="3" height="1" fill="#a8a8a8"/><rect x="4" y="9" width="1" height="1" fill="#ffffff"/><rect x="5" y="9" width="1" height="1" fill="#a8a8a8"/><rect x="1" y="10" width="1" height="1" fill="#a8a8a8"/><rect x="3" y="10" width="3" height="1" fill="#a8a8a8"/><rect x="1" y="11" width="1" height="1" fill="#a8a8a8"/><rect x="1" y="12" width="1" height="1" fill="#a8a8a8"/><rect x="6" y="12" width="3" height="1" fill="#a8a8a8"/><rect x="1" y="13" width="6" height="1" fill="#a8a8a8"/><rect x="7" y="13" width="1" height="1" fill="#ffffff"/><rect x="8" y="13" width="1" height="1" fill="#a8a8a8"/><rect x="6" y="14" width="3" height="1" fill="#a8a8a8"/></svg>
<svg style="left:484px;top:107px;shape-rendering:auto" width="9" height="12" viewBox="0 0 9 12" shape-rendering="crispEdges"><text x="0.3" y="10" font-family="Liberation Sans" font-weight="bold" font-size="12" fill="#a4a4a4">*</text></svg>
<div style="left:499px;top:105px;width:1px;height:19px;background:#8a8a8a;"></div>
<svg style="left:530px;top:106px;shape-rendering:auto" width="17" height="16" viewBox="0 0 17 16" shape-rendering="crispEdges"><rect x="1" y="12" width="13" height="4" fill="#000"/><rect x="3.0" y="13.5" width="1.5" height="1.2" fill="#e05010"/><rect x="5.6" y="13.5" width="1.5" height="1.2" fill="#e05010"/><rect x="8.2" y="13.5" width="1.5" height="1.2" fill="#e05010"/><rect x="10.8" y="13.5" width="1.5" height="1.2" fill="#e05010"/><path d="M7.5 3.5 L15.5 11.5" stroke="#000" stroke-width="2.2"/><path d="M7 3 L9.5 5.5" stroke="#e05010" stroke-width="1.6"/><rect x="10" y="0" width="1" height="1" fill="#a05040"/><rect x="13" y="1" width="1" height="1" fill="#a05040"/><rect x="12" y="4" width="1" height="1" fill="#a05040"/><rect x="15" y="3" width="1" height="1" fill="#a05040"/><rect x="15" y="6" width="1" height="1" fill="#a05040"/></svg>
<svg style="left:554px;top:111px;shape-rendering:auto" width="15" height="12" viewBox="0 0 15 12" shape-rendering="crispEdges"><path d="M0.5 4 L5 0.5 V2.5 H10 V0.5 L14.5 4 L10 7.5 V5.5 H5 V7.5 Z" fill="#d04a10" stroke="#000" stroke-width="1"/></svg>
<svg style="left:577px;top:110px;shape-rendering:auto" width="15" height="12" viewBox="0 0 15 12" shape-rendering="crispEdges"><path d="M0.5 4 L5 0.5 V2.5 H10 V0.5 L14.5 4 L10 7.5 V5.5 H5 V7.5 Z" fill="#d04a10" stroke="#000" stroke-width="1"/><rect x="1" y="7.5" width="13" height="4" fill="#000"/><rect x="3.0" y="9.0" width="1.5" height="1.2" fill="#e05010"/><rect x="5.6" y="9.0" width="1.5" height="1.2" fill="#e05010"/><rect x="8.2" y="9.0" width="1.5" height="1.2" fill="#e05010"/><rect x="10.8" y="9.0" width="1.5" height="1.2" fill="#e05010"/></svg>
<svg style="left:601px;top:106px;shape-rendering:auto" width="17" height="16" viewBox="0 0 17 16" shape-rendering="crispEdges"><path d="M2.5 1 L11.5 10 M11.5 1 L2.5 10" stroke="#000" stroke-width="3"/><path d="M2.5 1 L11.5 10 M11.5 1 L2.5 10" stroke="#d04a10" stroke-width="1.6"/><text x="-0.5" y="15.5" font-family="Liberation Sans" font-weight="bold" font-size="8.5" fill="#000">port</text></svg>
<svg style="left:424px;top:50px;shape-rendering:auto" width="16" height="15" viewBox="0 0 16 15" shape-rendering="crispEdges"><circle cx="5" cy="5" r="4" fill="#fff" stroke="#222" stroke-width="1.1"/><path d="M7.8 7.8 L13 13" stroke="#222" stroke-width="2.4" stroke-linecap="round"/><path d="M8.3 8.3 L12.6 12.6" stroke="#ddd" stroke-width="0.8"/><text x="10.5" y="7" font-family="Liberation Sans" font-weight="bold" font-size="9" fill="#d01818">*</text></svg>
<div style="left:0px;top:127px;width:617px;height:4px;background:#ffffff;border:1px solid #a0a0a0;border-right:none;"></div>
<div style="left:0px;top:133px;width:617px;height:269px;background:#fff;border:1px solid #828790;border-right:none;"></div>
<div class="t" style="left:7.96px;top:141.00px;font-size:12px;color:#000;font-weight:normal;transform:scaleX(1.0237);transform-origin:0 0;">Name</div>
<div class="t" style="left:275.96px;top:141.00px;font-size:12px;color:#000;font-weight:normal;transform:scaleX(0.8857);transform-origin:0 0;">Size</div>
<div class="t" style="left:386.11px;top:141.00px;font-size:12px;color:#000;font-weight:normal;transform:scaleX(0.9532);transform-origin:0 0;">%</div>
<div class="t" style="left:454.30px;top:141.00px;font-size:12px;color:#000;font-weight:normal;transform:scaleX(0.9689);transform-origin:0 0;">Files (#)</div>
<div class="t" style="left:539.80px;top:141.00px;font-size:12px;color:#000;font-weight:normal;transform:scaleX(0.9668);transform-origin:0 0;">Folders (#)</div>
<svg style="left:249px;top:136px;" width="7" height="4" viewBox="0 0 7 4" shape-rendering="crispEdges"><rect x="0" y="0" width="1" height="1" fill="#9aa0a8"/><rect x="6" y="0" width="1" height="1" fill="#9aa0a8"/><rect x="1" y="1" width="1" height="1" fill="#9aa0a8"/><rect x="5" y="1" width="1" height="1" fill="#9aa0a8"/><rect x="2" y="2" width="1" height="1" fill="#9aa0a8"/><rect x="4" y="2" width="1" height="1" fill="#9aa0a8"/><rect x="3" y="3" width="1" height="1" fill="#9aa0a8"/></svg>
<div style="left:201px;top:135px;width:1px;height:24px;background:#e6eef4;"></div>
<div style="left:201px;top:159px;width:1px;height:225px;background:#dcdcdc;"></div>
<div style="left:301px;top:135px;width:1px;height:24px;background:#e6eef4;"></div>
<div style="left:301px;top:159px;width:1px;height:225px;background:#dcdcdc;"></div>
<div style="left:401px;top:135px;width:1px;height:24px;background:#e6eef4;"></div>
<div style="left:401px;top:159px;width:1px;height:225px;background:#dcdcdc;"></div>
<div style="left:501px;top:135px;width:1px;height:24px;background:#e6eef4;"></div>
<div style="left:501px;top:159px;width:1px;height:225px;background:#dcdcdc;"></div>
<div style="left:601px;top:135px;width:1px;height:24px;background:#e6eef4;"></div>
<div style="left:601px;top:159px;width:1px;height:225px;background:#dcdcdc;"></div>
<div class="t" style="left:40.90px;top:161.00px;font-size:12px;color:#000;font-weight:normal;transform:scaleX(1.1076);transform-origin:0 0;">C:\</div>
<svg style="left:7px;top:162px;" width="11" height="13" viewBox="0 0 11 13" shape-rendering="crispEdges"><rect x="2" y="0" width="7" height="1" fill="#c4dcf4"/><rect x="1" y="1" width="1" height="1" fill="#c4dcf4"/><rect x="9" y="1" width="1" height="1" fill="#c4dcf4"/><rect x="0" y="2" width="1" height="1" fill="#c4dcf4"/><rect x="2" y="2" width="7" height="1" fill="#0000f0"/><rect x="10" y="2" width="1" height="1" fill="#c4dcf4"/><rect x="0" y="3" width="1" height="1" fill="#c4dcf4"/><rect x="1" y="3" width="1" height="1" fill="#0000f0"/><rect x="2" y="3" width="7" height="1" fill="#e6f2fc"/><rect x="9" y="3" width="1" height="1" fill="#0000f0"/><rect x="10" y="3" width="1" height="1" fill="#c4dcf4"/><rect x="0" y="4" width="1" height="1" fill="#c4dcf4"/><rect x="1" y="4" width="1" height="1" fill="#0000f0"/><rect x="2" y="4" width="7" height="1" fill="#e6f2fc"/><rect x="9" y="4" width="1" height="1" fill="#0000f0"/><rect x="10" y="4" width="1" height="1" fill="#c4dcf4"/><rect x="0" y="5" width="1" height="1" fill="#c4dcf4"/><rect x="1" y="5" width="1" height="1" fill="#0000f0"/><rect x="2" y="5" width="7" height="1" fill="#e6f2fc"/><rect x="9" y="5" width="1" height="1" fill="#0000f0"/><rect x="10" y="5" width="1" height="1" fill="#c4dcf4"/><rect x="0" y="6" width="1" height="1" fill="#c4dcf4"/><rect x="1" y="6" width="1" height="1" fill="#0000f0"/><rect x="2" y="6" width="1" height="1" fill="#e6f2fc"/><rect x="3" y="6" width="5" height="1" fill="#000000"/><rect x="8" y="6" width="1" height="1" fill="#e6f2fc"/><rect x="9" y="6" width="1" height="1" fill="#0000f0"/><rect x="10" y="6" width="1" height="1" fill="#c4dcf4"/><rect x="0" y="7" width="1" height="1" fill="#c4dcf4"/><rect x="1" y="7" width="1" height="1" fill="#0000f0"/><rect x="2" y="7" width="7" height="1" fill="#e6f2fc"/><rect x="9" y="7" width="1" height="1" fill="#0000f0"/><rect x="10" y="7" width="1" height="1" fill="#c4dcf4"/><rect x="0" y="8" width="1" height="1" fill="#c4dcf4"/><rect x="1" y="8" width="1" height="1" fill="#0000f0"/><rect x="2" y="8" width="7" height="1" fill="#e6f2fc"/><rect x="9" y="8" width="1" height="1" fill="#0000f0"/><rect x="10" y="8" width="1" height="1" fill="#c4dcf4"/><rect x="0" y="9" width="1" height="1" fill="#c4dcf4"/><rect x="1" y="9" width="1" height="1" fill="#0000f0"/><rect x="2" y="9" width="7" height="1" fill="#e6f2fc"/><rect x="9" y="9" width="1" height="1" fill="#0000f0"/><rect x="10" y="9" width="1" height="1" fill="#c4dcf4"/><rect x="0" y="10" width="1" height="1" fill="#c4dcf4"/><rect x="2" y="10" width="7" height="1" fill="#0000f0"/><rect x="10" y="10" width="1" height="1" fill="#c4dcf4"/><rect x="1" y="11" width="1" height="1" fill="#c4dcf4"/><rect x="9" y="11" width="1" height="1" fill="#c4dcf4"/><rect x="2" y="12" width="7" height="1" fill="#c4dcf4"/></svg>
<svg style="left:22px;top:161px;" width="15" height="13" viewBox="0 0 15 13" shape-rendering="crispEdges"><rect x="0" y="1" width="2" height="1" fill="#22b4dc"/><rect x="3" y="1" width="3" height="1" fill="#22b4dc"/><rect x="0" y="2" width="2" height="1" fill="#22b4dc"/><rect x="3" y="2" width="3" height="1" fill="#22b4dc"/><rect x="0" y="4" width="2" height="1" fill="#22b4dc"/><rect x="3" y="4" width="3" height="1" fill="#22b4dc"/><rect x="0" y="5" width="2" height="1" fill="#22b4dc"/><rect x="3" y="5" width="3" height="1" fill="#22b4dc"/><rect x="6" y="5" width="7" height="1" fill="#d4d4d4"/><rect x="2" y="6" width="11" height="1" fill="#d4d4d4"/><rect x="1" y="7" width="14" height="1" fill="#d4d4d4"/><rect x="1" y="8" width="14" height="1" fill="#a8a8a8"/><rect x="1" y="9" width="8" height="1" fill="#3c3c3c"/><rect x="9" y="9" width="5" height="1" fill="#3a1c1c"/><rect x="14" y="9" width="1" height="1" fill="#3c3c3c"/><rect x="1" y="10" width="1" height="1" fill="#3c3c3c"/><rect x="2" y="10" width="6" height="1" fill="#5a5a5a"/><rect x="8" y="10" width="1" height="1" fill="#3c3c3c"/><rect x="9" y="10" width="2" height="1" fill="#3a1c1c"/><rect x="11" y="10" width="1" height="1" fill="#30d040"/><rect x="12" y="10" width="2" height="1" fill="#3a1c1c"/><rect x="14" y="10" width="1" height="1" fill="#3c3c3c"/><rect x="1" y="11" width="8" height="1" fill="#3c3c3c"/><rect x="9" y="11" width="5" height="1" fill="#3a1c1c"/><rect x="14" y="11" width="1" height="1" fill="#3c3c3c"/><rect x="2" y="12" width="12" height="1" fill="#b0b0b0"/></svg>
<div style="left:12px;top:159px;width:1px;height:1px;background:#555;"></div>
<div style="left:12px;top:161px;width:1px;height:1px;background:#555;"></div>
<div style="left:18px;top:168px;width:1px;height:1px;background:#555;"></div>
<div style="left:20px;top:168px;width:1px;height:1px;background:#555;"></div>
<div class="t" style="left:260.42px;top:161.00px;font-size:12px;color:#000;font-weight:normal;transform:scaleX(0.9000);transform-origin:0 0;">43,1 GB</div>
<div class="t" style="left:461.00px;top:161.00px;font-size:12px;color:#000;font-weight:normal;transform:scaleX(0.9000);transform-origin:0 0;">286.326</div>
<div class="t" style="left:594.33px;top:161.00px;font-size:12px;color:#000;font-weight:normal;transform:scaleX(0.9000);transform-origin:0 0;">0</div>
<div style="left:2px;top:177px;width:616px;height:1px;background:#dcdcdc;"></div>
<div class="t" style="left:56.21px;top:180.00px;font-size:12px;color:#000;font-weight:normal;transform:scaleX(1.1036);transform-origin:0 0;">*.dll</div>
<svg style="left:23px;top:181px;" width="11" height="13" viewBox="0 0 11 13" shape-rendering="crispEdges"><rect x="2" y="0" width="7" height="1" fill="#c4dcf4"/><rect x="1" y="1" width="1" height="1" fill="#c4dcf4"/><rect x="9" y="1" width="1" height="1" fill="#c4dcf4"/><rect x="0" y="2" width="1" height="1" fill="#c4dcf4"/><rect x="2" y="2" width="7" height="1" fill="#0000f0"/><rect x="10" y="2" width="1" height="1" fill="#c4dcf4"/><rect x="0" y="3" width="1" height="1" fill="#c4dcf4"/><rect x="1" y="3" width="1" height="1" fill="#0000f0"/><rect x="2" y="3" width="7" height="1" fill="#e6f2fc"/><rect x="9" y="3" width="1" height="1" fill="#0000f0"/><rect x="10" y="3" width="1" height="1" fill="#c4dcf4"/><rect x="0" y="4" width="1" height="1" fill="#c4dcf4"/><rect x="1" y="4" width="1" height="1" fill="#0000f0"/><rect x="2" y="4" width="3" height="1" fill="#e6f2fc"/><rect x="5" y="4" width="1" height="1" fill="#000000"/><rect x="6" y="4" width="3" height="1" fill="#e6f2fc"/><rect x="9" y="4" width="1" height="1" fill="#0000f0"/><rect x="10" y="4" width="1" height="1" fill="#c4dcf4"/><rect x="0" y="5" width="1" height="1" fill="#c4dcf4"/><rect x="1" y="5" width="1" height="1" fill="#0000f0"/><rect x="2" y="5" width="3" height="1" fill="#e6f2fc"/><rect x="5" y="5" width="1" height="1" fill="#000000"/><rect x="6" y="5" width="3" height="1" fill="#e6f2fc"/><rect x="9" y="5" width="1" height="1" fill="#0000f0"/><rect x="10" y="5" width="1" height="1" fill="#c4dcf4"/><rect x="0" y="6" width="1" height="1" fill="#c4dcf4"/><rect x="1" y="6" width="1" height="1" fill="#0000f0"/><rect x="2" y="6" width="1" height="1" fill="#e6f2fc"/><rect x="3" y="6" width="5" height="1" fill="#000000"/><rect x="8" y="6" width="1" height="1" fill="#e6f2fc"/><rect x="9" y="6" width="1" height="1" fill="#0000f0"/><rect x="10" y="6" width="1" height="1" fill="#c4dcf4"/><rect x="0" y="7" width="1" height="1" fill="#c4dcf4"/><rect x="1" y="7" width="1" height="1" fill="#0000f0"/><rect x="2" y="7" width="3" height="1" fill="#e6f2fc"/><rect x="5" y="7" width="1" height="1" fill="#000000"/><rect x="6" y="7" width="3" height="1" fill="#e6f2fc"/><rect x="9" y="7" width="1" height="1" fill="#0000f0"/><rect x="10" y="7" width="1" height="1" fill="#c4dcf4"/><rect x="0" y="8" width="1" height="1" fill="#c4dcf4"/><rect x="1" y="8" width="1" height="1" fill="#0000f0"/><rect x="2" y="8" width="3" height="1" fill="#e6f2fc"/><rect x="5" y="8" width="1" height="1" fill="#000000"/><rect x="6" y="8" width="3" height="1" fill="#e6f2fc"/><rect x="9" y="8" width="1" height="1" fill="#0000f0"/><rect x="10" y="8" width="1" height="1" fill="#c4dcf4"/><rect x="0" y="9" width="1" height="1" fill="#c4dcf4"/><rect x="1" y="9" width="1" height="1" fill="#0000f0"/><rect x="2" y="9" width="7" height="1" fill="#e6f2fc"/><rect x="9" y="9" width="1" height="1" fill="#0000f0"/><rect x="10" y="9" width="1" height="1" fill="#c4dcf4"/><rect x="0" y="10" width="1" height="1" fill="#c4dcf4"/><rect x="2" y="10" width="7" height="1" fill="#0000f0"/><rect x="10" y="10" width="1" height="1" fill="#c4dcf4"/><rect x="1" y="11" width="1" height="1" fill="#c4dcf4"/><rect x="9" y="11" width="1" height="1" fill="#c4dcf4"/><rect x="2" y="12" width="7" height="1" fill="#c4dcf4"/></svg>
<div style="left:28px;top:178px;width:1px;height:1px;background:#555;"></div>
<div style="left:28px;top:180px;width:1px;height:1px;background:#555;"></div>
<div style="left:34px;top:187px;width:1px;height:1px;background:#555;"></div>
<div style="left:36px;top:187px;width:1px;height:1px;background:#555;"></div>
<div style="left:38px;top:187px;width:1px;height:1px;background:#555;"></div>
<svg style="left:40px;top:179px;" width="12" height="16" viewBox="0 0 12 16" shape-rendering="crispEdges"><path d="M0.5 0.5 H7.5 L11.5 4.5 V15.5 H0.5 Z M7.5 0.5 V4.5 H11.5" fill="#fff" stroke="#6e6e6e" stroke-width="1"/><g transform="translate(0,0)"><circle cx="5" cy="6.5" r="3" fill="none" stroke="#a8a8a8" stroke-width="1.3" stroke-dasharray="1.2 0.8"/><circle cx="8" cy="10" r="2.2" fill="none" stroke="#90b0d0" stroke-width="1.2" stroke-dasharray="1 0.8"/></g></svg>
<div class="t" style="left:260.42px;top:180.00px;font-size:12px;color:#000;font-weight:normal;transform:scaleX(0.9000);transform-origin:0 0;">21,0 GB</div>
<div class="t" style="left:360.71px;top:180.00px;font-size:12px;color:#000;font-weight:normal;transform:scaleX(0.9000);transform-origin:0 0;">48.79 %</div>
<div style="left:305px;top:193px;width:95px;height:2px;background:#3db54a;"></div>
<div class="t" style="left:467.02px;top:180.00px;font-size:12px;color:#000;font-weight:normal;transform:scaleX(0.9000);transform-origin:0 0;">45.919</div>
<div class="t" style="left:594.33px;top:180.00px;font-size:12px;color:#000;font-weight:normal;transform:scaleX(0.9000);transform-origin:0 0;">0</div>
<div style="left:2px;top:196px;width:616px;height:1px;background:#dcdcdc;"></div>
<div class="t" style="left:56.31px;top:199.00px;font-size:12px;color:#000;font-weight:normal;transform:scaleX(0.9645);transform-origin:0 0;">*.exe</div>
<svg style="left:23px;top:200px;" width="11" height="13" viewBox="0 0 11 13" shape-rendering="crispEdges"><rect x="2" y="0" width="7" height="1" fill="#c4dcf4"/><rect x="1" y="1" width="1" height="1" fill="#c4dcf4"/><rect x="9" y="1" width="1" height="1" fill="#c4dcf4"/><rect x="0" y="2" width="1" height="1" fill="#c4dcf4"/><rect x="2" y="2" width="7" height="1" fill="#0000f0"/><rect x="10" y="2" width="1" height="1" fill="#c4dcf4"/><rect x="0" y="3" width="1" height="1" fill="#c4dcf4"/><rect x="1" y="3" width="1" height="1" fill="#0000f0"/><rect x="2" y="3" width="7" height="1" fill="#e6f2fc"/><rect x="9" y="3" width="1" height="1" fill="#0000f0"/><rect x="10" y="3" width="1" height="1" fill="#c4dcf4"/><rect x="0" y="4" width="1" height="1" fill="#c4dcf4"/><rect x="1" y="4" width="1" height="1" fill="#0000f0"/><rect x="2" y="4" width="3" height="1" fill="#e6f2fc"/><rect x="5" y="4" width="1" height="1" fill="#000000"/><rect x="6" y="4" width="3" height="1" fill="#e6f2fc"/><rect x="9" y="4" width="1" height="1" fill="#0000f0"/><rect x="10" y="4" width="1" height="1" fill="#c4dcf4"/><rect x="0" y="5" width="1" height="1" fill="#c4dcf4"/><rect x="1" y="5" width="1" height="1" fill="#0000f0"/><rect x="2" y="5" width="3" height="1" fill="#e6f2fc"/><rect x="5" y="5" width="1" height="1" fill="#000000"/><rect x="6" y="5" width="3" height="1" fill="#e6f2fc"/><rect x="9" y="5" width="1" height="1" fill="#0000f0"/><rect x="10" y="5" width="1" height="1" fill="#c4dcf4"/><rect x="0" y="6" width="1" height="1" fill="#c4dcf4"/><rect x="1" y="6" width="1" height="1" fill="#0000f0"/><rect x="2" y="6" width="1" height="1" fill="#e6f2fc"/><rect x="3" y="6" width="5" height="1" fill="#000000"/><rect x="8" y="6" width="1" height="1" fill="#e6f2fc"/><rect x="9" y="6" width="1" height="1" fill="#0000f0"/><rect x="10" y="6" width="1" height="1" fill="#c4dcf4"/><rect x="0" y="7" width="1" height="1" fill="#c4dcf4"/><rect x="1" y="7" width="1" height="1" fill="#0000f0"/><rect x="2" y="7" width="3" height="1" fill="#e6f2fc"/><rect x="5" y="7" width="1" height="1" fill="#000000"/><rect x="6" y="7" width="3" height="1" fill="#e6f2fc"/><rect x="9" y="7" width="1" height="1" fill="#0000f0"/><rect x="10" y="7" width="1" height="1" fill="#c4dcf4"/><rect x="0" y="8" width="1" height="1" fill="#c4dcf4"/><rect x="1" y="8" width="1" height="1" fill="#0000f0"/><rect x="2" y="8" width="3" height="1" fill="#e6f2fc"/><rect x="5" y="8" width="1" height="1" fill="#000000"/><rect x="6" y="8" width="3" height="1" fill="#e6f2fc"/><rect x="9" y="8" width="1" height="1" fill="#0000f0"/><rect x="10" y="8" width="1" height="1" fill="#c4dcf4"/><rect x="0" y="9" width="1" height="1" fill="#c4dcf4"/><rect x="1" y="9" width="1" height="1" fill="#0000f0"/><rect x="2" y="9" width="7" height="1" fill="#e6f2fc"/><rect x="9" y="9" width="1" height="1" fill="#0000f0"/><rect x="10" y="9" width="1" height="1" fill="#c4dcf4"/><rect x="0" y="10" width="1" height="1" fill="#c4dcf4"/><rect x="2" y="10" width="7" height="1" fill="#0000f0"/><rect x="10" y="10" width="1" height="1" fill="#c4dcf4"/><rect x="1" y="11" width="1" height="1" fill="#c4dcf4"/><rect x="9" y="11" width="1" height="1" fill="#c4dcf4"/><rect x="2" y="12" width="7" height="1" fill="#c4dcf4"/></svg>
<div style="left:28px;top:197px;width:1px;height:1px;background:#555;"></div>
<div style="left:28px;top:199px;width:1px;height:1px;background:#555;"></div>
<div style="left:34px;top:206px;width:1px;height:1px;background:#555;"></div>
<div style="left:36px;top:206px;width:1px;height:1px;background:#555;"></div>
<div style="left:38px;top:206px;width:1px;height:1px;background:#555;"></div>
<svg style="left:38px;top:198px;" width="16" height="12" viewBox="0 0 16 12" shape-rendering="crispEdges"><rect x="0.5" y="0.5" width="15" height="11" fill="#fff" stroke="#6e6e6e"/><rect x="0" y="0" width="16" height="2" fill="#6e6e6e"/><rect x="1" y="2" width="3" height="9" fill="#d8f0d0"/><rect x="5" y="4" width="3" height="6" fill="#1e7fdc"/><path d="M9 5 H13 M9 7 H13 M9 9 H12" stroke="#7a7a7a"/></svg>
<div class="t" style="left:266.42px;top:199.00px;font-size:12px;color:#000;font-weight:normal;transform:scaleX(0.9000);transform-origin:0 0;">3,2 GB</div>
<div class="t" style="left:366.72px;top:199.00px;font-size:12px;color:#000;font-weight:normal;transform:scaleX(0.9000);transform-origin:0 0;">7.54 %</div>
<div style="left:385px;top:212px;width:15px;height:2px;background:#3db54a;"></div>
<div class="t" style="left:473.02px;top:199.00px;font-size:12px;color:#000;font-weight:normal;transform:scaleX(0.9000);transform-origin:0 0;">6.894</div>
<div class="t" style="left:594.33px;top:199.00px;font-size:12px;color:#000;font-weight:normal;transform:scaleX(0.9000);transform-origin:0 0;">0</div>
<div style="left:2px;top:215px;width:616px;height:1px;background:#dcdcdc;"></div>
<div class="t" style="left:56.24px;top:218.00px;font-size:12px;color:#000;font-weight:normal;transform:scaleX(1.0582);transform-origin:0 0;">*.dat</div>
<svg style="left:23px;top:219px;" width="11" height="13" viewBox="0 0 11 13" shape-rendering="crispEdges"><rect x="2" y="0" width="7" height="1" fill="#c4dcf4"/><rect x="1" y="1" width="1" height="1" fill="#c4dcf4"/><rect x="9" y="1" width="1" height="1" fill="#c4dcf4"/><rect x="0" y="2" width="1" height="1" fill="#c4dcf4"/><rect x="2" y="2" width="7" height="1" fill="#0000f0"/><rect x="10" y="2" width="1" height="1" fill="#c4dcf4"/><rect x="0" y="3" width="1" height="1" fill="#c4dcf4"/><rect x="1" y="3" width="1" height="1" fill="#0000f0"/><rect x="2" y="3" width="7" height="1" fill="#e6f2fc"/><rect x="9" y="3" width="1" height="1" fill="#0000f0"/><rect x="10" y="3" width="1" height="1" fill="#c4dcf4"/><rect x="0" y="4" width="1" height="1" fill="#c4dcf4"/><rect x="1" y="4" width="1" height="1" fill="#0000f0"/><rect x="2" y="4" width="3" height="1" fill="#e6f2fc"/><rect x="5" y="4" width="1" height="1" fill="#000000"/><rect x="6" y="4" width="3" height="1" fill="#e6f2fc"/><rect x="9" y="4" width="1" height="1" fill="#0000f0"/><rect x="10" y="4" width="1" height="1" fill="#c4dcf4"/><rect x="0" y="5" width="1" height="1" fill="#c4dcf4"/><rect x="1" y="5" width="1" height="1" fill="#0000f0"/><rect x="2" y="5" width="3" height="1" fill="#e6f2fc"/><rect x="5" y="5" width="1" height="1" fill="#000000"/><rect x="6" y="5" width="3" height="1" fill="#e6f2fc"/><rect x="9" y="5" width="1" height="1" fill="#0000f0"/><rect x="10" y="5" width="1" height="1" fill="#c4dcf4"/><rect x="0" y="6" width="1" height="1" fill="#c4dcf4"/><rect x="1" y="6" width="1" height="1" fill="#0000f0"/><rect x="2" y="6" width="1" height="1" fill="#e6f2fc"/><rect x="3" y="6" width="5" height="1" fill="#000000"/><rect x="8" y="6" width="1" height="1" fill="#e6f2fc"/><rect x="9" y="6" width="1" height="1" fill="#0000f0"/><rect x="10" y="6" width="1" height="1" fill="#c4dcf4"/><rect x="0" y="7" width="1" height="1" fill="#c4dcf4"/><rect x="1" y="7" width="1" height="1" fill="#0000f0"/><rect x="2" y="7" width="3" height="1" fill="#e6f2fc"/><rect x="5" y="7" width="1" height="1" fill="#000000"/><rect x="6" y="7" width="3" height="1" fill="#e6f2fc"/><rect x="9" y="7" width="1" height="1" fill="#0000f0"/><rect x="10" y="7" width="1" height="1" fill="#c4dcf4"/><rect x="0" y="8" width="1" height="1" fill="#c4dcf4"/><rect x="1" y="8" width="1" height="1" fill="#0000f0"/><rect x="2" y="8" width="3" height="1" fill="#e6f2fc"/><rect x="5" y="8" width="1" height="1" fill="#000000"/><rect x="6" y="8" width="3" height="1" fill="#e6f2fc"/><rect x="9" y="8" width="1" height="1" fill="#0000f0"/><rect x="10" y="8" width="1" height="1" fill="#c4dcf4"/><rect x="0" y="9" width="1" height="1" fill="#c4dcf4"/><rect x="1" y="9" width="1" height="1" fill="#0000f0"/><rect x="2" y="9" width="7" height="1" fill="#e6f2fc"/><rect x="9" y="9" width="1" height="1" fill="#0000f0"/><rect x="10" y="9" width="1" height="1" fill="#c4dcf4"/><rect x="0" y="10" width="1" height="1" fill="#c4dcf4"/><rect x="2" y="10" width="7" height="1" fill="#0000f0"/><rect x="10" y="10" width="1" height="1" fill="#c4dcf4"/><rect x="1" y="11" width="1" height="1" fill="#c4dcf4"/><rect x="9" y="11" width="1" height="1" fill="#c4dcf4"/><rect x="2" y="12" width="7" height="1" fill="#c4dcf4"/></svg>
<div style="left:28px;top:216px;width:1px;height:1px;background:#555;"></div>
<div style="left:28px;top:218px;width:1px;height:1px;background:#555;"></div>
<div style="left:34px;top:225px;width:1px;height:1px;background:#555;"></div>
<div style="left:36px;top:225px;width:1px;height:1px;background:#555;"></div>
<div style="left:38px;top:225px;width:1px;height:1px;background:#555;"></div>
<svg style="left:40px;top:217px;" width="12" height="16" viewBox="0 0 12 16" shape-rendering="crispEdges"><path d="M0.5 0.5 H7.5 L11.5 4.5 V15.5 H0.5 Z M7.5 0.5 V4.5 H11.5" fill="#fff" stroke="#6e6e6e" stroke-width="1"/></svg>
<div class="t" style="left:266.42px;top:218.00px;font-size:12px;color:#000;font-weight:normal;transform:scaleX(0.9000);transform-origin:0 0;">2,9 GB</div>
<div class="t" style="left:366.72px;top:218.00px;font-size:12px;color:#000;font-weight:normal;transform:scaleX(0.9000);transform-origin:0 0;">6.65 %</div>
<div style="left:387px;top:231px;width:13px;height:2px;background:#3db54a;"></div>
<div class="t" style="left:473.02px;top:218.00px;font-size:12px;color:#000;font-weight:normal;transform:scaleX(0.9000);transform-origin:0 0;">1.380</div>
<div class="t" style="left:594.33px;top:218.00px;font-size:12px;color:#000;font-weight:normal;transform:scaleX(0.9000);transform-origin:0 0;">0</div>
<div style="left:2px;top:234px;width:616px;height:1px;background:#dcdcdc;"></div>
<div class="t" style="left:56.16px;top:237.00px;font-size:12px;color:#000;font-weight:normal;transform:scaleX(1.1710);transform-origin:0 0;">*.</div>
<svg style="left:23px;top:238px;" width="11" height="13" viewBox="0 0 11 13" shape-rendering="crispEdges"><rect x="2" y="0" width="7" height="1" fill="#c4dcf4"/><rect x="1" y="1" width="1" height="1" fill="#c4dcf4"/><rect x="9" y="1" width="1" height="1" fill="#c4dcf4"/><rect x="0" y="2" width="1" height="1" fill="#c4dcf4"/><rect x="2" y="2" width="7" height="1" fill="#0000f0"/><rect x="10" y="2" width="1" height="1" fill="#c4dcf4"/><rect x="0" y="3" width="1" height="1" fill="#c4dcf4"/><rect x="1" y="3" width="1" height="1" fill="#0000f0"/><rect x="2" y="3" width="7" height="1" fill="#e6f2fc"/><rect x="9" y="3" width="1" height="1" fill="#0000f0"/><rect x="10" y="3" width="1" height="1" fill="#c4dcf4"/><rect x="0" y="4" width="1" height="1" fill="#c4dcf4"/><rect x="1" y="4" width="1" height="1" fill="#0000f0"/><rect x="2" y="4" width="3" height="1" fill="#e6f2fc"/><rect x="5" y="4" width="1" height="1" fill="#000000"/><rect x="6" y="4" width="3" height="1" fill="#e6f2fc"/><rect x="9" y="4" width="1" height="1" fill="#0000f0"/><rect x="10" y="4" width="1" height="1" fill="#c4dcf4"/><rect x="0" y="5" width="1" height="1" fill="#c4dcf4"/><rect x="1" y="5" width="1" height="1" fill="#0000f0"/><rect x="2" y="5" width="3" height="1" fill="#e6f2fc"/><rect x="5" y="5" width="1" height="1" fill="#000000"/><rect x="6" y="5" width="3" height="1" fill="#e6f2fc"/><rect x="9" y="5" width="1" height="1" fill="#0000f0"/><rect x="10" y="5" width="1" height="1" fill="#c4dcf4"/><rect x="0" y="6" width="1" height="1" fill="#c4dcf4"/><rect x="1" y="6" width="1" height="1" fill="#0000f0"/><rect x="2" y="6" width="1" height="1" fill="#e6f2fc"/><rect x="3" y="6" width="5" height="1" fill="#000000"/><rect x="8" y="6" width="1" height="1" fill="#e6f2fc"/><rect x="9" y="6" width="1" height="1" fill="#0000f0"/><rect x="10" y="6" width="1" height="1" fill="#c4dcf4"/><rect x="0" y="7" width="1" height="1" fill="#c4dcf4"/><rect x="1" y="7" width="1" height="1" fill="#0000f0"/><rect x="2" y="7" width="3" height="1" fill="#e6f2fc"/><rect x="5" y="7" width="1" height="1" fill="#000000"/><rect x="6" y="7" width="3" height="1" fill="#e6f2fc"/><rect x="9" y="7" width="1" height="1" fill="#0000f0"/><rect x="10" y="7" width="1" height="1" fill="#c4dcf4"/><rect x="0" y="8" width="1" height="1" fill="#c4dcf4"/><rect x="1" y="8" width="1" height="1" fill="#0000f0"/><rect x="2" y="8" width="3" height="1" fill="#e6f2fc"/><rect x="5" y="8" width="1" height="1" fill="#000000"/><rect x="6" y="8" width="3" height="1" fill="#e6f2fc"/><rect x="9" y="8" width="1" height="1" fill="#0000f0"/><rect x="10" y="8" width="1" height="1" fill="#c4dcf4"/><rect x="0" y="9" width="1" height="1" fill="#c4dcf4"/><rect x="1" y="9" width="1" height="1" fill="#0000f0"/><rect x="2" y="9" width="7" height="1" fill="#e6f2fc"/><rect x="9" y="9" width="1" height="1" fill="#0000f0"/><rect x="10" y="9" width="1" height="1" fill="#c4dcf4"/><rect x="0" y="10" width="1" height="1" fill="#c4dcf4"/><rect x="2" y="10" width="7" height="1" fill="#0000f0"/><rect x="10" y="10" width="1" height="1" fill="#c4dcf4"/><rect x="1" y="11" width="1" height="1" fill="#c4dcf4"/><rect x="9" y="11" width="1" height="1" fill="#c4dcf4"/><rect x="2" y="12" width="7" height="1" fill="#c4dcf4"/></svg>
<div style="left:28px;top:235px;width:1px;height:1px;background:#555;"></div>
<div style="left:28px;top:237px;width:1px;height:1px;background:#555;"></div>
<div style="left:34px;top:244px;width:1px;height:1px;background:#555;"></div>
<div style="left:36px;top:244px;width:1px;height:1px;background:#555;"></div>
<div style="left:38px;top:244px;width:1px;height:1px;background:#555;"></div>
<svg style="left:40px;top:236px;" width="12" height="16" viewBox="0 0 12 16" shape-rendering="crispEdges"><path d="M0.5 0.5 H7.5 L11.5 4.5 V15.5 H0.5 Z M7.5 0.5 V4.5 H11.5" fill="#fff" stroke="#6e6e6e" stroke-width="1"/></svg>
<div class="t" style="left:266.42px;top:237.00px;font-size:12px;color:#000;font-weight:normal;transform:scaleX(0.9000);transform-origin:0 0;">1,2 GB</div>
<div class="t" style="left:366.72px;top:237.00px;font-size:12px;color:#000;font-weight:normal;transform:scaleX(0.9000);transform-origin:0 0;">2.81 %</div>
<div style="left:395px;top:250px;width:5px;height:2px;background:#3db54a;"></div>
<div class="t" style="left:473.02px;top:237.00px;font-size:12px;color:#000;font-weight:normal;transform:scaleX(0.9000);transform-origin:0 0;">4.744</div>
<div class="t" style="left:594.33px;top:237.00px;font-size:12px;color:#000;font-weight:normal;transform:scaleX(0.9000);transform-origin:0 0;">0</div>
<div style="left:2px;top:253px;width:616px;height:1px;background:#dcdcdc;"></div>
<div class="t" style="left:56.20px;top:256.00px;font-size:12px;color:#000;font-weight:normal;transform:scaleX(1.1090);transform-origin:0 0;">*.lib</div>
<svg style="left:23px;top:257px;" width="11" height="13" viewBox="0 0 11 13" shape-rendering="crispEdges"><rect x="2" y="0" width="7" height="1" fill="#c4dcf4"/><rect x="1" y="1" width="1" height="1" fill="#c4dcf4"/><rect x="9" y="1" width="1" height="1" fill="#c4dcf4"/><rect x="0" y="2" width="1" height="1" fill="#c4dcf4"/><rect x="2" y="2" width="7" height="1" fill="#0000f0"/><rect x="10" y="2" width="1" height="1" fill="#c4dcf4"/><rect x="0" y="3" width="1" height="1" fill="#c4dcf4"/><rect x="1" y="3" width="1" height="1" fill="#0000f0"/><rect x="2" y="3" width="7" height="1" fill="#e6f2fc"/><rect x="9" y="3" width="1" height="1" fill="#0000f0"/><rect x="10" y="3" width="1" height="1" fill="#c4dcf4"/><rect x="0" y="4" width="1" height="1" fill="#c4dcf4"/><rect x="1" y="4" width="1" height="1" fill="#0000f0"/><rect x="2" y="4" width="3" height="1" fill="#e6f2fc"/><rect x="5" y="4" width="1" height="1" fill="#000000"/><rect x="6" y="4" width="3" height="1" fill="#e6f2fc"/><rect x="9" y="4" width="1" height="1" fill="#0000f0"/><rect x="10" y="4" width="1" height="1" fill="#c4dcf4"/><rect x="0" y="5" width="1" height="1" fill="#c4dcf4"/><rect x="1" y="5" width="1" height="1" fill="#0000f0"/><rect x="2" y="5" width="3" height="1" fill="#e6f2fc"/><rect x="5" y="5" width="1" height="1" fill="#000000"/><rect x="6" y="5" width="3" height="1" fill="#e6f2fc"/><rect x="9" y="5" width="1" height="1" fill="#0000f0"/><rect x="10" y="5" width="1" height="1" fill="#c4dcf4"/><rect x="0" y="6" width="1" height="1" fill="#c4dcf4"/><rect x="1" y="6" width="1" height="1" fill="#0000f0"/><rect x="2" y="6" width="1" height="1" fill="#e6f2fc"/><rect x="3" y="6" width="5" height="1" fill="#000000"/><rect x="8" y="6" width="1" height="1" fill="#e6f2fc"/><rect x="9" y="6" width="1" height="1" fill="#0000f0"/><rect x="10" y="6" width="1" height="1" fill="#c4dcf4"/><rect x="0" y="7" width="1" height="1" fill="#c4dcf4"/><rect x="1" y="7" width="1" height="1" fill="#0000f0"/><rect x="2" y="7" width="3" height="1" fill="#e6f2fc"/><rect x="5" y="7" width="1" height="1" fill="#000000"/><rect x="6" y="7" width="3" height="1" fill="#e6f2fc"/><rect x="9" y="7" width="1" height="1" fill="#0000f0"/><rect x="10" y="7" width="1" height="1" fill="#c4dcf4"/><rect x="0" y="8" width="1" height="1" fill="#c4dcf4"/><rect x="1" y="8" width="1" height="1" fill="#0000f0"/><rect x="2" y="8" width="3" height="1" fill="#e6f2fc"/><rect x="5" y="8" width="1" height="1" fill="#000000"/><rect x="6" y="8" width="3" height="1" fill="#e6f2fc"/><rect x="9" y="8" width="1" height="1" fill="#0000f0"/><rect x="10" y="8" width="1" height="1" fill="#c4dcf4"/><rect x="0" y="9" width="1" height="1" fill="#c4dcf4"/><rect x="1" y="9" width="1" height="1" fill="#0000f0"/><rect x="2" y="9" width="7" height="1" fill="#e6f2fc"/><rect x="9" y="9" width="1" height="1" fill="#0000f0"/><rect x="10" y="9" width="1" height="1" fill="#c4dcf4"/><rect x="0" y="10" width="1" height="1" fill="#c4dcf4"/><rect x="2" y="10" width="7" height="1" fill="#0000f0"/><rect x="10" y="10" width="1" height="1" fill="#c4dcf4"/><rect x="1" y="11" width="1" height="1" fill="#c4dcf4"/><rect x="9" y="11" width="1" height="1" fill="#c4dcf4"/><rect x="2" y="12" width="7" height="1" fill="#c4dcf4"/></svg>
<div style="left:28px;top:254px;width:1px;height:1px;background:#555;"></div>
<div style="left:28px;top:256px;width:1px;height:1px;background:#555;"></div>
<div style="left:34px;top:263px;width:1px;height:1px;background:#555;"></div>
<div style="left:36px;top:263px;width:1px;height:1px;background:#555;"></div>
<div style="left:38px;top:263px;width:1px;height:1px;background:#555;"></div>
<svg style="left:38px;top:255px;shape-rendering:auto" width="16" height="16" viewBox="0 0 16 16" shape-rendering="crispEdges"><path d="M4.5 0.5 H11 L14.5 4 V15.5 H4.5 Z" fill="#eef2fa" stroke="#6a6a7a"/><path d="M7 1 L10 4 L7 7 L4 4Z" fill="#1e70d8"/><path d="M3 7 L5 9 L3 11 L1 9Z" fill="#f08a20"/><rect x="1" y="2" width="3" height="3" fill="#8a8ad8"/><circle cx="10" cy="11" r="3.2" fill="none" stroke="#7a7ad0" stroke-width="1.6" stroke-dasharray="1.3 0.9"/><circle cx="10" cy="11" r="1.2" fill="#9a9ae0"/><path d="M5 6 L9 10" stroke="#9ab0e0"/></svg>
<div class="t" style="left:266.42px;top:256.00px;font-size:12px;color:#000;font-weight:normal;transform:scaleX(0.9000);transform-origin:0 0;">1,2 GB</div>
<div class="t" style="left:366.72px;top:256.00px;font-size:12px;color:#000;font-weight:normal;transform:scaleX(0.9000);transform-origin:0 0;">2.79 %</div>
<div style="left:395px;top:269px;width:5px;height:2px;background:#3db54a;"></div>
<div class="t" style="left:473.02px;top:256.00px;font-size:12px;color:#000;font-weight:normal;transform:scaleX(0.9000);transform-origin:0 0;">2.673</div>
<div class="t" style="left:594.33px;top:256.00px;font-size:12px;color:#000;font-weight:normal;transform:scaleX(0.9000);transform-origin:0 0;">0</div>
<div style="left:2px;top:272px;width:616px;height:1px;background:#dcdcdc;"></div>
<div class="t" style="left:56.29px;top:275.00px;font-size:12px;color:#000;font-weight:normal;transform:scaleX(0.9806);transform-origin:0 0;">*.sys</div>
<svg style="left:23px;top:276px;" width="11" height="13" viewBox="0 0 11 13" shape-rendering="crispEdges"><rect x="2" y="0" width="7" height="1" fill="#c4dcf4"/><rect x="1" y="1" width="1" height="1" fill="#c4dcf4"/><rect x="9" y="1" width="1" height="1" fill="#c4dcf4"/><rect x="0" y="2" width="1" height="1" fill="#c4dcf4"/><rect x="2" y="2" width="7" height="1" fill="#0000f0"/><rect x="10" y="2" width="1" height="1" fill="#c4dcf4"/><rect x="0" y="3" width="1" height="1" fill="#c4dcf4"/><rect x="1" y="3" width="1" height="1" fill="#0000f0"/><rect x="2" y="3" width="7" height="1" fill="#e6f2fc"/><rect x="9" y="3" width="1" height="1" fill="#0000f0"/><rect x="10" y="3" width="1" height="1" fill="#c4dcf4"/><rect x="0" y="4" width="1" height="1" fill="#c4dcf4"/><rect x="1" y="4" width="1" height="1" fill="#0000f0"/><rect x="2" y="4" width="3" height="1" fill="#e6f2fc"/><rect x="5" y="4" width="1" height="1" fill="#000000"/><rect x="6" y="4" width="3" height="1" fill="#e6f2fc"/><rect x="9" y="4" width="1" height="1" fill="#0000f0"/><rect x="10" y="4" width="1" height="1" fill="#c4dcf4"/><rect x="0" y="5" width="1" height="1" fill="#c4dcf4"/><rect x="1" y="5" width="1" height="1" fill="#0000f0"/><rect x="2" y="5" width="3" height="1" fill="#e6f2fc"/><rect x="5" y="5" width="1" height="1" fill="#000000"/><rect x="6" y="5" width="3" height="1" fill="#e6f2fc"/><rect x="9" y="5" width="1" height="1" fill="#0000f0"/><rect x="10" y="5" width="1" height="1" fill="#c4dcf4"/><rect x="0" y="6" width="1" height="1" fill="#c4dcf4"/><rect x="1" y="6" width="1" height="1" fill="#0000f0"/><rect x="2" y="6" width="1" height="1" fill="#e6f2fc"/><rect x="3" y="6" width="5" height="1" fill="#000000"/><rect x="8" y="6" width="1" height="1" fill="#e6f2fc"/><rect x="9" y="6" width="1" height="1" fill="#0000f0"/><rect x="10" y="6" width="1" height="1" fill="#c4dcf4"/><rect x="0" y="7" width="1" height="1" fill="#c4dcf4"/><rect x="1" y="7" width="1" height="1" fill="#0000f0"/><rect x="2" y="7" width="3" height="1" fill="#e6f2fc"/><rect x="5" y="7" width="1" height="1" fill="#000000"/><rect x="6" y="7" width="3" height="1" fill="#e6f2fc"/><rect x="9" y="7" width="1" height="1" fill="#0000f0"/><rect x="10" y="7" width="1" height="1" fill="#c4dcf4"/><rect x="0" y="8" width="1" height="1" fill="#c4dcf4"/><rect x="1" y="8" width="1" height="1" fill="#0000f0"/><rect x="2" y="8" width="3" height="1" fill="#e6f2fc"/><rect x="5" y="8" width="1" height="1" fill="#000000"/><rect x="6" y="8" width="3" height="1" fill="#e6f2fc"/><rect x="9" y="8" width="1" height="1" fill="#0000f0"/><rect x="10" y="8" width="1" height="1" fill="#c4dcf4"/><rect x="0" y="9" width="1" height="1" fill="#c4dcf4"/><rect x="1" y="9" width="1" height="1" fill="#0000f0"/><rect x="2" y="9" width="7" height="1" fill="#e6f2fc"/><rect x="9" y="9" width="1" height="1" fill="#0000f0"/><rect x="10" y="9" width="1" height="1" fill="#c4dcf4"/><rect x="0" y="10" width="1" height="1" fill="#c4dcf4"/><rect x="2" y="10" width="7" height="1" fill="#0000f0"/><rect x="10" y="10" width="1" height="1" fill="#c4dcf4"/><rect x="1" y="11" width="1" height="1" fill="#c4dcf4"/><rect x="9" y="11" width="1" height="1" fill="#c4dcf4"/><rect x="2" y="12" width="7" height="1" fill="#c4dcf4"/></svg>
<div style="left:28px;top:273px;width:1px;height:1px;background:#555;"></div>
<div style="left:28px;top:275px;width:1px;height:1px;background:#555;"></div>
<div style="left:34px;top:282px;width:1px;height:1px;background:#555;"></div>
<div style="left:36px;top:282px;width:1px;height:1px;background:#555;"></div>
<div style="left:38px;top:282px;width:1px;height:1px;background:#555;"></div>
<svg style="left:40px;top:274px;" width="12" height="16" viewBox="0 0 12 16" shape-rendering="crispEdges"><path d="M0.5 0.5 H7.5 L11.5 4.5 V15.5 H0.5 Z M7.5 0.5 V4.5 H11.5" fill="#fff" stroke="#6e6e6e" stroke-width="1"/><g transform="translate(0,0)"><circle cx="5" cy="6.5" r="3" fill="none" stroke="#a8a8a8" stroke-width="1.3" stroke-dasharray="1.2 0.8"/><circle cx="8" cy="10" r="2.2" fill="none" stroke="#90b0d0" stroke-width="1.2" stroke-dasharray="1 0.8"/></g></svg>
<div class="t" style="left:266.42px;top:275.00px;font-size:12px;color:#000;font-weight:normal;transform:scaleX(0.9000);transform-origin:0 0;">0,9 GB</div>
<div class="t" style="left:366.72px;top:275.00px;font-size:12px;color:#000;font-weight:normal;transform:scaleX(0.9000);transform-origin:0 0;">2.19 %</div>
<div style="left:396px;top:288px;width:4px;height:2px;background:#3db54a;"></div>
<div class="t" style="left:473.02px;top:275.00px;font-size:12px;color:#000;font-weight:normal;transform:scaleX(0.9000);transform-origin:0 0;">2.924</div>
<div class="t" style="left:594.33px;top:275.00px;font-size:12px;color:#000;font-weight:normal;transform:scaleX(0.9000);transform-origin:0 0;">0</div>
<div style="left:2px;top:291px;width:616px;height:1px;background:#dcdcdc;"></div>
<div class="t" style="left:56.20px;top:294.00px;font-size:12px;color:#000;font-weight:normal;transform:scaleX(1.1075);transform-origin:0 0;">*.ttc</div>
<svg style="left:23px;top:295px;" width="11" height="13" viewBox="0 0 11 13" shape-rendering="crispEdges"><rect x="2" y="0" width="7" height="1" fill="#c4dcf4"/><rect x="1" y="1" width="1" height="1" fill="#c4dcf4"/><rect x="9" y="1" width="1" height="1" fill="#c4dcf4"/><rect x="0" y="2" width="1" height="1" fill="#c4dcf4"/><rect x="2" y="2" width="7" height="1" fill="#0000f0"/><rect x="10" y="2" width="1" height="1" fill="#c4dcf4"/><rect x="0" y="3" width="1" height="1" fill="#c4dcf4"/><rect x="1" y="3" width="1" height="1" fill="#0000f0"/><rect x="2" y="3" width="7" height="1" fill="#e6f2fc"/><rect x="9" y="3" width="1" height="1" fill="#0000f0"/><rect x="10" y="3" width="1" height="1" fill="#c4dcf4"/><rect x="0" y="4" width="1" height="1" fill="#c4dcf4"/><rect x="1" y="4" width="1" height="1" fill="#0000f0"/><rect x="2" y="4" width="3" height="1" fill="#e6f2fc"/><rect x="5" y="4" width="1" height="1" fill="#000000"/><rect x="6" y="4" width="3" height="1" fill="#e6f2fc"/><rect x="9" y="4" width="1" height="1" fill="#0000f0"/><rect x="10" y="4" width="1" height="1" fill="#c4dcf4"/><rect x="0" y="5" width="1" height="1" fill="#c4dcf4"/><rect x="1" y="5" width="1" height="1" fill="#0000f0"/><rect x="2" y="5" width="3" height="1" fill="#e6f2fc"/><rect x="5" y="5" width="1" height="1" fill="#000000"/><rect x="6" y="5" width="3" height="1" fill="#e6f2fc"/><rect x="9" y="5" width="1" height="1" fill="#0000f0"/><rect x="10" y="5" width="1" height="1" fill="#c4dcf4"/><rect x="0" y="6" width="1" height="1" fill="#c4dcf4"/><rect x="1" y="6" width="1" height="1" fill="#0000f0"/><rect x="2" y="6" width="1" height="1" fill="#e6f2fc"/><rect x="3" y="6" width="5" height="1" fill="#000000"/><rect x="8" y="6" width="1" height="1" fill="#e6f2fc"/><rect x="9" y="6" width="1" height="1" fill="#0000f0"/><rect x="10" y="6" width="1" height="1" fill="#c4dcf4"/><rect x="0" y="7" width="1" height="1" fill="#c4dcf4"/><rect x="1" y="7" width="1" height="1" fill="#0000f0"/><rect x="2" y="7" width="3" height="1" fill="#e6f2fc"/><rect x="5" y="7" width="1" height="1" fill="#000000"/><rect x="6" y="7" width="3" height="1" fill="#e6f2fc"/><rect x="9" y="7" width="1" height="1" fill="#0000f0"/><rect x="10" y="7" width="1" height="1" fill="#c4dcf4"/><rect x="0" y="8" width="1" height="1" fill="#c4dcf4"/><rect x="1" y="8" width="1" height="1" fill="#0000f0"/><rect x="2" y="8" width="3" height="1" fill="#e6f2fc"/><rect x="5" y="8" width="1" height="1" fill="#000000"/><rect x="6" y="8" width="3" height="1" fill="#e6f2fc"/><rect x="9" y="8" width="1" height="1" fill="#0000f0"/><rect x="10" y="8" width="1" height="1" fill="#c4dcf4"/><rect x="0" y="9" width="1" height="1" fill="#c4dcf4"/><rect x="1" y="9" width="1" height="1" fill="#0000f0"/><rect x="2" y="9" width="7" height="1" fill="#e6f2fc"/><rect x="9" y="9" width="1" height="1" fill="#0000f0"/><rect x="10" y="9" width="1" height="1" fill="#c4dcf4"/><rect x="0" y="10" width="1" height="1" fill="#c4dcf4"/><rect x="2" y="10" width="7" height="1" fill="#0000f0"/><rect x="10" y="10" width="1" height="1" fill="#c4dcf4"/><rect x="1" y="11" width="1" height="1" fill="#c4dcf4"/><rect x="9" y="11" width="1" height="1" fill="#c4dcf4"/><rect x="2" y="12" width="7" height="1" fill="#c4dcf4"/></svg>
<div style="left:28px;top:292px;width:1px;height:1px;background:#555;"></div>
<div style="left:28px;top:294px;width:1px;height:1px;background:#555;"></div>
<div style="left:34px;top:301px;width:1px;height:1px;background:#555;"></div>
<div style="left:36px;top:301px;width:1px;height:1px;background:#555;"></div>
<div style="left:38px;top:301px;width:1px;height:1px;background:#555;"></div>
<svg style="left:38px;top:293px;shape-rendering:auto" width="16" height="13" viewBox="0 0 16 13" shape-rendering="crispEdges"><path d="M0.5 0.5 H11.5 L15.5 4.5 V12.5 H0.5 Z M11.5 0.5 V4.5 H15.5" fill="#fff" stroke="#a8b0b8" stroke-width="1"/><path d="M5 11 L7.5 5 L10 11" stroke="#2050b0" stroke-width="1.1" fill="none"/><path d="M2 11 Q4 9 6 10 M9 10 Q12 8 14 11" stroke="#a8c0e8" fill="none"/><path d="M3 1.5 H6 M8 1.5 H10" stroke="#b8d0f0"/></svg>
<div class="t" style="left:253.81px;top:294.00px;font-size:12px;color:#000;font-weight:normal;transform:scaleX(0.9000);transform-origin:0 0;">929,0 MB</div>
<div class="t" style="left:367.53px;top:294.00px;font-size:12px;color:#000;font-weight:normal;transform:scaleX(0.9000);transform-origin:0 0;">2.11 %</div>
<div style="left:396px;top:307px;width:4px;height:2px;background:#3db54a;"></div>
<div class="t" style="left:488.02px;top:294.00px;font-size:12px;color:#000;font-weight:normal;transform:scaleX(0.9000);transform-origin:0 0;">81</div>
<div class="t" style="left:594.33px;top:294.00px;font-size:12px;color:#000;font-weight:normal;transform:scaleX(0.9000);transform-origin:0 0;">0</div>
<div style="left:2px;top:310px;width:616px;height:1px;background:#dcdcdc;"></div>
<div class="t" style="left:56.27px;top:313.00px;font-size:12px;color:#000;font-weight:normal;transform:scaleX(1.0070);transform-origin:0 0;">*.cab</div>
<svg style="left:23px;top:314px;" width="11" height="13" viewBox="0 0 11 13" shape-rendering="crispEdges"><rect x="2" y="0" width="7" height="1" fill="#c4dcf4"/><rect x="1" y="1" width="1" height="1" fill="#c4dcf4"/><rect x="9" y="1" width="1" height="1" fill="#c4dcf4"/><rect x="0" y="2" width="1" height="1" fill="#c4dcf4"/><rect x="2" y="2" width="7" height="1" fill="#0000f0"/><rect x="10" y="2" width="1" height="1" fill="#c4dcf4"/><rect x="0" y="3" width="1" height="1" fill="#c4dcf4"/><rect x="1" y="3" width="1" height="1" fill="#0000f0"/><rect x="2" y="3" width="7" height="1" fill="#e6f2fc"/><rect x="9" y="3" width="1" height="1" fill="#0000f0"/><rect x="10" y="3" width="1" height="1" fill="#c4dcf4"/><rect x="0" y="4" width="1" height="1" fill="#c4dcf4"/><rect x="1" y="4" width="1" height="1" fill="#0000f0"/><rect x="2" y="4" width="3" height="1" fill="#e6f2fc"/><rect x="5" y="4" width="1" height="1" fill="#000000"/><rect x="6" y="4" width="3" height="1" fill="#e6f2fc"/><rect x="9" y="4" width="1" height="1" fill="#0000f0"/><rect x="10" y="4" width="1" height="1" fill="#c4dcf4"/><rect x="0" y="5" width="1" height="1" fill="#c4dcf4"/><rect x="1" y="5" width="1" height="1" fill="#0000f0"/><rect x="2" y="5" width="3" height="1" fill="#e6f2fc"/><rect x="5" y="5" width="1" height="1" fill="#000000"/><rect x="6" y="5" width="3" height="1" fill="#e6f2fc"/><rect x="9" y="5" width="1" height="1" fill="#0000f0"/><rect x="10" y="5" width="1" height="1" fill="#c4dcf4"/><rect x="0" y="6" width="1" height="1" fill="#c4dcf4"/><rect x="1" y="6" width="1" height="1" fill="#0000f0"/><rect x="2" y="6" width="1" height="1" fill="#e6f2fc"/><rect x="3" y="6" width="5" height="1" fill="#000000"/><rect x="8" y="6" width="1" height="1" fill="#e6f2fc"/><rect x="9" y="6" width="1" height="1" fill="#0000f0"/><rect x="10" y="6" width="1" height="1" fill="#c4dcf4"/><rect x="0" y="7" width="1" height="1" fill="#c4dcf4"/><rect x="1" y="7" width="1" height="1" fill="#0000f0"/><rect x="2" y="7" width="3" height="1" fill="#e6f2fc"/><rect x="5" y="7" width="1" height="1" fill="#000000"/><rect x="6" y="7" width="3" height="1" fill="#e6f2fc"/><rect x="9" y="7" width="1" height="1" fill="#0000f0"/><rect x="10" y="7" width="1" height="1" fill="#c4dcf4"/><rect x="0" y="8" width="1" height="1" fill="#c4dcf4"/><rect x="1" y="8" width="1" height="1" fill="#0000f0"/><rect x="2" y="8" width="3" height="1" fill="#e6f2fc"/><rect x="5" y="8" width="1" height="1" fill="#000000"/><rect x="6" y="8" width="3" height="1" fill="#e6f2fc"/><rect x="9" y="8" width="1" height="1" fill="#0000f0"/><rect x="10" y="8" width="1" height="1" fill="#c4dcf4"/><rect x="0" y="9" width="1" height="1" fill="#c4dcf4"/><rect x="1" y="9" width="1" height="1" fill="#0000f0"/><rect x="2" y="9" width="7" height="1" fill="#e6f2fc"/><rect x="9" y="9" width="1" height="1" fill="#0000f0"/><rect x="10" y="9" width="1" height="1" fill="#c4dcf4"/><rect x="0" y="10" width="1" height="1" fill="#c4dcf4"/><rect x="2" y="10" width="7" height="1" fill="#0000f0"/><rect x="10" y="10" width="1" height="1" fill="#c4dcf4"/><rect x="1" y="11" width="1" height="1" fill="#c4dcf4"/><rect x="9" y="11" width="1" height="1" fill="#c4dcf4"/><rect x="2" y="12" width="7" height="1" fill="#c4dcf4"/></svg>
<div style="left:28px;top:311px;width:1px;height:1px;background:#555;"></div>
<div style="left:28px;top:313px;width:1px;height:1px;background:#555;"></div>
<div style="left:34px;top:320px;width:1px;height:1px;background:#555;"></div>
<div style="left:36px;top:320px;width:1px;height:1px;background:#555;"></div>
<div style="left:38px;top:320px;width:1px;height:1px;background:#555;"></div>
<svg style="left:40px;top:312px;" width="12" height="16" viewBox="0 0 12 16" shape-rendering="crispEdges"><rect x="0.5" y="0.5" width="11" height="15" fill="#c0c0c0" stroke="#6a6a6a"/><rect x="2" y="2" width="8" height="2" fill="#6090c0"/><rect x="2" y="4" width="8" height="4" fill="#f0b040"/><rect x="2" y="9" width="8" height="5" fill="#909090"/><rect x="4" y="10.5" width="4" height="1" fill="#e0e0e0"/></svg>
<div class="t" style="left:253.81px;top:313.00px;font-size:12px;color:#000;font-weight:normal;transform:scaleX(0.9000);transform-origin:0 0;">912,0 MB</div>
<div class="t" style="left:366.72px;top:313.00px;font-size:12px;color:#000;font-weight:normal;transform:scaleX(0.9000);transform-origin:0 0;">2.07 %</div>
<div style="left:396px;top:326px;width:4px;height:2px;background:#3db54a;"></div>
<div class="t" style="left:482.02px;top:313.00px;font-size:12px;color:#000;font-weight:normal;transform:scaleX(0.9000);transform-origin:0 0;">780</div>
<div class="t" style="left:594.33px;top:313.00px;font-size:12px;color:#000;font-weight:normal;transform:scaleX(0.9000);transform-origin:0 0;">0</div>
<div style="left:2px;top:329px;width:616px;height:1px;background:#dcdcdc;"></div>
<div class="t" style="left:56.24px;top:332.00px;font-size:12px;color:#000;font-weight:normal;transform:scaleX(1.0621);transform-origin:0 0;">*.msi</div>
<svg style="left:23px;top:333px;" width="11" height="13" viewBox="0 0 11 13" shape-rendering="crispEdges"><rect x="2" y="0" width="7" height="1" fill="#c4dcf4"/><rect x="1" y="1" width="1" height="1" fill="#c4dcf4"/><rect x="9" y="1" width="1" height="1" fill="#c4dcf4"/><rect x="0" y="2" width="1" height="1" fill="#c4dcf4"/><rect x="2" y="2" width="7" height="1" fill="#0000f0"/><rect x="10" y="2" width="1" height="1" fill="#c4dcf4"/><rect x="0" y="3" width="1" height="1" fill="#c4dcf4"/><rect x="1" y="3" width="1" height="1" fill="#0000f0"/><rect x="2" y="3" width="7" height="1" fill="#e6f2fc"/><rect x="9" y="3" width="1" height="1" fill="#0000f0"/><rect x="10" y="3" width="1" height="1" fill="#c4dcf4"/><rect x="0" y="4" width="1" height="1" fill="#c4dcf4"/><rect x="1" y="4" width="1" height="1" fill="#0000f0"/><rect x="2" y="4" width="3" height="1" fill="#e6f2fc"/><rect x="5" y="4" width="1" height="1" fill="#000000"/><rect x="6" y="4" width="3" height="1" fill="#e6f2fc"/><rect x="9" y="4" width="1" height="1" fill="#0000f0"/><rect x="10" y="4" width="1" height="1" fill="#c4dcf4"/><rect x="0" y="5" width="1" height="1" fill="#c4dcf4"/><rect x="1" y="5" width="1" height="1" fill="#0000f0"/><rect x="2" y="5" width="3" height="1" fill="#e6f2fc"/><rect x="5" y="5" width="1" height="1" fill="#000000"/><rect x="6" y="5" width="3" height="1" fill="#e6f2fc"/><rect x="9" y="5" width="1" height="1" fill="#0000f0"/><rect x="10" y="5" width="1" height="1" fill="#c4dcf4"/><rect x="0" y="6" width="1" height="1" fill="#c4dcf4"/><rect x="1" y="6" width="1" height="1" fill="#0000f0"/><rect x="2" y="6" width="1" height="1" fill="#e6f2fc"/><rect x="3" y="6" width="5" height="1" fill="#000000"/><rect x="8" y="6" width="1" height="1" fill="#e6f2fc"/><rect x="9" y="6" width="1" height="1" fill="#0000f0"/><rect x="10" y="6" width="1" height="1" fill="#c4dcf4"/><rect x="0" y="7" width="1" height="1" fill="#c4dcf4"/><rect x="1" y="7" width="1" height="1" fill="#0000f0"/><rect x="2" y="7" width="3" height="1" fill="#e6f2fc"/><rect x="5" y="7" width="1" height="1" fill="#000000"/><rect x="6" y="7" width="3" height="1" fill="#e6f2fc"/><rect x="9" y="7" width="1" height="1" fill="#0000f0"/><rect x="10" y="7" width="1" height="1" fill="#c4dcf4"/><rect x="0" y="8" width="1" height="1" fill="#c4dcf4"/><rect x="1" y="8" width="1" height="1" fill="#0000f0"/><rect x="2" y="8" width="3" height="1" fill="#e6f2fc"/><rect x="5" y="8" width="1" height="1" fill="#000000"/><rect x="6" y="8" width="3" height="1" fill="#e6f2fc"/><rect x="9" y="8" width="1" height="1" fill="#0000f0"/><rect x="10" y="8" width="1" height="1" fill="#c4dcf4"/><rect x="0" y="9" width="1" height="1" fill="#c4dcf4"/><rect x="1" y="9" width="1" height="1" fill="#0000f0"/><rect x="2" y="9" width="7" height="1" fill="#e6f2fc"/><rect x="9" y="9" width="1" height="1" fill="#0000f0"/><rect x="10" y="9" width="1" height="1" fill="#c4dcf4"/><rect x="0" y="10" width="1" height="1" fill="#c4dcf4"/><rect x="2" y="10" width="7" height="1" fill="#0000f0"/><rect x="10" y="10" width="1" height="1" fill="#c4dcf4"/><rect x="1" y="11" width="1" height="1" fill="#c4dcf4"/><rect x="9" y="11" width="1" height="1" fill="#c4dcf4"/><rect x="2" y="12" width="7" height="1" fill="#c4dcf4"/></svg>
<div style="left:28px;top:330px;width:1px;height:1px;background:#555;"></div>
<div style="left:28px;top:332px;width:1px;height:1px;background:#555;"></div>
<div style="left:34px;top:339px;width:1px;height:1px;background:#555;"></div>
<div style="left:36px;top:339px;width:1px;height:1px;background:#555;"></div>
<div style="left:38px;top:339px;width:1px;height:1px;background:#555;"></div>
<svg style="left:38px;top:331px;shape-rendering:auto" width="16" height="16" viewBox="0 0 16 16" shape-rendering="crispEdges"><rect x="6" y="0" width="9" height="9" fill="#000"/><rect x="7" y="1" width="6" height="6" fill="#2a80e0"/><path d="M2 5 h5 v9 h-5z" fill="#fff" stroke="#000"/><circle cx="8" cy="11" r="4" fill="#d0d0d0" stroke="#000"/><circle cx="8" cy="11" r="1.5" fill="#30a040"/><path d="M6 9 l3 0 l-2 3z" fill="#f0a020"/></svg>
<div class="t" style="left:253.81px;top:332.00px;font-size:12px;color:#000;font-weight:normal;transform:scaleX(0.9000);transform-origin:0 0;">872,0 MB</div>
<div class="t" style="left:366.72px;top:332.00px;font-size:12px;color:#000;font-weight:normal;transform:scaleX(0.9000);transform-origin:0 0;">1.98 %</div>
<div style="left:396px;top:345px;width:4px;height:2px;background:#3db54a;"></div>
<div class="t" style="left:482.02px;top:332.00px;font-size:12px;color:#000;font-weight:normal;transform:scaleX(0.9000);transform-origin:0 0;">247</div>
<div class="t" style="left:594.33px;top:332.00px;font-size:12px;color:#000;font-weight:normal;transform:scaleX(0.9000);transform-origin:0 0;">0</div>
<div style="left:2px;top:348px;width:616px;height:1px;background:#dcdcdc;"></div>
<div class="t" style="left:56.19px;top:351.00px;font-size:12px;color:#000;font-weight:normal;transform:scaleX(1.1195);transform-origin:0 0;">*.mui</div>
<svg style="left:23px;top:352px;" width="11" height="13" viewBox="0 0 11 13" shape-rendering="crispEdges"><rect x="2" y="0" width="7" height="1" fill="#c4dcf4"/><rect x="1" y="1" width="1" height="1" fill="#c4dcf4"/><rect x="9" y="1" width="1" height="1" fill="#c4dcf4"/><rect x="0" y="2" width="1" height="1" fill="#c4dcf4"/><rect x="2" y="2" width="7" height="1" fill="#0000f0"/><rect x="10" y="2" width="1" height="1" fill="#c4dcf4"/><rect x="0" y="3" width="1" height="1" fill="#c4dcf4"/><rect x="1" y="3" width="1" height="1" fill="#0000f0"/><rect x="2" y="3" width="7" height="1" fill="#e6f2fc"/><rect x="9" y="3" width="1" height="1" fill="#0000f0"/><rect x="10" y="3" width="1" height="1" fill="#c4dcf4"/><rect x="0" y="4" width="1" height="1" fill="#c4dcf4"/><rect x="1" y="4" width="1" height="1" fill="#0000f0"/><rect x="2" y="4" width="3" height="1" fill="#e6f2fc"/><rect x="5" y="4" width="1" height="1" fill="#000000"/><rect x="6" y="4" width="3" height="1" fill="#e6f2fc"/><rect x="9" y="4" width="1" height="1" fill="#0000f0"/><rect x="10" y="4" width="1" height="1" fill="#c4dcf4"/><rect x="0" y="5" width="1" height="1" fill="#c4dcf4"/><rect x="1" y="5" width="1" height="1" fill="#0000f0"/><rect x="2" y="5" width="3" height="1" fill="#e6f2fc"/><rect x="5" y="5" width="1" height="1" fill="#000000"/><rect x="6" y="5" width="3" height="1" fill="#e6f2fc"/><rect x="9" y="5" width="1" height="1" fill="#0000f0"/><rect x="10" y="5" width="1" height="1" fill="#c4dcf4"/><rect x="0" y="6" width="1" height="1" fill="#c4dcf4"/><rect x="1" y="6" width="1" height="1" fill="#0000f0"/><rect x="2" y="6" width="1" height="1" fill="#e6f2fc"/><rect x="3" y="6" width="5" height="1" fill="#000000"/><rect x="8" y="6" width="1" height="1" fill="#e6f2fc"/><rect x="9" y="6" width="1" height="1" fill="#0000f0"/><rect x="10" y="6" width="1" height="1" fill="#c4dcf4"/><rect x="0" y="7" width="1" height="1" fill="#c4dcf4"/><rect x="1" y="7" width="1" height="1" fill="#0000f0"/><rect x="2" y="7" width="3" height="1" fill="#e6f2fc"/><rect x="5" y="7" width="1" height="1" fill="#000000"/><rect x="6" y="7" width="3" height="1" fill="#e6f2fc"/><rect x="9" y="7" width="1" height="1" fill="#0000f0"/><rect x="10" y="7" width="1" height="1" fill="#c4dcf4"/><rect x="0" y="8" width="1" height="1" fill="#c4dcf4"/><rect x="1" y="8" width="1" height="1" fill="#0000f0"/><rect x="2" y="8" width="3" height="1" fill="#e6f2fc"/><rect x="5" y="8" width="1" height="1" fill="#000000"/><rect x="6" y="8" width="3" height="1" fill="#e6f2fc"/><rect x="9" y="8" width="1" height="1" fill="#0000f0"/><rect x="10" y="8" width="1" height="1" fill="#c4dcf4"/><rect x="0" y="9" width="1" height="1" fill="#c4dcf4"/><rect x="1" y="9" width="1" height="1" fill="#0000f0"/><rect x="2" y="9" width="7" height="1" fill="#e6f2fc"/><rect x="9" y="9" width="1" height="1" fill="#0000f0"/><rect x="10" y="9" width="1" height="1" fill="#c4dcf4"/><rect x="0" y="10" width="1" height="1" fill="#c4dcf4"/><rect x="2" y="10" width="7" height="1" fill="#0000f0"/><rect x="10" y="10" width="1" height="1" fill="#c4dcf4"/><rect x="1" y="11" width="1" height="1" fill="#c4dcf4"/><rect x="9" y="11" width="1" height="1" fill="#c4dcf4"/><rect x="2" y="12" width="7" height="1" fill="#c4dcf4"/></svg>
<div style="left:28px;top:349px;width:1px;height:1px;background:#555;"></div>
<div style="left:28px;top:351px;width:1px;height:1px;background:#555;"></div>
<div style="left:34px;top:358px;width:1px;height:1px;background:#555;"></div>
<div style="left:36px;top:358px;width:1px;height:1px;background:#555;"></div>
<div style="left:38px;top:358px;width:1px;height:1px;background:#555;"></div>
<svg style="left:38px;top:350px;shape-rendering:auto" width="16" height="16" viewBox="0 0 16 16" shape-rendering="crispEdges"><defs><linearGradient id="mu" x1="0" y1="1" x2="1" y2="0"><stop offset="0" stop-color="#5aa8f0"/><stop offset="1" stop-color="#d8e8f8"/></linearGradient></defs><path d="M3 3 H15 V13 L12 16 H3Z" fill="#000"/><path d="M2 2 H14 V12 L11 15 H2Z" fill="url(#mu)"/><path d="M3 5 H13 M3 7.5 H13 M3 10 H12 M5 3 V14 M8 3 V14 M11 3 V12" stroke="#c0d8f4" stroke-width="0.6"/><path d="M3.5 0.5 V2.5 M5.5 0.5 V2.5 M7.5 0.5 V2.5 M9.5 0.5 V2.5 M11.5 0.5 V2.5 M13.5 0.5 V2.5" stroke="#303030" stroke-width="1"/></svg>
<div class="t" style="left:253.81px;top:351.00px;font-size:12px;color:#000;font-weight:normal;transform:scaleX(0.9000);transform-origin:0 0;">719,0 MB</div>
<div class="t" style="left:366.72px;top:351.00px;font-size:12px;color:#000;font-weight:normal;transform:scaleX(0.9000);transform-origin:0 0;">1.63 %</div>
<div style="left:397px;top:364px;width:3px;height:2px;background:#3db54a;"></div>
<div class="t" style="left:467.02px;top:351.00px;font-size:12px;color:#000;font-weight:normal;transform:scaleX(0.9000);transform-origin:0 0;">28.053</div>
<div class="t" style="left:594.33px;top:351.00px;font-size:12px;color:#000;font-weight:normal;transform:scaleX(0.9000);transform-origin:0 0;">0</div>
<div style="left:2px;top:367px;width:616px;height:1px;background:#dcdcdc;"></div>
<div class="t" style="left:56.13px;top:370.00px;font-size:12px;color:#000;font-weight:normal;transform:scaleX(1.2066);transform-origin:0 0;">*.ttf</div>
<svg style="left:23px;top:371px;" width="11" height="13" viewBox="0 0 11 13" shape-rendering="crispEdges"><rect x="2" y="0" width="7" height="1" fill="#c4dcf4"/><rect x="1" y="1" width="1" height="1" fill="#c4dcf4"/><rect x="9" y="1" width="1" height="1" fill="#c4dcf4"/><rect x="0" y="2" width="1" height="1" fill="#c4dcf4"/><rect x="2" y="2" width="7" height="1" fill="#0000f0"/><rect x="10" y="2" width="1" height="1" fill="#c4dcf4"/><rect x="0" y="3" width="1" height="1" fill="#c4dcf4"/><rect x="1" y="3" width="1" height="1" fill="#0000f0"/><rect x="2" y="3" width="7" height="1" fill="#e6f2fc"/><rect x="9" y="3" width="1" height="1" fill="#0000f0"/><rect x="10" y="3" width="1" height="1" fill="#c4dcf4"/><rect x="0" y="4" width="1" height="1" fill="#c4dcf4"/><rect x="1" y="4" width="1" height="1" fill="#0000f0"/><rect x="2" y="4" width="3" height="1" fill="#e6f2fc"/><rect x="5" y="4" width="1" height="1" fill="#000000"/><rect x="6" y="4" width="3" height="1" fill="#e6f2fc"/><rect x="9" y="4" width="1" height="1" fill="#0000f0"/><rect x="10" y="4" width="1" height="1" fill="#c4dcf4"/><rect x="0" y="5" width="1" height="1" fill="#c4dcf4"/><rect x="1" y="5" width="1" height="1" fill="#0000f0"/><rect x="2" y="5" width="3" height="1" fill="#e6f2fc"/><rect x="5" y="5" width="1" height="1" fill="#000000"/><rect x="6" y="5" width="3" height="1" fill="#e6f2fc"/><rect x="9" y="5" width="1" height="1" fill="#0000f0"/><rect x="10" y="5" width="1" height="1" fill="#c4dcf4"/><rect x="0" y="6" width="1" height="1" fill="#c4dcf4"/><rect x="1" y="6" width="1" height="1" fill="#0000f0"/><rect x="2" y="6" width="1" height="1" fill="#e6f2fc"/><rect x="3" y="6" width="5" height="1" fill="#000000"/><rect x="8" y="6" width="1" height="1" fill="#e6f2fc"/><rect x="9" y="6" width="1" height="1" fill="#0000f0"/><rect x="10" y="6" width="1" height="1" fill="#c4dcf4"/><rect x="0" y="7" width="1" height="1" fill="#c4dcf4"/><rect x="1" y="7" width="1" height="1" fill="#0000f0"/><rect x="2" y="7" width="3" height="1" fill="#e6f2fc"/><rect x="5" y="7" width="1" height="1" fill="#000000"/><rect x="6" y="7" width="3" height="1" fill="#e6f2fc"/><rect x="9" y="7" width="1" height="1" fill="#0000f0"/><rect x="10" y="7" width="1" height="1" fill="#c4dcf4"/><rect x="0" y="8" width="1" height="1" fill="#c4dcf4"/><rect x="1" y="8" width="1" height="1" fill="#0000f0"/><rect x="2" y="8" width="3" height="1" fill="#e6f2fc"/><rect x="5" y="8" width="1" height="1" fill="#000000"/><rect x="6" y="8" width="3" height="1" fill="#e6f2fc"/><rect x="9" y="8" width="1" height="1" fill="#0000f0"/><rect x="10" y="8" width="1" height="1" fill="#c4dcf4"/><rect x="0" y="9" width="1" height="1" fill="#c4dcf4"/><rect x="1" y="9" width="1" height="1" fill="#0000f0"/><rect x="2" y="9" width="7" height="1" fill="#e6f2fc"/><rect x="9" y="9" width="1" height="1" fill="#0000f0"/><rect x="10" y="9" width="1" height="1" fill="#c4dcf4"/><rect x="0" y="10" width="1" height="1" fill="#c4dcf4"/><rect x="2" y="10" width="7" height="1" fill="#0000f0"/><rect x="10" y="10" width="1" height="1" fill="#c4dcf4"/><rect x="1" y="11" width="1" height="1" fill="#c4dcf4"/><rect x="9" y="11" width="1" height="1" fill="#c4dcf4"/><rect x="2" y="12" width="7" height="1" fill="#c4dcf4"/></svg>
<div style="left:28px;top:368px;width:1px;height:1px;background:#555;"></div>
<div style="left:28px;top:370px;width:1px;height:1px;background:#555;"></div>
<div style="left:34px;top:377px;width:1px;height:1px;background:#555;"></div>
<div style="left:36px;top:377px;width:1px;height:1px;background:#555;"></div>
<div style="left:38px;top:377px;width:1px;height:1px;background:#555;"></div>
<svg style="left:38px;top:369px;shape-rendering:auto" width="16" height="13" viewBox="0 0 16 13" shape-rendering="crispEdges"><path d="M0.5 0.5 H11.5 L15.5 4.5 V12.5 H0.5 Z M11.5 0.5 V4.5 H15.5" fill="#fff" stroke="#a8b0b8" stroke-width="1"/><path d="M5 11 L7.5 5 L10 11" stroke="#2050b0" stroke-width="1.1" fill="none"/><path d="M2 11 Q4 9 6 10 M9 10 Q12 8 14 11" stroke="#a8c0e8" fill="none"/><path d="M3 1.5 H6 M8 1.5 H10" stroke="#b8d0f0"/></svg>
<div class="t" style="left:253.81px;top:370.00px;font-size:12px;color:#000;font-weight:normal;transform:scaleX(0.9000);transform-origin:0 0;">543,0 MB</div>
<div class="t" style="left:366.72px;top:370.00px;font-size:12px;color:#000;font-weight:normal;transform:scaleX(0.9000);transform-origin:0 0;">1.23 %</div>
<div style="left:398px;top:383px;width:2px;height:2px;background:#3db54a;"></div>
<div class="t" style="left:473.02px;top:370.00px;font-size:12px;color:#000;font-weight:normal;transform:scaleX(0.9000);transform-origin:0 0;">1.165</div>
<div class="t" style="left:594.33px;top:370.00px;font-size:12px;color:#000;font-weight:normal;transform:scaleX(0.9000);transform-origin:0 0;">0</div>
<svg style="left:1px;top:384px;" width="18" height="15" viewBox="0 0 18 15" shape-rendering="crispEdges"><rect width="18" height="15" fill="url(#nz)"/></svg>
<svg style="left:7px;top:388px;" width="6" height="7" viewBox="0 0 6 7" shape-rendering="crispEdges"><rect x="3" y="0" width="2" height="1" fill="#3a3a3a"/><rect x="2" y="1" width="3" height="1" fill="#3a3a3a"/><rect x="1" y="2" width="3" height="1" fill="#3a3a3a"/><rect x="0" y="3" width="3" height="1" fill="#3a3a3a"/><rect x="1" y="4" width="3" height="1" fill="#3a3a3a"/><rect x="2" y="5" width="3" height="1" fill="#3a3a3a"/><rect x="3" y="6" width="2" height="1" fill="#3a3a3a"/></svg>
<div style="left:19px;top:384px;width:598px;height:15px;background:#d4d4d4;"></div>
</div>
</body></html>
